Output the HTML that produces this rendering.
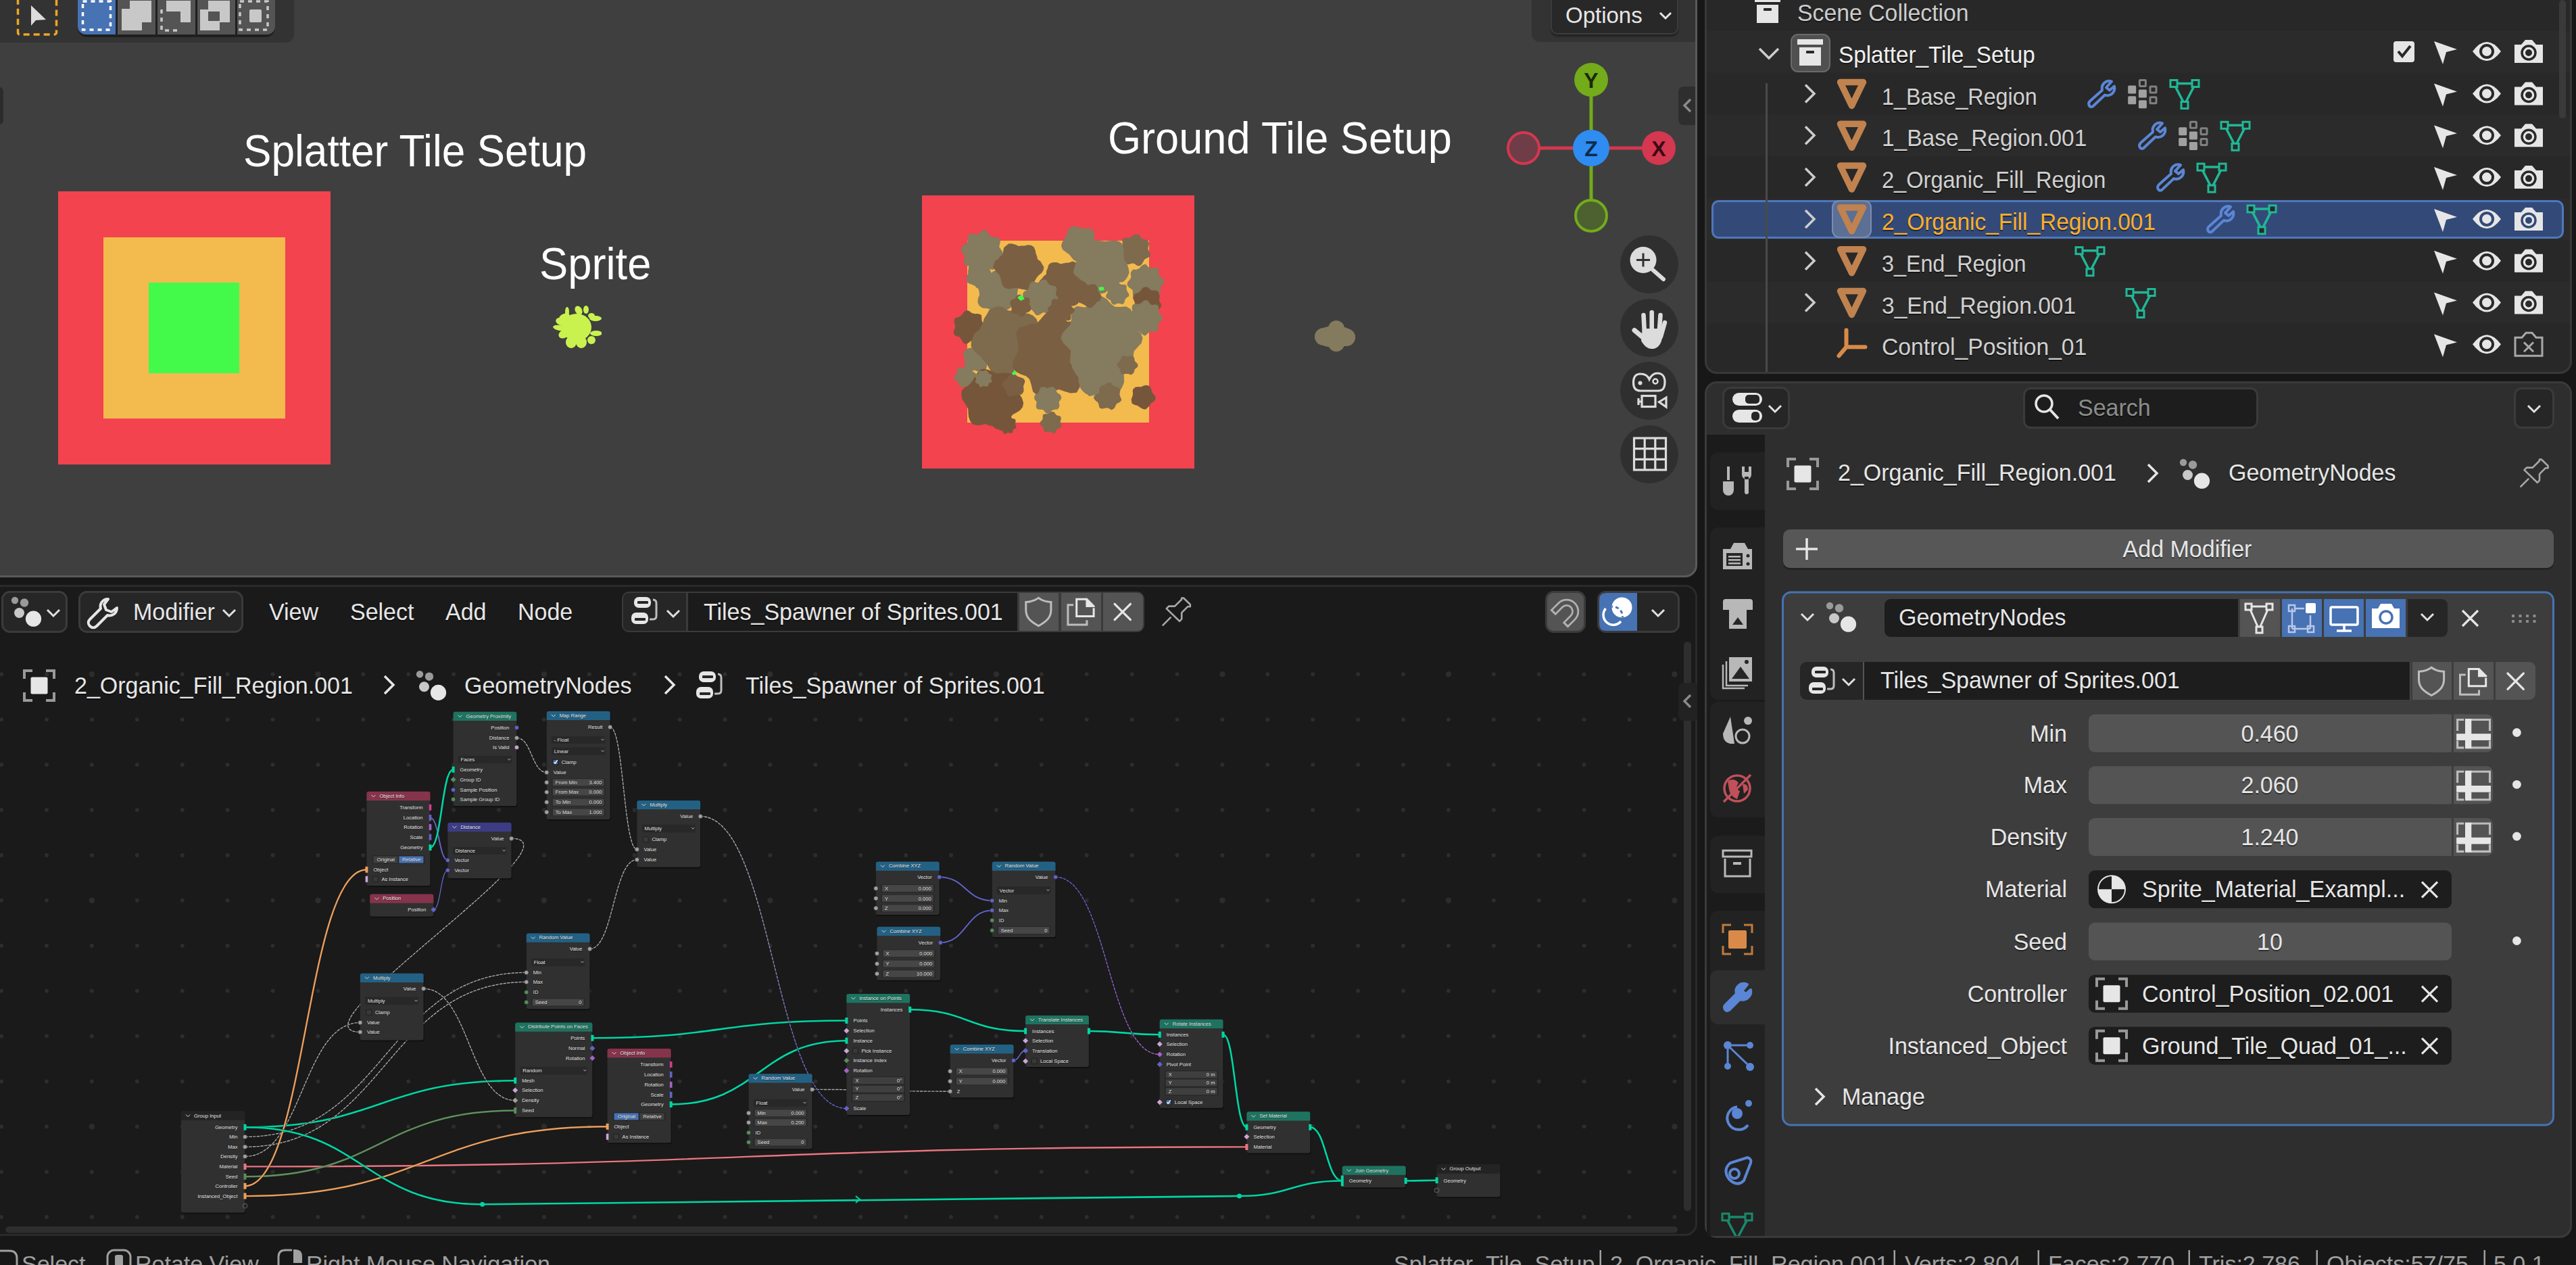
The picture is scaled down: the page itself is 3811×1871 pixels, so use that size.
<!DOCTYPE html>
<html><head><meta charset="utf-8">
<style>
*{box-sizing:border-box}
html,body{margin:0;padding:0}
body{width:3811px;height:1871px;background:#171717;overflow:hidden;position:relative;font-family:"Liberation Sans",sans-serif;color:#e6e6e6}
.a{position:absolute}
.t{position:absolute;white-space:nowrap;line-height:1}
#vp{left:0;top:0;width:2511px;height:854px;background:#3f3f3f;border-right:3px solid #5a5a5a;border-bottom:3px solid #5a5a5a;border-bottom-right-radius:18px;overflow:hidden}
#ne{left:0;top:865px;width:2511px;height:963px;background:#1a1a1a;border:3px solid #2a2a2a;border-left:none;border-radius:0 18px 18px 0;overflow:hidden}
#ol{left:2522px;top:-20px;width:1283px;height:573px;background:#282828;border:3px solid #383838;border-radius:18px;overflow:hidden}
#pr{left:2522px;top:564px;width:1283px;height:1267px;background:#2e2e2e;border:3px solid #3a3a3a;border-radius:18px;overflow:hidden}
#sb{left:0;top:1831px;width:3811px;height:40px;background:#171717}
</style></head>
<body>

<div id="vp" class="a">
 <!-- toolbar header region -->
 <div class="a" style="left:0;top:0;width:435px;height:63px;background:#333333;border-bottom-right-radius:12px"></div>
 <svg class="a" style="left:0;top:0" width="440" height="60" viewBox="0 0 440 60">
  <rect x="26.5" y="-8" width="57" height="59" rx="3" fill="none" stroke="#f0a623" stroke-width="3.5" stroke-dasharray="9 6"/>
  <path d="M46 8 L46 38 L53 30 L68 29 Z" fill="#dcdcdc"/>
 </svg>
 <div class="a" style="left:115px;top:-10px;width:292px;height:65px;background:#1f1f1f;border-radius:0 0 14px 14px"></div>
 <div class="a" style="left:115px;top:-10px;width:56px;height:61px;background:#4772b3;border-radius:0 0 0 12px"></div>
 <div class="a" style="left:174px;top:-10px;width:56px;height:61px;background:#545454"></div>
 <div class="a" style="left:233px;top:-10px;width:56px;height:61px;background:#545454"></div>
 <div class="a" style="left:292px;top:-10px;width:56px;height:61px;background:#545454"></div>
 <div class="a" style="left:351px;top:-10px;width:56px;height:61px;background:#545454;border-radius:0 0 12px 0"></div>
 <svg class="a" style="left:115px;top:0" width="292" height="52" viewBox="0 0 292 52">
  <rect x="7.5" y="2" width="41" height="42" fill="none" stroke="#fff" stroke-width="3.5" stroke-dasharray="6 6"/>
  <path d="M65 13 H77 V1 H109 V33 H95 V45 H65 Z" fill="#c8c8c8"/>
  <path d="M131 1 H167 V33 H152 V17 H131 Z" fill="#c8c8c8"/>
  <path d="M124 14 V45 H152" fill="none" stroke="#c8c8c8" stroke-width="3.5" stroke-dasharray="6 6"/>
  <path d="M181 14 H193 V31 H210 V45 H181 Z M193 1 H225 V33 H210 V17 H193 Z" fill="#c8c8c8"/>
  <rect x="240" y="2" width="41" height="42" fill="none" stroke="#c8c8c8" stroke-width="3.5" stroke-dasharray="6 6"/>
  <rect x="254" y="14" width="18" height="19" rx="2" fill="#c8c8c8"/>
 </svg>
 <div class="a" style="left:-8px;top:129px;width:13px;height:55px;background:#2c2c2c;border-radius:6px"></div>

 <!-- titles -->
 <div class="t" style="left:360px;top:189px;font-size:67px;color:#fff;transform:scaleX(0.928);transform-origin:0 0">Splatter Tile Setup</div>
 <div class="t" style="left:798px;top:356px;font-size:67px;color:#fff;transform:scaleX(0.945);transform-origin:0 0">Sprite</div>
 <div class="t" style="left:1639px;top:170px;font-size:67px;color:#fff;transform:scaleX(0.942);transform-origin:0 0">Ground Tile Setup</div>

 <!-- left squares -->
 <div class="a" style="left:86px;top:283px;width:403px;height:404px;background:#f2434f"></div>
 <div class="a" style="left:153px;top:351px;width:269px;height:268px;background:#f3ba4d"></div>
 <div class="a" style="left:220px;top:418px;width:134px;height:134px;background:#43fa4b"></div>

 <!-- right squares -->
 <div class="a" style="left:1364px;top:289px;width:403px;height:404px;background:#f2434f"></div>
 <div class="a" style="left:1431px;top:356px;width:269px;height:269px;background:#f3ba4d"></div>
<svg class="a" style="left:1380px;top:300px" width="380" height="380" viewBox="1380 300 380 380"><polygon points="1459.1,484.0 1458.2,487.2 1456.7,490.1 1453.2,492.0 1452.0,494.4 1451.8,497.7 1450.7,500.7 1449.1,503.7 1446.3,505.3 1442.6,504.8 1439.5,504.4 1436.7,504.1 1434.0,506.3 1430.8,508.6 1427.4,508.6 1424.6,506.7 1423.0,503.1 1421.2,500.7 1419.6,498.4 1416.4,497.5 1412.7,496.3 1411.0,493.5 1410.6,490.3 1411.9,486.9 1413.1,484.0 1413.0,481.2 1411.7,478.0 1411.6,474.7 1412.1,471.3 1415.2,469.6 1418.8,468.8 1421.2,467.3 1423.3,465.5 1425.1,462.5 1427.6,459.9 1430.7,459.0 1434.0,459.9 1436.8,462.5 1439.5,463.5 1442.2,464.3 1445.6,463.9 1449.0,464.4 1452.0,466.0 1452.2,470.0 1452.4,473.4 1453.1,476.1 1454.8,478.4 1457.5,480.9" fill="#76563a"/><polygon points="1466.4,530.0 1465.4,532.7 1463.1,534.8 1461.8,537.0 1460.2,538.8 1460.0,541.5 1459.3,544.3 1457.9,546.8 1456.1,549.3 1453.3,550.0 1450.5,550.5 1447.6,549.8 1445.0,548.7 1442.7,547.8 1440.2,547.9 1437.5,548.1 1434.8,547.7 1431.8,547.2 1429.8,545.2 1427.7,543.3 1427.0,540.4 1426.7,537.6 1427.0,534.8 1427.4,532.3 1426.6,530.0 1425.3,527.4 1425.3,524.7 1424.9,521.7 1426.3,519.2 1428.4,517.3 1431.1,516.1 1433.4,514.8 1436.1,514.7 1438.2,513.5 1440.1,511.8 1442.3,509.6 1445.0,509.1 1447.9,508.3 1450.6,508.9 1453.1,510.4 1454.9,512.8 1456.5,515.1 1457.6,517.4 1459.5,518.9 1461.7,520.4 1464.5,521.9 1466.4,524.3 1466.5,527.2" fill="#857b5e"/><polygon points="1444.0,557.0 1442.3,558.9 1441.6,560.6 1440.3,562.1 1440.1,564.0 1439.9,566.1 1439.5,568.5 1438.1,570.1 1435.9,570.6 1433.5,570.4 1431.6,570.6 1429.8,570.7 1428.0,571.2 1426.0,572.3 1423.8,572.6 1421.6,572.5 1419.9,571.0 1418.9,568.8 1418.2,566.8 1417.3,565.2 1415.8,564.0 1413.9,562.8 1412.4,561.2 1411.9,559.1 1411.8,557.0 1413.4,555.1 1415.0,553.5 1415.4,551.8 1416.0,550.1 1415.9,547.7 1416.5,545.5 1417.8,543.7 1420.0,543.2 1422.5,543.7 1424.5,543.9 1426.2,543.7 1428.0,542.8 1430.0,541.5 1432.2,541.3 1434.3,541.8 1435.8,543.5 1437.0,545.3 1438.0,547.0 1438.7,548.8 1440.1,550.0 1441.8,551.3 1443.8,552.8 1444.5,554.8" fill="#857b5e"/><polygon points="1482.9,372.0 1483.9,376.1 1483.1,380.1 1478.6,382.6 1475.2,384.8 1474.8,388.8 1474.0,393.0 1472.4,397.3 1468.6,399.0 1463.8,398.0 1459.8,397.5 1456.5,398.9 1453.0,402.2 1448.9,403.1 1445.0,401.9 1442.4,397.6 1439.7,395.0 1436.4,393.6 1431.8,393.2 1427.3,391.7 1426.0,387.6 1427.0,382.8 1427.4,378.9 1425.3,375.6 1422.3,372.0 1421.8,367.9 1423.5,364.1 1427.7,361.5 1431.0,359.3 1431.7,355.7 1431.7,350.7 1433.8,347.0 1437.6,345.3 1442.2,345.9 1446.3,346.9 1449.3,344.1 1453.0,340.9 1457.2,339.7 1460.9,342.7 1463.4,346.8 1465.9,349.7 1469.5,350.6 1474.2,350.8 1478.4,352.5 1479.9,356.4 1479.0,361.2 1478.2,365.3 1480.5,368.4" fill="#857b5e"/><polygon points="1468.6,407.0 1469.5,409.7 1469.3,412.4 1467.4,414.6 1465.8,416.7 1463.1,417.8 1461.2,419.2 1459.3,420.4 1458.2,423.0 1456.5,425.0 1454.3,426.6 1451.8,427.9 1449.0,427.2 1446.5,426.2 1444.1,425.3 1442.5,422.7 1440.4,421.9 1438.4,420.9 1435.8,420.2 1433.3,419.1 1431.0,417.4 1429.7,415.0 1429.0,412.4 1430.3,409.5 1430.9,407.0 1432.4,404.8 1432.1,402.5 1432.3,400.1 1432.9,397.7 1432.8,394.6 1434.5,392.5 1436.1,390.2 1439.2,390.0 1441.7,389.4 1444.5,390.4 1446.8,390.3 1449.0,389.6 1451.4,388.6 1454.0,388.3 1456.9,388.0 1459.6,388.6 1461.2,391.1 1462.9,393.1 1463.8,395.7 1464.2,398.2 1465.1,400.3 1466.1,402.4 1467.9,404.5" fill="#857b5e"/><polygon points="1505.0,433.0 1505.3,436.7 1507.4,441.2 1507.6,445.7 1505.8,449.6 1503.3,453.2 1498.1,454.1 1494.3,455.5 1491.2,457.5 1488.2,460.1 1485.1,463.3 1481.4,466.3 1477.0,467.1 1472.7,465.9 1469.3,461.8 1466.1,459.3 1463.2,456.9 1459.4,456.0 1454.3,455.7 1450.3,453.5 1447.4,450.1 1446.4,445.7 1447.0,441.0 1448.9,436.7 1448.9,433.0 1448.0,429.2 1446.4,424.8 1445.7,420.0 1447.6,416.0 1451.0,413.1 1455.5,411.5 1459.3,409.9 1462.9,408.5 1465.6,405.4 1468.6,401.8 1472.7,400.1 1477.0,398.9 1481.4,399.9 1485.0,403.1 1487.7,407.3 1490.7,409.3 1494.8,409.8 1498.9,411.1 1503.3,412.8 1505.9,416.3 1507.5,420.4 1506.8,425.0 1505.8,429.2" fill="#857b5e"/><polygon points="1544.4,395.0 1543.6,399.8 1540.7,404.0 1536.6,407.3 1533.7,410.4 1531.8,414.0 1529.7,417.7 1528.9,423.5 1525.3,426.7 1521.3,429.6 1516.0,428.6 1511.3,427.7 1507.0,426.7 1503.0,425.4 1498.6,426.5 1493.6,427.4 1488.8,426.6 1484.5,424.3 1482.3,419.7 1481.1,414.8 1480.0,410.6 1478.7,406.7 1475.4,403.5 1472.3,399.6 1469.1,395.0 1470.8,390.2 1472.2,385.7 1477.2,382.7 1479.7,379.3 1483.1,376.6 1484.1,372.1 1485.1,366.4 1488.7,363.3 1492.6,360.3 1497.7,360.4 1502.7,362.0 1507.0,363.9 1511.1,363.6 1515.4,363.5 1520.5,362.3 1525.6,362.8 1529.6,365.6 1531.7,370.3 1532.6,375.3 1534.2,379.3 1535.0,383.4 1539.3,386.4 1541.6,390.4" fill="#7a5f43"/><polygon points="1620.7,360.0 1621.1,363.2 1622.9,366.9 1621.8,370.3 1621.1,373.9 1617.9,376.0 1614.4,377.4 1611.3,378.6 1608.5,380.0 1605.6,380.7 1603.1,382.6 1600.3,385.3 1597.0,386.5 1593.5,386.8 1590.1,385.8 1587.3,383.3 1585.1,380.6 1583.2,378.0 1581.3,375.7 1578.4,374.3 1576.0,372.1 1572.9,370.0 1571.1,366.9 1570.0,363.6 1570.9,360.0 1572.3,356.8 1574.8,354.0 1575.8,351.2 1577.3,348.7 1578.6,345.9 1579.2,342.2 1580.5,338.4 1583.5,336.7 1586.4,334.5 1590.3,334.8 1593.8,335.7 1597.0,336.4 1599.9,337.8 1602.9,337.9 1606.3,337.4 1610.2,337.1 1613.4,338.7 1616.7,340.3 1618.5,343.5 1619.2,347.2 1619.0,350.9 1618.8,354.2 1618.8,357.1" fill="#857b5e"/><polygon points="1609.5,420.0 1608.4,424.7 1604.5,428.4 1600.5,431.4 1599.0,435.0 1597.3,438.7 1596.6,443.6 1595.1,448.8 1591.2,451.6 1586.6,452.7 1581.3,450.9 1576.9,449.7 1573.0,449.3 1569.1,449.8 1564.4,451.9 1559.5,452.6 1554.5,452.1 1551.8,447.6 1550.4,442.6 1548.3,438.9 1547.7,434.6 1544.9,431.6 1541.1,428.5 1538.5,424.5 1537.1,420.0 1537.9,415.4 1541.8,411.6 1544.4,408.2 1547.9,405.5 1548.1,400.9 1549.9,396.9 1551.3,391.7 1554.9,388.7 1559.7,387.9 1564.5,388.2 1569.1,390.5 1573.0,389.5 1577.1,388.8 1581.5,388.4 1586.8,386.6 1591.4,388.2 1594.5,392.0 1596.4,396.6 1597.5,401.2 1598.7,405.1 1601.2,408.3 1605.3,411.3 1607.6,415.4" fill="#7a5f43"/><polygon points="1565.1,440.0 1566.3,443.5 1566.4,447.1 1563.3,449.7 1560.3,451.7 1558.3,454.1 1557.8,457.8 1556.5,461.5 1553.9,464.1 1549.8,463.5 1546.0,462.4 1542.9,462.2 1540.0,464.2 1536.5,466.3 1533.0,466.2 1530.5,462.9 1528.3,460.3 1526.1,458.1 1522.4,457.6 1518.4,456.5 1516.2,453.8 1516.7,449.7 1518.4,445.8 1517.1,443.0 1514.9,440.0 1513.2,436.5 1513.6,432.9 1516.5,430.3 1520.6,428.8 1521.7,426.0 1522.7,422.7 1523.9,419.0 1526.5,416.6 1530.2,416.4 1534.1,418.2 1537.0,417.2 1540.0,414.7 1543.5,413.2 1547.0,413.8 1549.7,416.7 1551.6,419.9 1554.0,421.7 1557.6,422.4 1561.6,423.4 1563.2,426.6 1562.9,430.5 1561.9,434.1 1562.8,437.0" fill="#857b5e"/><polygon points="1699.0,370.0 1701.0,372.9 1702.0,376.2 1701.7,379.4 1698.2,381.1 1695.2,382.4 1693.0,384.0 1691.7,386.5 1690.1,389.3 1688.2,392.1 1685.3,393.4 1682.0,392.7 1679.0,390.5 1676.4,389.4 1673.7,389.7 1670.3,391.0 1667.1,390.7 1664.8,388.5 1663.4,385.6 1662.5,382.7 1661.3,380.2 1659.6,378.0 1656.3,376.1 1654.6,373.2 1655.9,370.0 1657.9,367.2 1659.3,364.7 1660.8,362.5 1660.6,359.4 1660.4,355.8 1661.8,352.8 1664.9,351.6 1668.5,351.8 1671.4,351.7 1673.8,350.6 1676.1,348.1 1679.0,346.6 1682.1,346.4 1685.1,347.2 1687.2,350.2 1688.9,352.9 1691.5,353.8 1694.5,354.5 1697.7,355.6 1699.5,358.1 1700.0,361.3 1699.0,364.6 1698.5,367.4" fill="#7e6a4d"/><polygon points="1722.4,418.0 1719.5,421.2 1717.3,424.0 1716.2,426.8 1717.0,430.7 1716.6,434.6 1714.4,437.4 1709.9,437.5 1706.2,437.4 1703.8,439.3 1701.5,442.4 1698.5,444.6 1695.0,444.3 1691.8,442.6 1689.2,439.6 1685.9,439.9 1682.4,439.9 1678.5,439.5 1676.0,437.0 1675.9,432.6 1675.6,429.2 1673.1,427.1 1669.8,424.7 1667.5,421.6 1668.0,418.0 1670.3,414.7 1672.6,412.0 1673.5,409.1 1672.6,405.1 1673.7,401.7 1675.8,398.8 1680.2,398.7 1683.5,398.1 1686.1,396.4 1688.5,393.6 1691.5,391.4 1695.0,390.6 1698.1,394.2 1700.8,396.2 1703.8,396.8 1707.7,396.1 1711.9,396.0 1714.4,398.6 1714.1,403.3 1714.7,406.6 1716.2,409.2 1719.8,411.4 1722.0,414.4" fill="#857b5e"/><polygon points="1715.3,446.0 1717.1,448.6 1718.1,451.7 1717.4,454.4 1715.4,456.6 1712.6,457.9 1710.2,459.2 1707.9,460.2 1706.4,462.3 1704.6,464.4 1702.5,466.5 1699.9,467.9 1697.0,467.1 1694.4,465.5 1692.1,464.1 1690.2,462.4 1687.9,461.8 1684.5,462.3 1681.8,461.2 1679.4,459.5 1678.9,456.5 1678.9,453.5 1678.9,450.8 1679.1,448.4 1678.2,446.0 1677.1,443.4 1676.0,440.4 1676.7,437.6 1678.3,435.2 1681.0,433.7 1684.3,433.3 1685.8,431.4 1687.7,429.9 1689.2,427.2 1691.4,425.2 1694.2,424.4 1697.0,424.4 1699.6,425.9 1701.7,428.6 1703.9,429.4 1706.5,429.5 1709.5,429.7 1712.6,430.4 1714.4,432.6 1715.0,435.6 1715.7,438.3 1715.2,441.1 1714.9,443.6" fill="#76563a"/><polygon points="1720.1,470.0 1718.9,473.3 1716.0,475.9 1714.0,478.3 1713.6,481.3 1714.1,485.4 1712.8,488.8 1709.7,490.4 1705.8,490.4 1702.3,489.9 1699.8,491.7 1697.2,494.1 1694.0,496.7 1690.7,495.0 1687.9,492.9 1685.7,490.2 1682.9,489.2 1679.2,489.3 1675.6,488.4 1673.6,485.7 1673.7,481.7 1674.4,478.1 1672.8,475.7 1669.4,473.2 1667.5,470.0 1668.8,466.7 1671.9,464.1 1673.9,461.7 1675.1,459.1 1674.5,455.0 1675.4,451.4 1678.1,449.3 1682.3,449.8 1685.5,449.6 1688.2,448.3 1690.8,445.7 1694.0,443.9 1697.4,444.1 1700.1,447.4 1702.2,450.2 1704.9,451.1 1709.1,450.3 1712.8,451.2 1714.2,454.5 1713.8,458.6 1714.2,461.6 1716.2,464.1 1718.3,466.8" fill="#857b5e"/><polygon points="1668.1,392.0 1669.6,397.2 1670.6,402.9 1668.7,408.0 1666.0,412.8 1662.1,416.7 1655.8,417.8 1651.6,420.2 1647.3,421.9 1644.1,426.1 1639.9,428.8 1635.4,432.7 1630.0,434.2 1624.3,435.1 1619.5,431.1 1615.1,428.1 1611.7,423.8 1608.1,420.5 1604.9,417.1 1599.8,415.1 1596.4,411.4 1591.1,408.1 1587.8,403.3 1588.9,397.4 1590.6,392.0 1592.3,387.0 1595.6,382.8 1597.2,378.4 1599.3,374.3 1599.8,368.8 1600.9,362.9 1604.4,358.6 1609.0,355.6 1614.4,354.3 1620.0,354.7 1625.3,356.0 1630.0,356.4 1634.6,357.0 1639.5,356.5 1644.9,356.1 1651.0,355.7 1656.5,357.5 1660.7,361.3 1662.3,367.2 1662.5,373.2 1662.6,378.5 1663.1,383.1 1665.3,387.4" fill="#857b5e"/><polygon points="1535.1,505.0 1535.8,511.0 1538.5,518.0 1538.0,524.9 1537.3,532.3 1531.5,536.8 1526.4,541.4 1518.6,542.3 1512.6,544.2 1506.8,545.6 1501.6,548.1 1496.3,552.9 1490.0,555.8 1483.0,558.1 1476.2,556.4 1469.8,553.8 1465.3,547.8 1461.8,541.7 1458.6,536.4 1454.3,532.4 1451.1,527.5 1445.5,523.4 1440.9,518.2 1436.5,512.0 1436.8,505.0 1439.3,498.3 1442.2,492.2 1448.9,488.0 1451.2,482.6 1454.1,477.5 1456.0,471.0 1459.7,465.6 1463.3,458.8 1469.3,455.0 1476.1,453.2 1483.3,454.0 1490.0,458.9 1495.9,459.8 1501.2,463.3 1507.6,462.5 1514.1,463.2 1521.7,463.7 1528.3,466.7 1533.4,471.7 1535.7,478.6 1534.5,486.6 1534.5,493.1 1532.7,499.4" fill="#7e6a4d"/><polygon points="1622.4,524.0 1624.5,532.5 1620.8,540.3 1613.7,546.2 1606.5,550.8 1603.0,557.0 1599.5,563.5 1597.4,572.7 1592.8,580.8 1583.8,581.4 1574.6,578.7 1566.8,575.9 1560.0,577.9 1552.5,580.8 1543.4,586.1 1534.7,585.0 1528.1,579.2 1525.6,568.8 1523.1,560.9 1518.0,556.2 1509.3,553.3 1500.8,548.5 1497.6,540.7 1499.7,531.9 1503.8,524.0 1506.9,517.0 1506.8,509.7 1504.5,501.0 1503.8,491.5 1508.4,484.4 1517.7,481.7 1525.5,479.0 1533.7,478.5 1538.8,472.9 1544.5,466.3 1551.5,459.6 1560.0,460.6 1567.8,465.1 1574.1,471.5 1579.9,475.9 1588.4,474.8 1597.2,475.5 1605.3,478.7 1610.5,485.3 1612.7,493.6 1610.4,503.1 1610.6,510.4 1616.8,516.5" fill="#7a5f43"/><polygon points="1690.5,500.0 1688.5,507.7 1682.5,514.1 1677.5,519.7 1676.8,527.0 1675.4,534.8 1673.1,543.1 1665.3,546.0 1656.3,545.6 1649.8,547.8 1643.8,551.3 1637.8,559.2 1630.0,561.2 1622.2,559.6 1616.2,551.5 1611.0,546.0 1603.2,546.5 1593.6,547.4 1587.2,542.8 1582.9,536.1 1583.4,526.9 1584.2,519.0 1579.2,513.6 1573.0,507.5 1569.2,500.0 1572.1,492.4 1578.1,486.1 1583.0,480.5 1584.9,474.0 1584.7,465.2 1586.8,456.8 1593.7,452.7 1603.7,454.4 1610.9,453.9 1616.5,449.7 1622.3,441.2 1630.0,438.3 1637.6,442.6 1643.6,449.4 1649.2,453.7 1656.5,454.1 1665.9,453.3 1672.7,457.3 1676.1,464.6 1676.8,473.0 1676.3,480.8 1680.5,486.5 1687.5,492.4" fill="#857b5e"/><polygon points="1666.6,545.0 1663.9,549.7 1662.6,554.3 1663.0,559.5 1663.0,565.2 1661.1,570.4 1658.5,575.5 1655.0,580.2 1648.9,581.2 1642.9,581.0 1637.9,582.1 1632.7,580.7 1628.0,581.9 1623.1,582.5 1617.3,584.9 1611.6,584.5 1606.4,582.5 1602.1,578.7 1598.6,574.4 1596.9,568.9 1595.4,563.8 1595.5,558.5 1592.2,554.6 1589.6,550.1 1586.5,545.0 1585.6,539.4 1586.0,533.7 1588.4,528.6 1592.2,524.3 1598.5,522.3 1602.3,519.3 1605.6,515.8 1608.8,511.7 1612.9,508.6 1617.2,504.7 1622.2,500.6 1628.0,500.4 1633.5,503.4 1638.0,507.7 1642.6,509.9 1645.9,514.0 1650.7,515.4 1655.4,517.6 1661.1,519.6 1664.8,523.8 1669.2,527.9 1669.2,534.0 1668.5,539.7" fill="#857b5e"/><polygon points="1512.4,590.0 1514.1,596.1 1513.0,602.1 1508.9,606.9 1503.3,610.4 1498.2,613.2 1495.3,617.3 1493.7,623.5 1490.9,629.7 1485.7,632.6 1480.1,635.3 1473.8,634.4 1468.0,630.0 1462.8,629.3 1458.1,627.1 1451.9,628.8 1445.4,629.1 1439.1,627.6 1435.2,622.8 1433.0,616.8 1432.4,610.6 1432.2,604.8 1429.8,600.2 1426.7,595.4 1423.1,590.0 1422.3,584.0 1422.6,577.8 1427.2,573.1 1433.0,569.8 1436.7,566.0 1439.8,561.8 1442.6,556.9 1445.8,551.6 1450.0,546.5 1456.1,545.6 1462.3,546.9 1468.0,549.2 1473.0,552.3 1478.1,552.2 1484.0,551.4 1490.0,551.8 1496.9,552.4 1500.4,557.6 1503.5,562.8 1504.0,569.2 1503.9,575.1 1505.0,580.1 1509.4,584.5" fill="#76563a"/><polygon points="1502.4,628.0 1503.1,629.7 1503.5,631.6 1502.8,633.3 1500.9,634.3 1499.1,635.0 1498.5,636.5 1498.4,638.9 1497.1,640.3 1495.3,640.9 1493.3,640.2 1491.5,639.7 1490.0,640.4 1488.3,641.3 1486.2,642.0 1484.7,640.8 1483.9,638.6 1482.9,637.2 1481.3,636.7 1479.0,636.4 1477.6,635.1 1477.4,633.2 1477.7,631.3 1478.4,629.5 1477.7,628.0 1476.5,626.2 1476.4,624.3 1477.4,622.8 1479.4,621.9 1480.8,620.9 1481.3,619.3 1481.8,617.4 1482.9,615.7 1484.8,615.4 1486.7,615.8 1488.5,616.5 1490.0,615.6 1491.7,614.9 1493.8,614.0 1495.4,615.0 1496.2,617.2 1497.1,618.7 1498.8,619.2 1501.0,619.6 1502.2,620.9 1502.7,622.7 1502.3,624.7 1501.8,626.5" fill="#76563a"/><polygon points="1569.3,591.0 1567.3,593.3 1566.5,595.4 1567.3,598.2 1567.4,601.0 1566.3,603.5 1564.5,605.5 1561.0,605.4 1558.8,606.2 1556.5,606.8 1554.9,609.2 1552.7,611.6 1550.0,612.0 1547.4,611.0 1545.3,608.5 1543.6,606.4 1541.5,605.7 1538.7,605.8 1535.5,605.5 1533.5,603.7 1532.8,600.9 1532.9,598.1 1533.8,595.3 1532.8,593.3 1530.7,591.0 1530.0,588.4 1530.4,585.7 1532.1,583.6 1534.8,582.2 1536.5,580.7 1537.6,578.6 1538.1,575.5 1539.6,573.0 1542.2,572.2 1545.0,572.2 1547.7,573.5 1550.0,574.2 1552.4,572.8 1555.0,572.2 1557.8,572.1 1560.1,573.5 1561.7,575.8 1562.7,578.3 1563.8,580.4 1565.7,581.9 1568.2,583.5 1569.7,585.7 1570.4,588.3" fill="#857b5e"/><polygon points="1568.8,625.0 1569.9,627.0 1570.6,629.2 1570.2,631.3 1568.3,632.7 1566.1,633.5 1564.3,634.3 1563.2,635.7 1562.4,637.9 1561.1,639.8 1559.3,641.2 1557.0,640.0 1555.0,639.2 1553.2,638.5 1551.4,638.3 1549.2,639.1 1546.8,639.2 1545.0,638.1 1544.1,635.9 1543.9,633.5 1543.2,631.8 1541.9,630.4 1540.4,628.9 1538.6,627.2 1538.4,625.0 1539.9,623.0 1541.6,621.4 1542.5,619.8 1542.7,617.9 1542.6,615.5 1543.1,613.1 1545.4,612.5 1547.5,612.0 1549.8,612.5 1551.4,611.5 1553.1,610.8 1555.0,609.1 1557.1,608.9 1559.2,609.3 1560.7,611.1 1562.0,612.9 1563.2,614.3 1565.2,614.8 1567.8,615.2 1569.4,616.7 1569.8,618.9 1569.3,621.2 1568.8,623.2" fill="#7e6a4d"/><polygon points="1657.2,586.0 1658.0,588.5 1659.4,591.5 1657.7,593.7 1655.5,595.5 1652.8,596.6 1651.3,598.3 1650.2,600.6 1649.0,603.2 1646.9,605.1 1644.4,606.2 1641.5,604.7 1639.0,603.3 1636.7,603.4 1634.3,603.7 1631.3,604.6 1628.5,604.2 1626.3,602.5 1625.7,599.3 1625.0,596.8 1623.9,594.7 1621.6,593.2 1619.6,591.2 1618.1,588.8 1618.7,586.0 1620.8,583.6 1622.6,581.6 1622.9,579.3 1623.2,576.8 1622.6,573.4 1624.5,571.5 1627.1,570.5 1630.0,570.5 1632.3,569.8 1634.5,569.3 1636.6,567.5 1639.0,566.0 1641.7,565.8 1644.2,566.7 1646.0,569.2 1647.7,571.0 1649.9,571.8 1652.3,572.7 1655.4,573.4 1656.9,575.7 1657.3,578.4 1656.6,581.3 1656.3,583.7" fill="#7e6a4d"/><polygon points="1709.5,587.0 1709.7,589.5 1708.7,591.7 1707.1,593.7 1705.1,595.1 1703.1,596.3 1702.1,598.1 1700.8,599.7 1699.4,601.6 1697.6,603.0 1695.8,605.1 1693.5,605.6 1691.0,605.1 1688.8,603.7 1686.8,602.8 1685.1,601.4 1683.4,600.2 1681.3,599.6 1679.1,598.9 1676.8,597.9 1674.5,596.5 1674.2,594.0 1673.6,591.7 1674.1,589.2 1675.0,587.0 1675.7,585.0 1676.0,583.0 1676.0,580.8 1675.7,578.2 1676.2,575.7 1678.1,574.1 1679.8,572.5 1682.5,572.2 1684.8,572.0 1687.1,572.4 1689.0,571.8 1691.0,571.0 1693.2,570.0 1695.6,569.7 1698.0,570.0 1700.3,570.9 1702.0,572.7 1702.9,575.1 1703.8,577.2 1704.0,579.5 1705.2,581.1 1706.3,582.9 1708.3,584.7" fill="#76563a"/><polygon points="1683.4,540.0 1683.4,542.0 1681.8,543.7 1680.3,545.1 1678.7,546.2 1678.4,547.9 1677.9,549.9 1676.9,551.6 1675.6,553.1 1673.9,554.3 1671.7,554.0 1669.7,553.1 1668.0,553.0 1666.3,552.8 1664.5,553.0 1662.4,553.5 1660.5,553.1 1658.6,552.3 1657.7,550.3 1657.4,548.2 1657.1,546.3 1656.1,544.9 1654.8,543.5 1653.5,541.9 1652.7,540.0 1652.9,538.0 1654.4,536.4 1655.5,534.8 1657.0,533.6 1657.6,532.0 1658.5,530.5 1659.0,528.2 1660.2,526.6 1662.2,525.9 1664.4,526.5 1666.3,526.8 1668.0,527.4 1669.7,527.0 1671.5,526.8 1673.7,526.3 1675.6,526.8 1677.2,528.0 1678.2,529.8 1678.4,532.0 1678.8,533.8 1679.7,535.1 1681.3,536.4 1682.8,538.1" fill="#7e6a4d"/><polygon points="1628.0,572.0 1627.1,573.6 1626.4,575.0 1626.4,576.7 1626.6,578.7 1626.2,580.6 1625.2,582.2 1623.3,582.9 1621.3,583.0 1619.7,583.3 1618.0,583.2 1616.6,584.4 1615.0,585.5 1613.2,585.7 1611.3,585.9 1609.8,584.6 1608.7,582.9 1607.8,581.3 1606.8,580.2 1605.4,579.3 1603.7,578.5 1602.3,577.3 1600.9,575.8 1601.4,573.8 1601.9,572.0 1603.1,570.4 1604.0,569.1 1603.5,567.2 1603.7,565.4 1604.0,563.6 1604.7,561.7 1606.7,561.1 1608.7,561.1 1610.5,561.1 1611.9,560.5 1613.5,560.2 1615.0,559.0 1616.9,557.9 1618.7,558.1 1620.3,559.2 1621.5,560.8 1622.4,562.3 1623.4,563.6 1624.7,564.5 1626.6,565.3 1628.0,566.6 1628.9,568.3 1628.5,570.2" fill="#857b5e"/><polygon points="1524.0,452.0 1524.9,454.0 1525.7,456.2 1525.0,458.2 1523.8,459.9 1521.9,461.2 1519.9,461.9 1518.3,462.8 1516.9,464.0 1515.8,465.9 1514.2,467.6 1512.2,468.4 1510.0,467.9 1508.0,466.9 1506.3,465.7 1504.9,464.3 1502.9,464.3 1500.6,464.2 1498.6,463.4 1496.9,462.0 1495.9,460.2 1496.6,457.5 1496.6,455.6 1496.9,453.7 1495.7,452.0 1494.6,450.0 1494.4,447.8 1495.0,445.8 1496.1,444.0 1498.2,442.9 1500.1,442.1 1501.8,441.3 1502.9,439.7 1504.1,437.8 1505.8,436.4 1507.9,435.7 1510.0,435.7 1511.9,437.5 1513.6,438.5 1515.1,439.6 1517.1,439.7 1519.1,440.2 1521.7,440.3 1523.0,442.0 1523.5,444.2 1523.6,446.4 1523.3,448.4 1523.0,450.3" fill="#7a5f43"/><polygon points="1589.7,458.0 1589.6,460.6 1587.5,462.7 1584.9,464.2 1584.1,466.1 1584.2,468.9 1584.1,472.1 1582.2,473.9 1579.2,474.0 1576.5,473.6 1574.2,473.8 1572.3,475.5 1570.0,477.9 1567.5,477.0 1565.3,475.7 1563.8,472.9 1561.7,472.3 1558.9,472.4 1556.0,472.0 1554.7,469.7 1554.3,467.1 1554.5,464.4 1553.9,462.3 1552.3,460.3 1550.0,458.0 1550.4,455.4 1552.5,453.3 1554.6,451.6 1555.8,449.8 1555.5,446.9 1556.3,444.3 1558.0,442.3 1560.9,442.2 1563.5,442.4 1565.7,442.0 1567.7,440.2 1570.0,438.2 1572.6,438.3 1574.6,440.7 1576.3,442.7 1578.1,443.9 1580.9,443.7 1583.9,444.1 1585.2,446.3 1585.9,448.8 1584.9,451.8 1585.7,453.8 1587.7,455.7" fill="#7a5f43"/><polygon points="1629.1,437.0 1629.6,439.5 1628.7,441.7 1628.0,444.0 1625.9,445.6 1623.4,446.5 1621.6,447.6 1620.6,449.5 1619.1,451.1 1617.5,452.7 1615.6,454.2 1613.4,455.2 1611.0,455.3 1608.7,454.8 1606.7,452.9 1605.1,451.2 1603.2,450.5 1601.3,449.6 1599.5,448.5 1596.8,447.9 1595.0,446.3 1593.5,444.2 1593.2,441.8 1593.5,439.3 1594.6,437.0 1595.4,434.9 1596.4,433.1 1596.1,430.8 1596.3,428.5 1596.6,425.9 1597.9,423.9 1599.5,422.0 1602.0,421.5 1604.6,421.6 1607.0,421.9 1609.0,422.1 1611.0,421.5 1613.1,421.2 1615.5,420.2 1617.9,420.4 1620.3,420.8 1622.2,422.4 1623.4,424.6 1624.3,426.8 1624.1,429.4 1625.4,431.0 1626.2,432.9 1627.6,434.8" fill="#7a5f43"/><polygon points="1669.8,434.0 1670.4,436.3 1669.9,438.5 1667.2,439.9 1665.7,441.3 1664.6,442.9 1663.8,444.8 1663.4,447.6 1661.9,449.4 1659.6,449.9 1657.0,448.9 1654.9,448.8 1653.0,448.7 1650.9,449.7 1648.5,450.9 1646.4,449.9 1644.5,448.6 1643.6,446.2 1642.9,444.1 1641.0,443.2 1639.2,442.0 1637.0,440.6 1636.1,438.5 1636.4,436.2 1638.1,434.0 1638.8,432.1 1638.7,430.2 1637.9,427.8 1637.7,425.2 1639.3,423.5 1641.3,422.3 1643.9,422.2 1645.8,421.5 1647.3,420.2 1648.7,418.1 1650.7,416.3 1653.0,416.5 1655.1,417.8 1656.8,419.8 1658.5,420.8 1660.5,420.9 1663.2,420.7 1665.5,421.5 1666.8,423.4 1666.5,426.2 1666.7,428.3 1667.3,430.2 1668.4,432.0" fill="#857b5e"/><polygon points="1514.4,570.0 1513.9,571.8 1514.5,573.9 1514.4,576.0 1514.6,578.4 1513.5,580.4 1512.4,582.4 1510.4,583.6 1508.0,583.9 1505.7,583.8 1503.8,584.2 1501.9,584.5 1500.0,585.3 1498.0,585.6 1495.7,586.1 1493.2,586.3 1491.2,585.2 1489.9,583.1 1488.8,581.2 1488.0,579.2 1487.6,577.2 1486.8,575.5 1484.8,574.1 1484.1,572.1 1482.4,570.0 1482.8,567.7 1483.5,565.6 1484.7,563.7 1486.4,562.2 1488.6,561.3 1490.1,560.1 1491.2,558.5 1492.1,556.3 1493.5,554.4 1495.4,552.8 1497.7,552.6 1500.0,553.0 1502.1,553.9 1503.9,555.3 1505.5,556.7 1507.3,557.3 1509.2,558.0 1511.2,558.8 1513.7,559.5 1515.3,561.2 1516.4,563.2 1516.1,565.7 1515.2,568.0" fill="#7a5f43"/><polygon points="1465.6,560.0 1466.6,561.5 1467.7,563.4 1467.2,565.1 1465.6,566.1 1463.6,566.6 1462.7,567.7 1462.3,569.5 1461.5,571.3 1460.0,572.0 1458.1,571.6 1456.4,571.0 1455.0,570.7 1453.5,571.7 1451.7,572.4 1449.9,572.3 1448.7,570.8 1448.3,568.8 1447.2,567.8 1445.6,567.2 1444.0,566.3 1442.7,565.1 1443.3,563.1 1443.9,561.5 1444.1,560.0 1443.3,558.5 1442.3,556.6 1442.6,554.9 1444.6,554.0 1446.4,553.4 1447.5,552.5 1447.7,550.5 1448.5,548.7 1449.9,547.8 1451.8,548.2 1453.6,549.1 1455.0,549.1 1456.6,548.1 1458.4,547.4 1460.1,547.8 1461.1,549.5 1461.9,551.0 1462.8,552.2 1464.3,552.9 1466.0,553.7 1467.4,554.9 1466.6,556.9 1466.3,558.5" fill="#857b5e"/><path d="M1505 440 l6 -4 l5 6 l-6 3z M1625 425 l7 -1 l2 5 l-7 1z M1497 553 l4 -6 l3 5 l-4 3z" fill="#43fa4b"/></svg>
<svg class="a" style="left:1935px;top:468px" width="80" height="60" viewBox="0 0 80 60"><g fill="#847a5d"><ellipse cx="40" cy="30" rx="30" ry="16"/><circle cx="42" cy="18" r="12"/><circle cx="23" cy="30" r="13"/><circle cx="57" cy="31" r="13"/><circle cx="42" cy="40" r="12"/></g></svg>

 <!-- splat -->
 <svg class="a" style="left:815px;top:448px" width="75" height="70" viewBox="0 0 75 70">
  <g fill="#c9f24f">
   <ellipse cx="38" cy="36" rx="22" ry="20"/>
   <ellipse cx="20" cy="20" rx="8" ry="4" transform="rotate(-20 20 20)"/>
   <ellipse cx="24" cy="13" rx="3" ry="7"/>
   <ellipse cx="41" cy="11" rx="5" ry="7" transform="rotate(-30 41 11)"/>
   <ellipse cx="52" cy="10" rx="4" ry="6"/>
   <ellipse cx="60" cy="19" rx="5" ry="4"/>
   <ellipse cx="66" cy="23" rx="9" ry="4"/>
   <ellipse cx="17" cy="28" rx="10" ry="6" transform="rotate(15 17 28)"/>
   <ellipse cx="13" cy="37" rx="10" ry="4" transform="rotate(10 13 37)"/>
   <ellipse cx="19" cy="46" rx="8" ry="6" transform="rotate(-30 19 46)"/>
   <ellipse cx="67" cy="45" rx="9" ry="4"/>
   <ellipse cx="60" cy="55" rx="6" ry="6"/>
   <ellipse cx="30" cy="58" rx="8" ry="9"/>
   <ellipse cx="45" cy="58" rx="8" ry="9"/>
   <ellipse cx="13" cy="27" rx="3" ry="4"/>
  </g>
 </svg>

 <!-- header right region -->
 <div class="a" style="left:2266px;top:0;width:245px;height:62px;background:#333333;border-bottom-left-radius:12px"></div>
 <div class="a" style="left:2294px;top:-10px;width:189px;height:61px;background:#282828;border:2px solid #3c3c3c;border-radius:10px;box-shadow:0 3px 2px #222"></div>
 <div class="t" style="left:2316px;top:6px;font-size:33px;color:#e6e6e6">Options</div>
 <svg class="a" style="left:2454px;top:16px" width="20" height="14" viewBox="0 0 20 14"><path d="M2 3 L10 11 L18 3" fill="none" stroke="#e6e6e6" stroke-width="3"/></svg>

 <!-- gizmo -->
 <svg class="a" style="left:2220px;top:85px" width="270" height="270" viewBox="2220 85 270 270">
  <line x1="2254" y1="219" x2="2454" y2="219" stroke="#d43750" stroke-width="5"/>
  <line x1="2354" y1="118" x2="2354" y2="319" stroke="#73ab1a" stroke-width="5"/>
  <circle cx="2254" cy="219" r="23" fill="#6e3d47" stroke="#d43750" stroke-width="4"/>
  <circle cx="2354" cy="319" r="23" fill="#4d6030" stroke="#73ab1a" stroke-width="4"/>
  <circle cx="2454" cy="219" r="25" fill="#d43750"/>
  <circle cx="2354" cy="118" r="25" fill="#73ab1a"/>
  <circle cx="2354" cy="219" r="27" fill="#2f8cf0"/>
  <text x="2454" y="231" font-family="Liberation Sans" font-weight="bold" font-size="32" text-anchor="middle" fill="#3a0b14">X</text>
  <text x="2354" y="130" font-family="Liberation Sans" font-weight="bold" font-size="32" text-anchor="middle" fill="#1c2a08">Y</text>
  <text x="2354" y="231" font-family="Liberation Sans" font-weight="bold" font-size="32" text-anchor="middle" fill="#0d2a4d">Z</text>
 </svg>

 <!-- nav buttons -->
 <div class="a" style="left:2397px;top:348px;width:86px;height:86px;border-radius:50%;background:#2f2f2f"></div>
 <div class="a" style="left:2397px;top:442px;width:86px;height:86px;border-radius:50%;background:#2f2f2f"></div>
 <div class="a" style="left:2397px;top:535px;width:86px;height:86px;border-radius:50%;background:#2f2f2f"></div>
 <div class="a" style="left:2397px;top:629px;width:86px;height:86px;border-radius:50%;background:#2f2f2f"></div>
 <svg class="a" style="left:2397px;top:348px" width="86" height="370" viewBox="0 0 86 370">
  <circle cx="34" cy="36.5" r="19.5" fill="#dcdcdc"/>
  <path d="M34 26.5 V46.5 M24 36.5 H44" stroke="#2f2f2f" stroke-width="3" fill="none"/>
  <line x1="48" y1="51" x2="64" y2="65" stroke="#dcdcdc" stroke-width="6" stroke-linecap="round"/>
  <g stroke="#dcdcdc" stroke-linecap="round" fill="none">
   <path d="M34.5 118 L36 146" stroke-width="6.6"/>
   <path d="M46.7 114 L46.7 146" stroke-width="6.6"/>
   <path d="M59.5 118 L57.5 146" stroke-width="6.6"/>
   <path d="M66 129 L60 150" stroke-width="6.4"/>
   <path d="M21 140.5 L37 154" stroke-width="7"/>
  </g>
  <path d="M33 138 H63 L62 152 C60 163 54 168 47 168 C40 168 35 163 31 156 Z" fill="#dcdcdc"/>
  <g fill="none" stroke="#dcdcdc" stroke-width="3.2">
   <path d="M30 205 C22 205 19.5 210 19.5 218 C19.5 226 23 230 30 230 H56 C63 230 66 226 66 217 C66 209 62 204 55 204 C48 204 45 209 43 213 C41 208 37 205 30 205 Z"/>
   <rect x="32" y="237.5" width="20" height="16"/>
   <path d="M27 241 V251 M27 246 H32 M57.5 246.5 L68 240 V254 Z"/>
  </g>
  <circle cx="29.5" cy="218.5" r="3" fill="#dcdcdc"/><circle cx="52" cy="216" r="3.5" fill="none" stroke="#dcdcdc" stroke-width="2.5"/>
  <g fill="none" stroke="#dcdcdc" stroke-width="3.2">
   <rect x="20.5" y="300" width="47" height="47"/>
   <path d="M36.2 300 V347 M51.8 300 V347 M20.5 315.7 H67.5 M20.5 331.3 H67.5"/>
  </g>
 </svg>
 <div class="a" style="left:2483px;top:128px;width:30px;height:57px;background:#2e2e2e;border-radius:8px 0 0 8px"></div>
 <svg class="a" style="left:2483px;top:128px" width="28" height="57" viewBox="0 0 28 57"><path d="M18 19 L9 28 L18 37" fill="none" stroke="#8a8a8a" stroke-width="3.5"/></svg>
</div>

<div id="ne" class="a"></div>
<svg class="a" style="left:0;top:868px" width="2508" height="957" viewBox="0 868 2508 957" font-family="Liberation Sans"><circle cx="2.1" cy="997.3" r="3" fill="#2d2d2d"/><circle cx="69.0" cy="997.3" r="3" fill="#2d2d2d"/><circle cx="135.9" cy="997.3" r="4.2" fill="#2d2d2d"/><circle cx="202.8" cy="997.3" r="3" fill="#2d2d2d"/><circle cx="269.7" cy="997.3" r="3" fill="#2d2d2d"/><circle cx="336.6" cy="997.3" r="3" fill="#2d2d2d"/><circle cx="403.5" cy="997.3" r="3" fill="#2d2d2d"/><circle cx="470.4" cy="997.3" r="4.2" fill="#2d2d2d"/><circle cx="537.3" cy="997.3" r="3" fill="#2d2d2d"/><circle cx="604.2" cy="997.3" r="3" fill="#2d2d2d"/><circle cx="671.1" cy="997.3" r="3" fill="#2d2d2d"/><circle cx="738.0" cy="997.3" r="3" fill="#2d2d2d"/><circle cx="804.9" cy="997.3" r="4.2" fill="#2d2d2d"/><circle cx="871.8" cy="997.3" r="3" fill="#2d2d2d"/><circle cx="938.7" cy="997.3" r="3" fill="#2d2d2d"/><circle cx="1005.6" cy="997.3" r="3" fill="#2d2d2d"/><circle cx="1072.5" cy="997.3" r="3" fill="#2d2d2d"/><circle cx="1139.4" cy="997.3" r="4.2" fill="#2d2d2d"/><circle cx="1206.3" cy="997.3" r="3" fill="#2d2d2d"/><circle cx="1273.2" cy="997.3" r="3" fill="#2d2d2d"/><circle cx="1340.1" cy="997.3" r="3" fill="#2d2d2d"/><circle cx="1407.0" cy="997.3" r="3" fill="#2d2d2d"/><circle cx="1473.9" cy="997.3" r="4.2" fill="#2d2d2d"/><circle cx="1540.8" cy="997.3" r="3" fill="#2d2d2d"/><circle cx="1607.7" cy="997.3" r="3" fill="#2d2d2d"/><circle cx="1674.6" cy="997.3" r="3" fill="#2d2d2d"/><circle cx="1741.5" cy="997.3" r="3" fill="#2d2d2d"/><circle cx="1808.4" cy="997.3" r="4.2" fill="#2d2d2d"/><circle cx="1875.3" cy="997.3" r="3" fill="#2d2d2d"/><circle cx="1942.2" cy="997.3" r="3" fill="#2d2d2d"/><circle cx="2009.1" cy="997.3" r="3" fill="#2d2d2d"/><circle cx="2076.0" cy="997.3" r="3" fill="#2d2d2d"/><circle cx="2142.9" cy="997.3" r="4.2" fill="#2d2d2d"/><circle cx="2209.8" cy="997.3" r="3" fill="#2d2d2d"/><circle cx="2276.7" cy="997.3" r="3" fill="#2d2d2d"/><circle cx="2343.6" cy="997.3" r="3" fill="#2d2d2d"/><circle cx="2410.5" cy="997.3" r="3" fill="#2d2d2d"/><circle cx="2477.4" cy="997.3" r="4.2" fill="#2d2d2d"/><circle cx="2.1" cy="1064.2" r="3" fill="#2d2d2d"/><circle cx="69.0" cy="1064.2" r="3" fill="#2d2d2d"/><circle cx="135.9" cy="1064.2" r="3" fill="#2d2d2d"/><circle cx="202.8" cy="1064.2" r="3" fill="#2d2d2d"/><circle cx="269.7" cy="1064.2" r="3" fill="#2d2d2d"/><circle cx="336.6" cy="1064.2" r="3" fill="#2d2d2d"/><circle cx="403.5" cy="1064.2" r="3" fill="#2d2d2d"/><circle cx="470.4" cy="1064.2" r="3" fill="#2d2d2d"/><circle cx="537.3" cy="1064.2" r="3" fill="#2d2d2d"/><circle cx="604.2" cy="1064.2" r="3" fill="#2d2d2d"/><circle cx="671.1" cy="1064.2" r="3" fill="#2d2d2d"/><circle cx="738.0" cy="1064.2" r="3" fill="#2d2d2d"/><circle cx="804.9" cy="1064.2" r="3" fill="#2d2d2d"/><circle cx="871.8" cy="1064.2" r="3" fill="#2d2d2d"/><circle cx="938.7" cy="1064.2" r="3" fill="#2d2d2d"/><circle cx="1005.6" cy="1064.2" r="3" fill="#2d2d2d"/><circle cx="1072.5" cy="1064.2" r="3" fill="#2d2d2d"/><circle cx="1139.4" cy="1064.2" r="3" fill="#2d2d2d"/><circle cx="1206.3" cy="1064.2" r="3" fill="#2d2d2d"/><circle cx="1273.2" cy="1064.2" r="3" fill="#2d2d2d"/><circle cx="1340.1" cy="1064.2" r="3" fill="#2d2d2d"/><circle cx="1407.0" cy="1064.2" r="3" fill="#2d2d2d"/><circle cx="1473.9" cy="1064.2" r="3" fill="#2d2d2d"/><circle cx="1540.8" cy="1064.2" r="3" fill="#2d2d2d"/><circle cx="1607.7" cy="1064.2" r="3" fill="#2d2d2d"/><circle cx="1674.6" cy="1064.2" r="3" fill="#2d2d2d"/><circle cx="1741.5" cy="1064.2" r="3" fill="#2d2d2d"/><circle cx="1808.4" cy="1064.2" r="3" fill="#2d2d2d"/><circle cx="1875.3" cy="1064.2" r="3" fill="#2d2d2d"/><circle cx="1942.2" cy="1064.2" r="3" fill="#2d2d2d"/><circle cx="2009.1" cy="1064.2" r="3" fill="#2d2d2d"/><circle cx="2076.0" cy="1064.2" r="3" fill="#2d2d2d"/><circle cx="2142.9" cy="1064.2" r="3" fill="#2d2d2d"/><circle cx="2209.8" cy="1064.2" r="3" fill="#2d2d2d"/><circle cx="2276.7" cy="1064.2" r="3" fill="#2d2d2d"/><circle cx="2343.6" cy="1064.2" r="3" fill="#2d2d2d"/><circle cx="2410.5" cy="1064.2" r="3" fill="#2d2d2d"/><circle cx="2477.4" cy="1064.2" r="3" fill="#2d2d2d"/><circle cx="2.1" cy="1131.1" r="3" fill="#2d2d2d"/><circle cx="69.0" cy="1131.1" r="3" fill="#2d2d2d"/><circle cx="135.9" cy="1131.1" r="3" fill="#2d2d2d"/><circle cx="202.8" cy="1131.1" r="3" fill="#2d2d2d"/><circle cx="269.7" cy="1131.1" r="3" fill="#2d2d2d"/><circle cx="336.6" cy="1131.1" r="3" fill="#2d2d2d"/><circle cx="403.5" cy="1131.1" r="3" fill="#2d2d2d"/><circle cx="470.4" cy="1131.1" r="3" fill="#2d2d2d"/><circle cx="537.3" cy="1131.1" r="3" fill="#2d2d2d"/><circle cx="604.2" cy="1131.1" r="3" fill="#2d2d2d"/><circle cx="671.1" cy="1131.1" r="3" fill="#2d2d2d"/><circle cx="738.0" cy="1131.1" r="3" fill="#2d2d2d"/><circle cx="804.9" cy="1131.1" r="3" fill="#2d2d2d"/><circle cx="871.8" cy="1131.1" r="3" fill="#2d2d2d"/><circle cx="938.7" cy="1131.1" r="3" fill="#2d2d2d"/><circle cx="1005.6" cy="1131.1" r="3" fill="#2d2d2d"/><circle cx="1072.5" cy="1131.1" r="3" fill="#2d2d2d"/><circle cx="1139.4" cy="1131.1" r="3" fill="#2d2d2d"/><circle cx="1206.3" cy="1131.1" r="3" fill="#2d2d2d"/><circle cx="1273.2" cy="1131.1" r="3" fill="#2d2d2d"/><circle cx="1340.1" cy="1131.1" r="3" fill="#2d2d2d"/><circle cx="1407.0" cy="1131.1" r="3" fill="#2d2d2d"/><circle cx="1473.9" cy="1131.1" r="3" fill="#2d2d2d"/><circle cx="1540.8" cy="1131.1" r="3" fill="#2d2d2d"/><circle cx="1607.7" cy="1131.1" r="3" fill="#2d2d2d"/><circle cx="1674.6" cy="1131.1" r="3" fill="#2d2d2d"/><circle cx="1741.5" cy="1131.1" r="3" fill="#2d2d2d"/><circle cx="1808.4" cy="1131.1" r="3" fill="#2d2d2d"/><circle cx="1875.3" cy="1131.1" r="3" fill="#2d2d2d"/><circle cx="1942.2" cy="1131.1" r="3" fill="#2d2d2d"/><circle cx="2009.1" cy="1131.1" r="3" fill="#2d2d2d"/><circle cx="2076.0" cy="1131.1" r="3" fill="#2d2d2d"/><circle cx="2142.9" cy="1131.1" r="3" fill="#2d2d2d"/><circle cx="2209.8" cy="1131.1" r="3" fill="#2d2d2d"/><circle cx="2276.7" cy="1131.1" r="3" fill="#2d2d2d"/><circle cx="2343.6" cy="1131.1" r="3" fill="#2d2d2d"/><circle cx="2410.5" cy="1131.1" r="3" fill="#2d2d2d"/><circle cx="2477.4" cy="1131.1" r="3" fill="#2d2d2d"/><circle cx="2.1" cy="1198.0" r="3" fill="#2d2d2d"/><circle cx="69.0" cy="1198.0" r="3" fill="#2d2d2d"/><circle cx="135.9" cy="1198.0" r="3" fill="#2d2d2d"/><circle cx="202.8" cy="1198.0" r="3" fill="#2d2d2d"/><circle cx="269.7" cy="1198.0" r="3" fill="#2d2d2d"/><circle cx="336.6" cy="1198.0" r="3" fill="#2d2d2d"/><circle cx="403.5" cy="1198.0" r="3" fill="#2d2d2d"/><circle cx="470.4" cy="1198.0" r="3" fill="#2d2d2d"/><circle cx="537.3" cy="1198.0" r="3" fill="#2d2d2d"/><circle cx="604.2" cy="1198.0" r="3" fill="#2d2d2d"/><circle cx="671.1" cy="1198.0" r="3" fill="#2d2d2d"/><circle cx="738.0" cy="1198.0" r="3" fill="#2d2d2d"/><circle cx="804.9" cy="1198.0" r="3" fill="#2d2d2d"/><circle cx="871.8" cy="1198.0" r="3" fill="#2d2d2d"/><circle cx="938.7" cy="1198.0" r="3" fill="#2d2d2d"/><circle cx="1005.6" cy="1198.0" r="3" fill="#2d2d2d"/><circle cx="1072.5" cy="1198.0" r="3" fill="#2d2d2d"/><circle cx="1139.4" cy="1198.0" r="3" fill="#2d2d2d"/><circle cx="1206.3" cy="1198.0" r="3" fill="#2d2d2d"/><circle cx="1273.2" cy="1198.0" r="3" fill="#2d2d2d"/><circle cx="1340.1" cy="1198.0" r="3" fill="#2d2d2d"/><circle cx="1407.0" cy="1198.0" r="3" fill="#2d2d2d"/><circle cx="1473.9" cy="1198.0" r="3" fill="#2d2d2d"/><circle cx="1540.8" cy="1198.0" r="3" fill="#2d2d2d"/><circle cx="1607.7" cy="1198.0" r="3" fill="#2d2d2d"/><circle cx="1674.6" cy="1198.0" r="3" fill="#2d2d2d"/><circle cx="1741.5" cy="1198.0" r="3" fill="#2d2d2d"/><circle cx="1808.4" cy="1198.0" r="3" fill="#2d2d2d"/><circle cx="1875.3" cy="1198.0" r="3" fill="#2d2d2d"/><circle cx="1942.2" cy="1198.0" r="3" fill="#2d2d2d"/><circle cx="2009.1" cy="1198.0" r="3" fill="#2d2d2d"/><circle cx="2076.0" cy="1198.0" r="3" fill="#2d2d2d"/><circle cx="2142.9" cy="1198.0" r="3" fill="#2d2d2d"/><circle cx="2209.8" cy="1198.0" r="3" fill="#2d2d2d"/><circle cx="2276.7" cy="1198.0" r="3" fill="#2d2d2d"/><circle cx="2343.6" cy="1198.0" r="3" fill="#2d2d2d"/><circle cx="2410.5" cy="1198.0" r="3" fill="#2d2d2d"/><circle cx="2477.4" cy="1198.0" r="3" fill="#2d2d2d"/><circle cx="2.1" cy="1264.9" r="3" fill="#2d2d2d"/><circle cx="69.0" cy="1264.9" r="3" fill="#2d2d2d"/><circle cx="135.9" cy="1264.9" r="3" fill="#2d2d2d"/><circle cx="202.8" cy="1264.9" r="3" fill="#2d2d2d"/><circle cx="269.7" cy="1264.9" r="3" fill="#2d2d2d"/><circle cx="336.6" cy="1264.9" r="3" fill="#2d2d2d"/><circle cx="403.5" cy="1264.9" r="3" fill="#2d2d2d"/><circle cx="470.4" cy="1264.9" r="3" fill="#2d2d2d"/><circle cx="537.3" cy="1264.9" r="3" fill="#2d2d2d"/><circle cx="604.2" cy="1264.9" r="3" fill="#2d2d2d"/><circle cx="671.1" cy="1264.9" r="3" fill="#2d2d2d"/><circle cx="738.0" cy="1264.9" r="3" fill="#2d2d2d"/><circle cx="804.9" cy="1264.9" r="3" fill="#2d2d2d"/><circle cx="871.8" cy="1264.9" r="3" fill="#2d2d2d"/><circle cx="938.7" cy="1264.9" r="3" fill="#2d2d2d"/><circle cx="1005.6" cy="1264.9" r="3" fill="#2d2d2d"/><circle cx="1072.5" cy="1264.9" r="3" fill="#2d2d2d"/><circle cx="1139.4" cy="1264.9" r="3" fill="#2d2d2d"/><circle cx="1206.3" cy="1264.9" r="3" fill="#2d2d2d"/><circle cx="1273.2" cy="1264.9" r="3" fill="#2d2d2d"/><circle cx="1340.1" cy="1264.9" r="3" fill="#2d2d2d"/><circle cx="1407.0" cy="1264.9" r="3" fill="#2d2d2d"/><circle cx="1473.9" cy="1264.9" r="3" fill="#2d2d2d"/><circle cx="1540.8" cy="1264.9" r="3" fill="#2d2d2d"/><circle cx="1607.7" cy="1264.9" r="3" fill="#2d2d2d"/><circle cx="1674.6" cy="1264.9" r="3" fill="#2d2d2d"/><circle cx="1741.5" cy="1264.9" r="3" fill="#2d2d2d"/><circle cx="1808.4" cy="1264.9" r="3" fill="#2d2d2d"/><circle cx="1875.3" cy="1264.9" r="3" fill="#2d2d2d"/><circle cx="1942.2" cy="1264.9" r="3" fill="#2d2d2d"/><circle cx="2009.1" cy="1264.9" r="3" fill="#2d2d2d"/><circle cx="2076.0" cy="1264.9" r="3" fill="#2d2d2d"/><circle cx="2142.9" cy="1264.9" r="3" fill="#2d2d2d"/><circle cx="2209.8" cy="1264.9" r="3" fill="#2d2d2d"/><circle cx="2276.7" cy="1264.9" r="3" fill="#2d2d2d"/><circle cx="2343.6" cy="1264.9" r="3" fill="#2d2d2d"/><circle cx="2410.5" cy="1264.9" r="3" fill="#2d2d2d"/><circle cx="2477.4" cy="1264.9" r="3" fill="#2d2d2d"/><circle cx="2.1" cy="1331.8" r="3" fill="#2d2d2d"/><circle cx="69.0" cy="1331.8" r="3" fill="#2d2d2d"/><circle cx="135.9" cy="1331.8" r="4.2" fill="#2d2d2d"/><circle cx="202.8" cy="1331.8" r="3" fill="#2d2d2d"/><circle cx="269.7" cy="1331.8" r="3" fill="#2d2d2d"/><circle cx="336.6" cy="1331.8" r="3" fill="#2d2d2d"/><circle cx="403.5" cy="1331.8" r="3" fill="#2d2d2d"/><circle cx="470.4" cy="1331.8" r="4.2" fill="#2d2d2d"/><circle cx="537.3" cy="1331.8" r="3" fill="#2d2d2d"/><circle cx="604.2" cy="1331.8" r="3" fill="#2d2d2d"/><circle cx="671.1" cy="1331.8" r="3" fill="#2d2d2d"/><circle cx="738.0" cy="1331.8" r="3" fill="#2d2d2d"/><circle cx="804.9" cy="1331.8" r="4.2" fill="#2d2d2d"/><circle cx="871.8" cy="1331.8" r="3" fill="#2d2d2d"/><circle cx="938.7" cy="1331.8" r="3" fill="#2d2d2d"/><circle cx="1005.6" cy="1331.8" r="3" fill="#2d2d2d"/><circle cx="1072.5" cy="1331.8" r="3" fill="#2d2d2d"/><circle cx="1139.4" cy="1331.8" r="4.2" fill="#2d2d2d"/><circle cx="1206.3" cy="1331.8" r="3" fill="#2d2d2d"/><circle cx="1273.2" cy="1331.8" r="3" fill="#2d2d2d"/><circle cx="1340.1" cy="1331.8" r="3" fill="#2d2d2d"/><circle cx="1407.0" cy="1331.8" r="3" fill="#2d2d2d"/><circle cx="1473.9" cy="1331.8" r="4.2" fill="#2d2d2d"/><circle cx="1540.8" cy="1331.8" r="3" fill="#2d2d2d"/><circle cx="1607.7" cy="1331.8" r="3" fill="#2d2d2d"/><circle cx="1674.6" cy="1331.8" r="3" fill="#2d2d2d"/><circle cx="1741.5" cy="1331.8" r="3" fill="#2d2d2d"/><circle cx="1808.4" cy="1331.8" r="4.2" fill="#2d2d2d"/><circle cx="1875.3" cy="1331.8" r="3" fill="#2d2d2d"/><circle cx="1942.2" cy="1331.8" r="3" fill="#2d2d2d"/><circle cx="2009.1" cy="1331.8" r="3" fill="#2d2d2d"/><circle cx="2076.0" cy="1331.8" r="3" fill="#2d2d2d"/><circle cx="2142.9" cy="1331.8" r="4.2" fill="#2d2d2d"/><circle cx="2209.8" cy="1331.8" r="3" fill="#2d2d2d"/><circle cx="2276.7" cy="1331.8" r="3" fill="#2d2d2d"/><circle cx="2343.6" cy="1331.8" r="3" fill="#2d2d2d"/><circle cx="2410.5" cy="1331.8" r="3" fill="#2d2d2d"/><circle cx="2477.4" cy="1331.8" r="4.2" fill="#2d2d2d"/><circle cx="2.1" cy="1398.7" r="3" fill="#2d2d2d"/><circle cx="69.0" cy="1398.7" r="3" fill="#2d2d2d"/><circle cx="135.9" cy="1398.7" r="3" fill="#2d2d2d"/><circle cx="202.8" cy="1398.7" r="3" fill="#2d2d2d"/><circle cx="269.7" cy="1398.7" r="3" fill="#2d2d2d"/><circle cx="336.6" cy="1398.7" r="3" fill="#2d2d2d"/><circle cx="403.5" cy="1398.7" r="3" fill="#2d2d2d"/><circle cx="470.4" cy="1398.7" r="3" fill="#2d2d2d"/><circle cx="537.3" cy="1398.7" r="3" fill="#2d2d2d"/><circle cx="604.2" cy="1398.7" r="3" fill="#2d2d2d"/><circle cx="671.1" cy="1398.7" r="3" fill="#2d2d2d"/><circle cx="738.0" cy="1398.7" r="3" fill="#2d2d2d"/><circle cx="804.9" cy="1398.7" r="3" fill="#2d2d2d"/><circle cx="871.8" cy="1398.7" r="3" fill="#2d2d2d"/><circle cx="938.7" cy="1398.7" r="3" fill="#2d2d2d"/><circle cx="1005.6" cy="1398.7" r="3" fill="#2d2d2d"/><circle cx="1072.5" cy="1398.7" r="3" fill="#2d2d2d"/><circle cx="1139.4" cy="1398.7" r="3" fill="#2d2d2d"/><circle cx="1206.3" cy="1398.7" r="3" fill="#2d2d2d"/><circle cx="1273.2" cy="1398.7" r="3" fill="#2d2d2d"/><circle cx="1340.1" cy="1398.7" r="3" fill="#2d2d2d"/><circle cx="1407.0" cy="1398.7" r="3" fill="#2d2d2d"/><circle cx="1473.9" cy="1398.7" r="3" fill="#2d2d2d"/><circle cx="1540.8" cy="1398.7" r="3" fill="#2d2d2d"/><circle cx="1607.7" cy="1398.7" r="3" fill="#2d2d2d"/><circle cx="1674.6" cy="1398.7" r="3" fill="#2d2d2d"/><circle cx="1741.5" cy="1398.7" r="3" fill="#2d2d2d"/><circle cx="1808.4" cy="1398.7" r="3" fill="#2d2d2d"/><circle cx="1875.3" cy="1398.7" r="3" fill="#2d2d2d"/><circle cx="1942.2" cy="1398.7" r="3" fill="#2d2d2d"/><circle cx="2009.1" cy="1398.7" r="3" fill="#2d2d2d"/><circle cx="2076.0" cy="1398.7" r="3" fill="#2d2d2d"/><circle cx="2142.9" cy="1398.7" r="3" fill="#2d2d2d"/><circle cx="2209.8" cy="1398.7" r="3" fill="#2d2d2d"/><circle cx="2276.7" cy="1398.7" r="3" fill="#2d2d2d"/><circle cx="2343.6" cy="1398.7" r="3" fill="#2d2d2d"/><circle cx="2410.5" cy="1398.7" r="3" fill="#2d2d2d"/><circle cx="2477.4" cy="1398.7" r="3" fill="#2d2d2d"/><circle cx="2.1" cy="1465.6" r="3" fill="#2d2d2d"/><circle cx="69.0" cy="1465.6" r="3" fill="#2d2d2d"/><circle cx="135.9" cy="1465.6" r="3" fill="#2d2d2d"/><circle cx="202.8" cy="1465.6" r="3" fill="#2d2d2d"/><circle cx="269.7" cy="1465.6" r="3" fill="#2d2d2d"/><circle cx="336.6" cy="1465.6" r="3" fill="#2d2d2d"/><circle cx="403.5" cy="1465.6" r="3" fill="#2d2d2d"/><circle cx="470.4" cy="1465.6" r="3" fill="#2d2d2d"/><circle cx="537.3" cy="1465.6" r="3" fill="#2d2d2d"/><circle cx="604.2" cy="1465.6" r="3" fill="#2d2d2d"/><circle cx="671.1" cy="1465.6" r="3" fill="#2d2d2d"/><circle cx="738.0" cy="1465.6" r="3" fill="#2d2d2d"/><circle cx="804.9" cy="1465.6" r="3" fill="#2d2d2d"/><circle cx="871.8" cy="1465.6" r="3" fill="#2d2d2d"/><circle cx="938.7" cy="1465.6" r="3" fill="#2d2d2d"/><circle cx="1005.6" cy="1465.6" r="3" fill="#2d2d2d"/><circle cx="1072.5" cy="1465.6" r="3" fill="#2d2d2d"/><circle cx="1139.4" cy="1465.6" r="3" fill="#2d2d2d"/><circle cx="1206.3" cy="1465.6" r="3" fill="#2d2d2d"/><circle cx="1273.2" cy="1465.6" r="3" fill="#2d2d2d"/><circle cx="1340.1" cy="1465.6" r="3" fill="#2d2d2d"/><circle cx="1407.0" cy="1465.6" r="3" fill="#2d2d2d"/><circle cx="1473.9" cy="1465.6" r="3" fill="#2d2d2d"/><circle cx="1540.8" cy="1465.6" r="3" fill="#2d2d2d"/><circle cx="1607.7" cy="1465.6" r="3" fill="#2d2d2d"/><circle cx="1674.6" cy="1465.6" r="3" fill="#2d2d2d"/><circle cx="1741.5" cy="1465.6" r="3" fill="#2d2d2d"/><circle cx="1808.4" cy="1465.6" r="3" fill="#2d2d2d"/><circle cx="1875.3" cy="1465.6" r="3" fill="#2d2d2d"/><circle cx="1942.2" cy="1465.6" r="3" fill="#2d2d2d"/><circle cx="2009.1" cy="1465.6" r="3" fill="#2d2d2d"/><circle cx="2076.0" cy="1465.6" r="3" fill="#2d2d2d"/><circle cx="2142.9" cy="1465.6" r="3" fill="#2d2d2d"/><circle cx="2209.8" cy="1465.6" r="3" fill="#2d2d2d"/><circle cx="2276.7" cy="1465.6" r="3" fill="#2d2d2d"/><circle cx="2343.6" cy="1465.6" r="3" fill="#2d2d2d"/><circle cx="2410.5" cy="1465.6" r="3" fill="#2d2d2d"/><circle cx="2477.4" cy="1465.6" r="3" fill="#2d2d2d"/><circle cx="2.1" cy="1532.5" r="3" fill="#2d2d2d"/><circle cx="69.0" cy="1532.5" r="3" fill="#2d2d2d"/><circle cx="135.9" cy="1532.5" r="3" fill="#2d2d2d"/><circle cx="202.8" cy="1532.5" r="3" fill="#2d2d2d"/><circle cx="269.7" cy="1532.5" r="3" fill="#2d2d2d"/><circle cx="336.6" cy="1532.5" r="3" fill="#2d2d2d"/><circle cx="403.5" cy="1532.5" r="3" fill="#2d2d2d"/><circle cx="470.4" cy="1532.5" r="3" fill="#2d2d2d"/><circle cx="537.3" cy="1532.5" r="3" fill="#2d2d2d"/><circle cx="604.2" cy="1532.5" r="3" fill="#2d2d2d"/><circle cx="671.1" cy="1532.5" r="3" fill="#2d2d2d"/><circle cx="738.0" cy="1532.5" r="3" fill="#2d2d2d"/><circle cx="804.9" cy="1532.5" r="3" fill="#2d2d2d"/><circle cx="871.8" cy="1532.5" r="3" fill="#2d2d2d"/><circle cx="938.7" cy="1532.5" r="3" fill="#2d2d2d"/><circle cx="1005.6" cy="1532.5" r="3" fill="#2d2d2d"/><circle cx="1072.5" cy="1532.5" r="3" fill="#2d2d2d"/><circle cx="1139.4" cy="1532.5" r="3" fill="#2d2d2d"/><circle cx="1206.3" cy="1532.5" r="3" fill="#2d2d2d"/><circle cx="1273.2" cy="1532.5" r="3" fill="#2d2d2d"/><circle cx="1340.1" cy="1532.5" r="3" fill="#2d2d2d"/><circle cx="1407.0" cy="1532.5" r="3" fill="#2d2d2d"/><circle cx="1473.9" cy="1532.5" r="3" fill="#2d2d2d"/><circle cx="1540.8" cy="1532.5" r="3" fill="#2d2d2d"/><circle cx="1607.7" cy="1532.5" r="3" fill="#2d2d2d"/><circle cx="1674.6" cy="1532.5" r="3" fill="#2d2d2d"/><circle cx="1741.5" cy="1532.5" r="3" fill="#2d2d2d"/><circle cx="1808.4" cy="1532.5" r="3" fill="#2d2d2d"/><circle cx="1875.3" cy="1532.5" r="3" fill="#2d2d2d"/><circle cx="1942.2" cy="1532.5" r="3" fill="#2d2d2d"/><circle cx="2009.1" cy="1532.5" r="3" fill="#2d2d2d"/><circle cx="2076.0" cy="1532.5" r="3" fill="#2d2d2d"/><circle cx="2142.9" cy="1532.5" r="3" fill="#2d2d2d"/><circle cx="2209.8" cy="1532.5" r="3" fill="#2d2d2d"/><circle cx="2276.7" cy="1532.5" r="3" fill="#2d2d2d"/><circle cx="2343.6" cy="1532.5" r="3" fill="#2d2d2d"/><circle cx="2410.5" cy="1532.5" r="3" fill="#2d2d2d"/><circle cx="2477.4" cy="1532.5" r="3" fill="#2d2d2d"/><circle cx="2.1" cy="1599.4" r="3" fill="#2d2d2d"/><circle cx="69.0" cy="1599.4" r="3" fill="#2d2d2d"/><circle cx="135.9" cy="1599.4" r="3" fill="#2d2d2d"/><circle cx="202.8" cy="1599.4" r="3" fill="#2d2d2d"/><circle cx="269.7" cy="1599.4" r="3" fill="#2d2d2d"/><circle cx="336.6" cy="1599.4" r="3" fill="#2d2d2d"/><circle cx="403.5" cy="1599.4" r="3" fill="#2d2d2d"/><circle cx="470.4" cy="1599.4" r="3" fill="#2d2d2d"/><circle cx="537.3" cy="1599.4" r="3" fill="#2d2d2d"/><circle cx="604.2" cy="1599.4" r="3" fill="#2d2d2d"/><circle cx="671.1" cy="1599.4" r="3" fill="#2d2d2d"/><circle cx="738.0" cy="1599.4" r="3" fill="#2d2d2d"/><circle cx="804.9" cy="1599.4" r="3" fill="#2d2d2d"/><circle cx="871.8" cy="1599.4" r="3" fill="#2d2d2d"/><circle cx="938.7" cy="1599.4" r="3" fill="#2d2d2d"/><circle cx="1005.6" cy="1599.4" r="3" fill="#2d2d2d"/><circle cx="1072.5" cy="1599.4" r="3" fill="#2d2d2d"/><circle cx="1139.4" cy="1599.4" r="3" fill="#2d2d2d"/><circle cx="1206.3" cy="1599.4" r="3" fill="#2d2d2d"/><circle cx="1273.2" cy="1599.4" r="3" fill="#2d2d2d"/><circle cx="1340.1" cy="1599.4" r="3" fill="#2d2d2d"/><circle cx="1407.0" cy="1599.4" r="3" fill="#2d2d2d"/><circle cx="1473.9" cy="1599.4" r="3" fill="#2d2d2d"/><circle cx="1540.8" cy="1599.4" r="3" fill="#2d2d2d"/><circle cx="1607.7" cy="1599.4" r="3" fill="#2d2d2d"/><circle cx="1674.6" cy="1599.4" r="3" fill="#2d2d2d"/><circle cx="1741.5" cy="1599.4" r="3" fill="#2d2d2d"/><circle cx="1808.4" cy="1599.4" r="3" fill="#2d2d2d"/><circle cx="1875.3" cy="1599.4" r="3" fill="#2d2d2d"/><circle cx="1942.2" cy="1599.4" r="3" fill="#2d2d2d"/><circle cx="2009.1" cy="1599.4" r="3" fill="#2d2d2d"/><circle cx="2076.0" cy="1599.4" r="3" fill="#2d2d2d"/><circle cx="2142.9" cy="1599.4" r="3" fill="#2d2d2d"/><circle cx="2209.8" cy="1599.4" r="3" fill="#2d2d2d"/><circle cx="2276.7" cy="1599.4" r="3" fill="#2d2d2d"/><circle cx="2343.6" cy="1599.4" r="3" fill="#2d2d2d"/><circle cx="2410.5" cy="1599.4" r="3" fill="#2d2d2d"/><circle cx="2477.4" cy="1599.4" r="3" fill="#2d2d2d"/><circle cx="2.1" cy="1666.3" r="3" fill="#2d2d2d"/><circle cx="69.0" cy="1666.3" r="3" fill="#2d2d2d"/><circle cx="135.9" cy="1666.3" r="4.2" fill="#2d2d2d"/><circle cx="202.8" cy="1666.3" r="3" fill="#2d2d2d"/><circle cx="269.7" cy="1666.3" r="3" fill="#2d2d2d"/><circle cx="336.6" cy="1666.3" r="3" fill="#2d2d2d"/><circle cx="403.5" cy="1666.3" r="3" fill="#2d2d2d"/><circle cx="470.4" cy="1666.3" r="4.2" fill="#2d2d2d"/><circle cx="537.3" cy="1666.3" r="3" fill="#2d2d2d"/><circle cx="604.2" cy="1666.3" r="3" fill="#2d2d2d"/><circle cx="671.1" cy="1666.3" r="3" fill="#2d2d2d"/><circle cx="738.0" cy="1666.3" r="3" fill="#2d2d2d"/><circle cx="804.9" cy="1666.3" r="4.2" fill="#2d2d2d"/><circle cx="871.8" cy="1666.3" r="3" fill="#2d2d2d"/><circle cx="938.7" cy="1666.3" r="3" fill="#2d2d2d"/><circle cx="1005.6" cy="1666.3" r="3" fill="#2d2d2d"/><circle cx="1072.5" cy="1666.3" r="3" fill="#2d2d2d"/><circle cx="1139.4" cy="1666.3" r="4.2" fill="#2d2d2d"/><circle cx="1206.3" cy="1666.3" r="3" fill="#2d2d2d"/><circle cx="1273.2" cy="1666.3" r="3" fill="#2d2d2d"/><circle cx="1340.1" cy="1666.3" r="3" fill="#2d2d2d"/><circle cx="1407.0" cy="1666.3" r="3" fill="#2d2d2d"/><circle cx="1473.9" cy="1666.3" r="4.2" fill="#2d2d2d"/><circle cx="1540.8" cy="1666.3" r="3" fill="#2d2d2d"/><circle cx="1607.7" cy="1666.3" r="3" fill="#2d2d2d"/><circle cx="1674.6" cy="1666.3" r="3" fill="#2d2d2d"/><circle cx="1741.5" cy="1666.3" r="3" fill="#2d2d2d"/><circle cx="1808.4" cy="1666.3" r="4.2" fill="#2d2d2d"/><circle cx="1875.3" cy="1666.3" r="3" fill="#2d2d2d"/><circle cx="1942.2" cy="1666.3" r="3" fill="#2d2d2d"/><circle cx="2009.1" cy="1666.3" r="3" fill="#2d2d2d"/><circle cx="2076.0" cy="1666.3" r="3" fill="#2d2d2d"/><circle cx="2142.9" cy="1666.3" r="4.2" fill="#2d2d2d"/><circle cx="2209.8" cy="1666.3" r="3" fill="#2d2d2d"/><circle cx="2276.7" cy="1666.3" r="3" fill="#2d2d2d"/><circle cx="2343.6" cy="1666.3" r="3" fill="#2d2d2d"/><circle cx="2410.5" cy="1666.3" r="3" fill="#2d2d2d"/><circle cx="2477.4" cy="1666.3" r="4.2" fill="#2d2d2d"/><circle cx="2.1" cy="1733.2" r="3" fill="#2d2d2d"/><circle cx="69.0" cy="1733.2" r="3" fill="#2d2d2d"/><circle cx="135.9" cy="1733.2" r="3" fill="#2d2d2d"/><circle cx="202.8" cy="1733.2" r="3" fill="#2d2d2d"/><circle cx="269.7" cy="1733.2" r="3" fill="#2d2d2d"/><circle cx="336.6" cy="1733.2" r="3" fill="#2d2d2d"/><circle cx="403.5" cy="1733.2" r="3" fill="#2d2d2d"/><circle cx="470.4" cy="1733.2" r="3" fill="#2d2d2d"/><circle cx="537.3" cy="1733.2" r="3" fill="#2d2d2d"/><circle cx="604.2" cy="1733.2" r="3" fill="#2d2d2d"/><circle cx="671.1" cy="1733.2" r="3" fill="#2d2d2d"/><circle cx="738.0" cy="1733.2" r="3" fill="#2d2d2d"/><circle cx="804.9" cy="1733.2" r="3" fill="#2d2d2d"/><circle cx="871.8" cy="1733.2" r="3" fill="#2d2d2d"/><circle cx="938.7" cy="1733.2" r="3" fill="#2d2d2d"/><circle cx="1005.6" cy="1733.2" r="3" fill="#2d2d2d"/><circle cx="1072.5" cy="1733.2" r="3" fill="#2d2d2d"/><circle cx="1139.4" cy="1733.2" r="3" fill="#2d2d2d"/><circle cx="1206.3" cy="1733.2" r="3" fill="#2d2d2d"/><circle cx="1273.2" cy="1733.2" r="3" fill="#2d2d2d"/><circle cx="1340.1" cy="1733.2" r="3" fill="#2d2d2d"/><circle cx="1407.0" cy="1733.2" r="3" fill="#2d2d2d"/><circle cx="1473.9" cy="1733.2" r="3" fill="#2d2d2d"/><circle cx="1540.8" cy="1733.2" r="3" fill="#2d2d2d"/><circle cx="1607.7" cy="1733.2" r="3" fill="#2d2d2d"/><circle cx="1674.6" cy="1733.2" r="3" fill="#2d2d2d"/><circle cx="1741.5" cy="1733.2" r="3" fill="#2d2d2d"/><circle cx="1808.4" cy="1733.2" r="3" fill="#2d2d2d"/><circle cx="1875.3" cy="1733.2" r="3" fill="#2d2d2d"/><circle cx="1942.2" cy="1733.2" r="3" fill="#2d2d2d"/><circle cx="2009.1" cy="1733.2" r="3" fill="#2d2d2d"/><circle cx="2076.0" cy="1733.2" r="3" fill="#2d2d2d"/><circle cx="2142.9" cy="1733.2" r="3" fill="#2d2d2d"/><circle cx="2209.8" cy="1733.2" r="3" fill="#2d2d2d"/><circle cx="2276.7" cy="1733.2" r="3" fill="#2d2d2d"/><circle cx="2343.6" cy="1733.2" r="3" fill="#2d2d2d"/><circle cx="2410.5" cy="1733.2" r="3" fill="#2d2d2d"/><circle cx="2477.4" cy="1733.2" r="3" fill="#2d2d2d"/><circle cx="2.1" cy="1800.1" r="3" fill="#2d2d2d"/><circle cx="69.0" cy="1800.1" r="3" fill="#2d2d2d"/><circle cx="135.9" cy="1800.1" r="3" fill="#2d2d2d"/><circle cx="202.8" cy="1800.1" r="3" fill="#2d2d2d"/><circle cx="269.7" cy="1800.1" r="3" fill="#2d2d2d"/><circle cx="336.6" cy="1800.1" r="3" fill="#2d2d2d"/><circle cx="403.5" cy="1800.1" r="3" fill="#2d2d2d"/><circle cx="470.4" cy="1800.1" r="3" fill="#2d2d2d"/><circle cx="537.3" cy="1800.1" r="3" fill="#2d2d2d"/><circle cx="604.2" cy="1800.1" r="3" fill="#2d2d2d"/><circle cx="671.1" cy="1800.1" r="3" fill="#2d2d2d"/><circle cx="738.0" cy="1800.1" r="3" fill="#2d2d2d"/><circle cx="804.9" cy="1800.1" r="3" fill="#2d2d2d"/><circle cx="871.8" cy="1800.1" r="3" fill="#2d2d2d"/><circle cx="938.7" cy="1800.1" r="3" fill="#2d2d2d"/><circle cx="1005.6" cy="1800.1" r="3" fill="#2d2d2d"/><circle cx="1072.5" cy="1800.1" r="3" fill="#2d2d2d"/><circle cx="1139.4" cy="1800.1" r="3" fill="#2d2d2d"/><circle cx="1206.3" cy="1800.1" r="3" fill="#2d2d2d"/><circle cx="1273.2" cy="1800.1" r="3" fill="#2d2d2d"/><circle cx="1340.1" cy="1800.1" r="3" fill="#2d2d2d"/><circle cx="1407.0" cy="1800.1" r="3" fill="#2d2d2d"/><circle cx="1473.9" cy="1800.1" r="3" fill="#2d2d2d"/><circle cx="1540.8" cy="1800.1" r="3" fill="#2d2d2d"/><circle cx="1607.7" cy="1800.1" r="3" fill="#2d2d2d"/><circle cx="1674.6" cy="1800.1" r="3" fill="#2d2d2d"/><circle cx="1741.5" cy="1800.1" r="3" fill="#2d2d2d"/><circle cx="1808.4" cy="1800.1" r="3" fill="#2d2d2d"/><circle cx="1875.3" cy="1800.1" r="3" fill="#2d2d2d"/><circle cx="1942.2" cy="1800.1" r="3" fill="#2d2d2d"/><circle cx="2009.1" cy="1800.1" r="3" fill="#2d2d2d"/><circle cx="2076.0" cy="1800.1" r="3" fill="#2d2d2d"/><circle cx="2142.9" cy="1800.1" r="3" fill="#2d2d2d"/><circle cx="2209.8" cy="1800.1" r="3" fill="#2d2d2d"/><circle cx="2276.7" cy="1800.1" r="3" fill="#2d2d2d"/><circle cx="2343.6" cy="1800.1" r="3" fill="#2d2d2d"/><circle cx="2410.5" cy="1800.1" r="3" fill="#2d2d2d"/><circle cx="2477.4" cy="1800.1" r="3" fill="#2d2d2d"/><path d="M362.5 1667.2 C562.4 1667.2 562.4 1598.3 762.2 1598.3" fill="none" stroke="#111" stroke-width="3.8" opacity="0.5"/><path d="M362.5 1667.2 C562.4 1667.2 562.4 1598.3 762.2 1598.3" fill="none" stroke="#00d6a3" stroke-width="2.6"/><path d="M362.5 1681.4 C570.6 1681.4 570.6 1438.4 778.8 1438.4" fill="none" stroke="#111" stroke-width="2.5999999999999996" opacity="0.5"/><path d="M362.5 1681.4 C570.6 1681.4 570.6 1438.4 778.8 1438.4" fill="none" stroke="#a9a9a9" stroke-width="1.4" stroke-dasharray="4.5 1.2"/><path d="M362.5 1696.3 C570.6 1696.3 570.6 1452.4 778.8 1452.4" fill="none" stroke="#111" stroke-width="2.5999999999999996" opacity="0.5"/><path d="M362.5 1696.3 C570.6 1696.3 570.6 1452.4 778.8 1452.4" fill="none" stroke="#a9a9a9" stroke-width="1.4" stroke-dasharray="4.5 1.2"/><path d="M362.5 1710.4 C447.7 1710.4 447.7 1512.5 532.9 1512.5" fill="none" stroke="#111" stroke-width="2.5999999999999996" opacity="0.5"/><path d="M362.5 1710.4 C447.7 1710.4 447.7 1512.5 532.9 1512.5" fill="none" stroke="#a9a9a9" stroke-width="1.4" stroke-dasharray="4.5 1.2"/><path d="M756.6 1240.2 C868.5 1240.2 421.0 1526.4 532.9 1526.4" fill="none" stroke="#111" stroke-width="2.5999999999999996" opacity="0.5"/><path d="M756.6 1240.2 C868.5 1240.2 421.0 1526.4 532.9 1526.4" fill="none" stroke="#a9a9a9" stroke-width="1.4" stroke-dasharray="4.5 1.2"/><path d="M626.6 1462.3 C694.4 1462.3 694.4 1627.6 762.2 1627.6" fill="none" stroke="#111" stroke-width="2.5999999999999996" opacity="0.5"/><path d="M626.6 1462.3 C694.4 1462.3 694.4 1627.6 762.2 1627.6" fill="none" stroke="#a9a9a9" stroke-width="1.4" stroke-dasharray="4.5 1.2"/><path d="M362.5 1725.4 C1103.5 1725.4 1103.5 1696.4 1844.4 1696.4" fill="none" stroke="#111" stroke-width="3.5999999999999996" opacity="0.5"/><path d="M362.5 1725.4 C1103.5 1725.4 1103.5 1696.4 1844.4 1696.4" fill="none" stroke="#eb7582" stroke-width="2.4"/><path d="M362.5 1740.3 C562.4 1740.3 562.4 1642.5 762.2 1642.5" fill="none" stroke="#111" stroke-width="3.5999999999999996" opacity="0.5"/><path d="M362.5 1740.3 C562.4 1740.3 562.4 1642.5 762.2 1642.5" fill="none" stroke="#5f8f5c" stroke-width="2.4"/><path d="M362.5 1754.3 C452.4 1754.3 452.4 1286.3 542.4 1286.3" fill="none" stroke="#111" stroke-width="3.5999999999999996" opacity="0.5"/><path d="M362.5 1754.3 C452.4 1754.3 452.4 1286.3 542.4 1286.3" fill="none" stroke="#ed9e5c" stroke-width="2.4"/><path d="M362.5 1769.1 C630.5 1769.1 630.5 1666.3 898.6 1666.3" fill="none" stroke="#111" stroke-width="3.5999999999999996" opacity="0.5"/><path d="M362.5 1769.1 C630.5 1769.1 630.5 1666.3 898.6 1666.3" fill="none" stroke="#ed9e5c" stroke-width="2.4"/><path d="M636.5 1209.4 C649.5 1209.4 649.5 1272.3 662.4 1272.3" fill="none" stroke="#111" stroke-width="3.2" opacity="0.5"/><path d="M636.5 1209.4 C649.5 1209.4 649.5 1272.3 662.4 1272.3" fill="none" stroke="#6363c7" stroke-width="2.0"/><path d="M636.5 1253.4 C653.5 1253.4 653.5 1138.3 670.6 1138.3" fill="none" stroke="#111" stroke-width="3.8" opacity="0.5"/><path d="M636.5 1253.4 C653.5 1253.4 653.5 1138.3 670.6 1138.3" fill="none" stroke="#00d6a3" stroke-width="2.6"/><path d="M641.4 1345.5 C651.9 1345.5 651.9 1287.1 662.4 1287.1" fill="none" stroke="#111" stroke-width="2.5999999999999996" opacity="0.5"/><path d="M641.4 1345.5 C651.9 1345.5 651.9 1287.1 662.4 1287.1" fill="none" stroke="#6363c7" stroke-width="1.4"/><path d="M764.4 1091.4 C786.6 1091.4 786.6 1142.4 808.8 1142.4" fill="none" stroke="#111" stroke-width="2.5999999999999996" opacity="0.5"/><path d="M764.4 1091.4 C786.6 1091.4 786.6 1142.4 808.8 1142.4" fill="none" stroke="#a9a9a9" stroke-width="1.4" stroke-dasharray="4.5 1.2"/><path d="M902.6 1075.4 C922.5 1075.4 922.5 1256.3 942.4 1256.3" fill="none" stroke="#111" stroke-width="2.5999999999999996" opacity="0.5"/><path d="M902.6 1075.4 C922.5 1075.4 922.5 1256.3 942.4 1256.3" fill="none" stroke="#a9a9a9" stroke-width="1.4" stroke-dasharray="4.5 1.2"/><path d="M872.5 1403.5 C907.5 1403.5 907.5 1271.5 942.4 1271.5" fill="none" stroke="#111" stroke-width="2.5999999999999996" opacity="0.5"/><path d="M872.5 1403.5 C907.5 1403.5 907.5 1271.5 942.4 1271.5" fill="none" stroke="#a9a9a9" stroke-width="1.4" stroke-dasharray="4.5 1.2"/><path d="M876.4 1535.3 C1064.4 1535.3 1064.4 1509.5 1252.4 1509.5" fill="none" stroke="#111" stroke-width="3.8" opacity="0.5"/><path d="M876.4 1535.3 C1064.4 1535.3 1064.4 1509.5 1252.4 1509.5" fill="none" stroke="#00d6a3" stroke-width="2.6"/><path d="M992.7 1633.4 C1122.6 1633.4 1122.6 1539.3 1252.4 1539.3" fill="none" stroke="#111" stroke-width="3.8" opacity="0.5"/><path d="M992.7 1633.4 C1122.6 1633.4 1122.6 1539.3 1252.4 1539.3" fill="none" stroke="#00d6a3" stroke-width="2.6"/><path d="M1201.6 1611.4 C1303.7 1611.4 1303.7 1614.2 1405.7 1614.2" fill="none" stroke="#111" stroke-width="2.5999999999999996" opacity="0.5"/><path d="M1201.6 1611.4 C1303.7 1611.4 1303.7 1614.2 1405.7 1614.2" fill="none" stroke="#a9a9a9" stroke-width="1.4" stroke-dasharray="4.5 1.2"/><path d="M1389.7 1297.2 C1428.8 1297.2 1428.8 1332.1 1467.8 1332.1" fill="none" stroke="#111" stroke-width="3.2" opacity="0.5"/><path d="M1389.7 1297.2 C1428.8 1297.2 1428.8 1332.1 1467.8 1332.1" fill="none" stroke="#6363c7" stroke-width="2.0"/><path d="M1391.3 1394.2 C1429.5 1394.2 1429.5 1346.5 1467.8 1346.5" fill="none" stroke="#111" stroke-width="3.2" opacity="0.5"/><path d="M1391.3 1394.2 C1429.5 1394.2 1429.5 1346.5 1467.8 1346.5" fill="none" stroke="#6363c7" stroke-width="2.0"/><path d="M1346.2 1493.3 C1431.7 1493.3 1431.7 1525.0 1517.1 1525.0" fill="none" stroke="#111" stroke-width="3.8" opacity="0.5"/><path d="M1346.2 1493.3 C1431.7 1493.3 1431.7 1525.0 1517.1 1525.0" fill="none" stroke="#00d6a3" stroke-width="2.6"/><path d="M1499.4 1568.4 C1508.2 1568.4 1508.2 1554.1 1517.1 1554.1" fill="none" stroke="#111" stroke-width="2.8" opacity="0.5"/><path d="M1499.4 1568.4 C1508.2 1568.4 1508.2 1554.1 1517.1 1554.1" fill="none" stroke="#6363c7" stroke-width="1.6"/><path d="M1610.9 1525.0 C1663.3 1525.0 1663.3 1530.3 1715.7 1530.3" fill="none" stroke="#111" stroke-width="3.8" opacity="0.5"/><path d="M1610.9 1525.0 C1663.3 1525.0 1663.3 1530.3 1715.7 1530.3" fill="none" stroke="#00d6a3" stroke-width="2.6"/><path d="M1809.5 1530.3 C1827.0 1530.3 1827.0 1667.2 1844.4 1667.2" fill="none" stroke="#111" stroke-width="3.8" opacity="0.5"/><path d="M1809.5 1530.3 C1827.0 1530.3 1827.0 1667.2 1844.4 1667.2" fill="none" stroke="#00d6a3" stroke-width="2.6"/><path d="M1938.3 1667.2 C1962.0 1667.2 1962.0 1746.5 1985.8 1746.5" fill="none" stroke="#111" stroke-width="3.8" opacity="0.5"/><path d="M1938.3 1667.2 C1962.0 1667.2 1962.0 1746.5 1985.8 1746.5" fill="none" stroke="#00d6a3" stroke-width="2.6"/><path d="M2079.7 1746.5 C2102.6 1746.5 2102.6 1745.8 2125.6 1745.8" fill="none" stroke="#111" stroke-width="3.8" opacity="0.5"/><path d="M2079.7 1746.5 C2102.6 1746.5 2102.6 1745.8 2125.6 1745.8" fill="none" stroke="#00d6a3" stroke-width="2.6"/><path d="M362.5 1667.2 C538.0 1667.2 538.0 1781.3 713.6 1781.3" fill="none" stroke="#111" stroke-width="3.8" opacity="0.5"/><path d="M362.5 1667.2 C538.0 1667.2 538.0 1781.3 713.6 1781.3" fill="none" stroke="#00d6a3" stroke-width="2.6"/><path d="M1833.5 1769.0 C1909.7 1769.0 1909.7 1746.5 1985.8 1746.5" fill="none" stroke="#111" stroke-width="3.8" opacity="0.5"/><path d="M1833.5 1769.0 C1909.7 1769.0 1909.7 1746.5 1985.8 1746.5" fill="none" stroke="#00d6a3" stroke-width="2.6"/><path d="M713.6 1781.3 L1833.5 1769" fill="none" stroke="#00d6a3" stroke-width="2.6"/><circle cx="713.6" cy="1781.3" r="3.5" fill="#00d6a3"/><circle cx="1833.5" cy="1769" r="3.5" fill="#00d6a3"/><path d="M1266 1769 L1272 1774 L1266 1779" fill="none" stroke="#00d6a3" stroke-width="2"/><linearGradient id="g52624" gradientUnits="userSpaceOnUse" x1="1036.2" y1="1207.4" x2="1252.4" y2="1639.5"><stop offset="0" stop-color="#b0b0b0"/><stop offset="1" stop-color="#6363c7"/></linearGradient><path d="M1036.2 1207.4 C1144.3 1207.4 1144.3 1639.5 1252.4 1639.5" fill="none" stroke="#111" stroke-width="2.5999999999999996" opacity="0.5"/><path d="M1036.2 1207.4 C1144.3 1207.4 1144.3 1639.5 1252.4 1639.5" fill="none" stroke="url(#g52624)" stroke-width="1.4" stroke-dasharray="4.5 1.2"/><linearGradient id="g9536" gradientUnits="userSpaceOnUse" x1="1561.5" y1="1297.2" x2="1715.7" y2="1559.5"><stop offset="0" stop-color="#6363c7"/><stop offset="1" stop-color="#a663c7"/></linearGradient><path d="M1561.5 1297.2 C1638.6 1297.2 1638.6 1559.5 1715.7 1559.5" fill="none" stroke="#111" stroke-width="2.5999999999999996" opacity="0.5"/><path d="M1561.5 1297.2 C1638.6 1297.2 1638.6 1559.5 1715.7 1559.5" fill="none" stroke="url(#g9536)" stroke-width="1.4" stroke-dasharray="4.5 1.2"/><rect x="671.6" y="1054.7" width="93.8" height="139.4" rx="3" fill="#000" opacity="0.35"/><rect x="670.6" y="1052.7" width="93.8" height="139.4" rx="3" fill="#303030"/><path d="M670.6 1065.9 V1055.7 Q670.6 1052.7 673.6 1052.7 H761.4 Q764.4 1052.7 764.4 1055.7 V1065.9Z" fill="#1e7360"/><path d="M677.6 1057.7 L680.6 1060.7 L683.6 1057.7" fill="none" stroke="#d8d8d8" stroke-width="1"/><text x="690.1" y="1062.4" font-size="7.6" text-anchor="start" fill="#000" opacity="0.5">Geometry Proximity</text><text x="689.6" y="1061.6" font-size="7.6" text-anchor="start" fill="#e8e8e8">Geometry Proximity</text><text x="753.9" y="1079.7" font-size="7.6" text-anchor="end" fill="#000" opacity="0.5">Position</text><text x="753.4" y="1078.9" font-size="7.6" text-anchor="end" fill="#e4e4e4">Position</text><circle cx="764.4" cy="1076.2" r="3.2" fill="#6363c7" stroke="#1a1a1a" stroke-width="0.6"/><text x="753.9" y="1094.9" font-size="7.6" text-anchor="end" fill="#000" opacity="0.5">Distance</text><text x="753.4" y="1094.1" font-size="7.6" text-anchor="end" fill="#e4e4e4">Distance</text><circle cx="764.4" cy="1091.4" r="3.2" fill="#a1a1a1" stroke="#1a1a1a" stroke-width="0.6"/><text x="753.9" y="1108.9" font-size="7.6" text-anchor="end" fill="#000" opacity="0.5">Is Valid</text><text x="753.4" y="1108.1" font-size="7.6" text-anchor="end" fill="#e4e4e4">Is Valid</text><circle cx="764.4" cy="1105.4" r="3.2" fill="#cca6d6" stroke="#1a1a1a" stroke-width="0.6"/><rect x="677.6" y="1117.5" width="79.8" height="12" rx="2" fill="#282828" stroke="#333" stroke-width="0.6"/><text x="682.1" y="1127.0" font-size="7.6" text-anchor="start" fill="#000" opacity="0.5">Faces</text><text x="681.6" y="1126.2" font-size="7.6" text-anchor="start" fill="#e4e4e4">Faces</text><path d="M751.4 1122.0 L753.4 1124.3 L755.4 1122.0" fill="none" stroke="#ccc" stroke-width="0.8"/><text x="681.1" y="1141.8" font-size="7.6" text-anchor="start" fill="#000" opacity="0.5">Geometry</text><text x="680.6" y="1141.0" font-size="7.6" text-anchor="start" fill="#e4e4e4">Geometry</text><rect x="668.6" y="1133.8" width="4" height="9" rx="0.5" fill="#00d6a3"/><text x="681.1" y="1156.5" font-size="7.6" text-anchor="start" fill="#000" opacity="0.5">Group ID</text><text x="680.6" y="1155.7" font-size="7.6" text-anchor="start" fill="#e4e4e4">Group ID</text><path d="M670.6 1149.0 L674.6 1153.0 L670.6 1157.0 L666.6 1153.0Z" fill="#598c5c"/><text x="681.1" y="1171.8" font-size="7.6" text-anchor="start" fill="#000" opacity="0.5">Sample Position</text><text x="680.6" y="1171.0" font-size="7.6" text-anchor="start" fill="#e4e4e4">Sample Position</text><circle cx="670.6" cy="1168.3" r="3.2" fill="#6363c7" stroke="#1a1a1a" stroke-width="0.6"/><text x="681.1" y="1185.8" font-size="7.6" text-anchor="start" fill="#000" opacity="0.5">Sample Group ID</text><text x="680.6" y="1185.0" font-size="7.6" text-anchor="start" fill="#e4e4e4">Sample Group ID</text><circle cx="670.6" cy="1182.3" r="3.2" fill="#598c5c" stroke="#1a1a1a" stroke-width="0.6"/><rect x="809.8" y="1053.9" width="93.8" height="160.0" rx="3" fill="#000" opacity="0.35"/><rect x="808.8" y="1051.9" width="93.8" height="160.0" rx="3" fill="#303030"/><path d="M808.8 1065.1 V1054.9 Q808.8 1051.9 811.8 1051.9 H899.6 Q902.6 1051.9 902.6 1054.9 V1065.1Z" fill="#236184"/><path d="M815.8 1056.9 L818.8 1059.9 L821.8 1056.9" fill="none" stroke="#d8d8d8" stroke-width="1"/><text x="828.3" y="1061.6" font-size="7.6" text-anchor="start" fill="#000" opacity="0.5">Map Range</text><text x="827.8" y="1060.8" font-size="7.6" text-anchor="start" fill="#e8e8e8">Map Range</text><text x="892.1" y="1078.9" font-size="7.6" text-anchor="end" fill="#000" opacity="0.5">Result</text><text x="891.6" y="1078.1" font-size="7.6" text-anchor="end" fill="#e4e4e4">Result</text><circle cx="902.6" cy="1075.4" r="3.2" fill="#a1a1a1" stroke="#1a1a1a" stroke-width="0.6"/><rect x="815.8" y="1088.3" width="79.8" height="12" rx="2" fill="#282828" stroke="#333" stroke-width="0.6"/><text x="820.3" y="1097.8" font-size="7.6" text-anchor="start" fill="#000" opacity="0.5">-   Float</text><text x="819.8" y="1097.0" font-size="7.6" text-anchor="start" fill="#e4e4e4">-   Float</text><path d="M889.6 1092.8 L891.6 1095.1 L893.6 1092.8" fill="none" stroke="#ccc" stroke-width="0.8"/><rect x="815.8" y="1105.1" width="79.8" height="12" rx="2" fill="#282828" stroke="#333" stroke-width="0.6"/><text x="820.3" y="1114.6" font-size="7.6" text-anchor="start" fill="#000" opacity="0.5">Linear</text><text x="819.8" y="1113.8" font-size="7.6" text-anchor="start" fill="#e4e4e4">Linear</text><path d="M889.6 1109.6 L891.6 1111.9 L893.6 1109.6" fill="none" stroke="#ccc" stroke-width="0.8"/><rect x="816.8" y="1122.2" width="10" height="10" rx="2" fill="#282828"/><rect x="818.8" y="1124.2" width="6" height="6" fill="#4772b3"/><path d="M819.3 1127.2 L821.3 1129.2 L824.8 1124.2" fill="none" stroke="#fff" stroke-width="1.2"/><text x="831.3" y="1130.7" font-size="7.6" text-anchor="start" fill="#000" opacity="0.5">Clamp</text><text x="830.8" y="1129.9" font-size="7.6" text-anchor="start" fill="#e4e4e4">Clamp</text><text x="819.3" y="1145.9" font-size="7.6" text-anchor="start" fill="#000" opacity="0.5">Value</text><text x="818.8" y="1145.1" font-size="7.6" text-anchor="start" fill="#e4e4e4">Value</text><circle cx="808.8" cy="1142.4" r="3.2" fill="#a1a1a1" stroke="#1a1a1a" stroke-width="0.6"/><rect x="815.8" y="1151.2" width="79.8" height="12" rx="2" fill="#282828"/><rect x="817.8" y="1152.2" width="75.8" height="10" rx="1" fill="#464646"/><text x="822.3" y="1160.7" font-size="7.6" text-anchor="start" fill="#000" opacity="0.5">From Min</text><text x="821.8" y="1159.9" font-size="7.6" text-anchor="start" fill="#e4e4e4">From Min</text><text x="891.1" y="1160.7" font-size="7.6" text-anchor="end" fill="#000" opacity="0.5">3.400</text><text x="890.6" y="1159.9" font-size="7.6" text-anchor="end" fill="#e4e4e4">3.400</text><circle cx="808.8" cy="1157.2" r="3.2" fill="#a1a1a1" stroke="#1a1a1a" stroke-width="0.6"/><rect x="815.8" y="1165.6" width="79.8" height="12" rx="2" fill="#282828"/><rect x="817.8" y="1166.6" width="75.8" height="10" rx="1" fill="#464646"/><text x="822.3" y="1175.1" font-size="7.6" text-anchor="start" fill="#000" opacity="0.5">From Max</text><text x="821.8" y="1174.3" font-size="7.6" text-anchor="start" fill="#e4e4e4">From Max</text><text x="891.1" y="1175.1" font-size="7.6" text-anchor="end" fill="#000" opacity="0.5">0.000</text><text x="890.6" y="1174.3" font-size="7.6" text-anchor="end" fill="#e4e4e4">0.000</text><circle cx="808.8" cy="1171.6" r="3.2" fill="#a1a1a1" stroke="#1a1a1a" stroke-width="0.6"/><rect x="815.8" y="1180.4" width="79.8" height="12" rx="2" fill="#282828"/><rect x="817.8" y="1181.4" width="75.8" height="10" rx="1" fill="#464646"/><text x="822.3" y="1189.9" font-size="7.6" text-anchor="start" fill="#000" opacity="0.5">To Min</text><text x="821.8" y="1189.1" font-size="7.6" text-anchor="start" fill="#e4e4e4">To Min</text><text x="891.1" y="1189.9" font-size="7.6" text-anchor="end" fill="#000" opacity="0.5">0.000</text><text x="890.6" y="1189.1" font-size="7.6" text-anchor="end" fill="#e4e4e4">0.000</text><circle cx="808.8" cy="1186.4" r="3.2" fill="#a1a1a1" stroke="#1a1a1a" stroke-width="0.6"/><rect x="815.8" y="1195.2" width="79.8" height="12" rx="2" fill="#282828"/><rect x="817.8" y="1196.2" width="75.8" height="10" rx="1" fill="#464646"/><text x="822.3" y="1204.7" font-size="7.6" text-anchor="start" fill="#000" opacity="0.5">To Max</text><text x="821.8" y="1203.9" font-size="7.6" text-anchor="start" fill="#e4e4e4">To Max</text><text x="891.1" y="1204.7" font-size="7.6" text-anchor="end" fill="#000" opacity="0.5">1.000</text><text x="890.6" y="1203.9" font-size="7.6" text-anchor="end" fill="#e4e4e4">1.000</text><circle cx="808.8" cy="1201.2" r="3.2" fill="#a1a1a1" stroke="#1a1a1a" stroke-width="0.6"/><rect x="543.4" y="1172.8" width="94.1" height="139.3" rx="3" fill="#000" opacity="0.35"/><rect x="542.4" y="1170.8" width="94.1" height="139.3" rx="3" fill="#303030"/><path d="M542.4 1184.0 V1173.8 Q542.4 1170.8 545.4 1170.8 H633.5 Q636.5 1170.8 636.5 1173.8 V1184.0Z" fill="#86334c"/><path d="M549.4 1175.8 L552.4 1178.8 L555.4 1175.8" fill="none" stroke="#d8d8d8" stroke-width="1"/><text x="561.9" y="1180.5" font-size="7.6" text-anchor="start" fill="#000" opacity="0.5">Object Info</text><text x="561.4" y="1179.7" font-size="7.6" text-anchor="start" fill="#e8e8e8">Object Info</text><text x="626.0" y="1197.7" font-size="7.6" text-anchor="end" fill="#000" opacity="0.5">Transform</text><text x="625.5" y="1196.9" font-size="7.6" text-anchor="end" fill="#e4e4e4">Transform</text><rect x="634.7" y="1189.7" width="3.6" height="9" fill="#d43c8c"/><text x="626.0" y="1212.9" font-size="7.6" text-anchor="end" fill="#000" opacity="0.5">Location</text><text x="625.5" y="1212.1" font-size="7.6" text-anchor="end" fill="#e4e4e4">Location</text><rect x="634.7" y="1204.9" width="3.6" height="9" fill="#6363c7"/><text x="626.0" y="1226.9" font-size="7.6" text-anchor="end" fill="#000" opacity="0.5">Rotation</text><text x="625.5" y="1226.1" font-size="7.6" text-anchor="end" fill="#e4e4e4">Rotation</text><rect x="634.7" y="1218.9" width="3.6" height="9" fill="#a663c7"/><text x="626.0" y="1241.7" font-size="7.6" text-anchor="end" fill="#000" opacity="0.5">Scale</text><text x="625.5" y="1240.9" font-size="7.6" text-anchor="end" fill="#e4e4e4">Scale</text><rect x="634.7" y="1233.7" width="3.6" height="9" fill="#6363c7"/><text x="626.0" y="1256.9" font-size="7.6" text-anchor="end" fill="#000" opacity="0.5">Geometry</text><text x="625.5" y="1256.1" font-size="7.6" text-anchor="end" fill="#e4e4e4">Geometry</text><rect x="634.5" y="1248.9" width="4" height="9" rx="0.5" fill="#00d6a3"/><rect x="550.4" y="1265.0" width="78.1" height="13" rx="2" fill="#282828"/><rect x="552.4" y="1266.5" width="36.0" height="10" fill="#3f3f3f"/><rect x="590.4" y="1266.5" width="36.0" height="10" fill="#4772b3"/><text x="571.4" y="1275.0" font-size="7.6" text-anchor="middle" fill="#000" opacity="0.5">Original</text><text x="570.9" y="1274.2" font-size="7.6" text-anchor="middle" fill="#e4e4e4">Original</text><text x="609.5" y="1275.0" font-size="7.6" text-anchor="middle" fill="#000" opacity="0.5">Relative</text><text x="609.0" y="1274.2" font-size="7.6" text-anchor="middle" fill="#e4e4e4">Relative</text><text x="552.9" y="1289.8" font-size="7.6" text-anchor="start" fill="#000" opacity="0.5">Object</text><text x="552.4" y="1289.0" font-size="7.6" text-anchor="start" fill="#e4e4e4">Object</text><rect x="540.4" y="1281.8" width="4" height="9" rx="0.5" fill="#ed9e5c"/><rect x="550.4" y="1295.3" width="10" height="10" rx="2" fill="#282828"/><rect x="552.4" y="1297.3" width="6" height="6" fill="#3a3a3a"/><text x="564.9" y="1303.8" font-size="7.6" text-anchor="start" fill="#000" opacity="0.5">As Instance</text><text x="564.4" y="1303.0" font-size="7.6" text-anchor="start" fill="#e4e4e4">As Instance</text><rect x="540.6" y="1295.8" width="3.6" height="9" fill="#cca6d6"/><rect x="663.4" y="1218.8" width="94.2" height="82.2" rx="3" fill="#000" opacity="0.35"/><rect x="662.4" y="1216.8" width="94.2" height="82.2" rx="3" fill="#303030"/><path d="M662.4 1230.0 V1219.8 Q662.4 1216.8 665.4 1216.8 H753.6 Q756.6 1216.8 756.6 1219.8 V1230.0Z" fill="#3c3c84"/><path d="M669.4 1221.8 L672.4 1224.8 L675.4 1221.8" fill="none" stroke="#d8d8d8" stroke-width="1"/><text x="681.9" y="1226.5" font-size="7.6" text-anchor="start" fill="#000" opacity="0.5">Distance</text><text x="681.4" y="1225.7" font-size="7.6" text-anchor="start" fill="#e8e8e8">Distance</text><text x="746.1" y="1243.7" font-size="7.6" text-anchor="end" fill="#000" opacity="0.5">Value</text><text x="745.6" y="1242.9" font-size="7.6" text-anchor="end" fill="#e4e4e4">Value</text><circle cx="756.6" cy="1240.2" r="3.2" fill="#a1a1a1" stroke="#1a1a1a" stroke-width="0.6"/><rect x="669.4" y="1252.3" width="80.2" height="12" rx="2" fill="#282828" stroke="#333" stroke-width="0.6"/><text x="673.9" y="1261.8" font-size="7.6" text-anchor="start" fill="#000" opacity="0.5">Distance</text><text x="673.4" y="1261.0" font-size="7.6" text-anchor="start" fill="#e4e4e4">Distance</text><path d="M743.6 1256.8 L745.6 1259.1 L747.6 1256.8" fill="none" stroke="#ccc" stroke-width="0.8"/><text x="672.9" y="1275.8" font-size="7.6" text-anchor="start" fill="#000" opacity="0.5">Vector</text><text x="672.4" y="1275.0" font-size="7.6" text-anchor="start" fill="#e4e4e4">Vector</text><circle cx="662.4" cy="1272.3" r="3.2" fill="#6363c7" stroke="#1a1a1a" stroke-width="0.6"/><text x="672.9" y="1290.6" font-size="7.6" text-anchor="start" fill="#000" opacity="0.5">Vector</text><text x="672.4" y="1289.8" font-size="7.6" text-anchor="start" fill="#e4e4e4">Vector</text><circle cx="662.4" cy="1287.1" r="3.2" fill="#6363c7" stroke="#1a1a1a" stroke-width="0.6"/><rect x="548.3" y="1324.5" width="94.1" height="32.9" rx="3" fill="#000" opacity="0.35"/><rect x="547.3" y="1322.5" width="94.1" height="32.9" rx="3" fill="#303030"/><path d="M547.3 1335.7 V1325.5 Q547.3 1322.5 550.3 1322.5 H638.4 Q641.4 1322.5 641.4 1325.5 V1335.7Z" fill="#86334c"/><path d="M554.3 1327.5 L557.3 1330.5 L560.3 1327.5" fill="none" stroke="#d8d8d8" stroke-width="1"/><text x="566.8" y="1332.2" font-size="7.6" text-anchor="start" fill="#000" opacity="0.5">Position</text><text x="566.3" y="1331.4" font-size="7.6" text-anchor="start" fill="#e8e8e8">Position</text><text x="630.9" y="1349.0" font-size="7.6" text-anchor="end" fill="#000" opacity="0.5">Position</text><text x="630.4" y="1348.2" font-size="7.6" text-anchor="end" fill="#e4e4e4">Position</text><path d="M641.4 1341.5 L645.4 1345.5 L641.4 1349.5 L637.4 1345.5Z" fill="#6363c7"/><rect x="943.4" y="1185.9" width="93.8" height="98.7" rx="3" fill="#000" opacity="0.35"/><rect x="942.4" y="1183.9" width="93.8" height="98.7" rx="3" fill="#303030"/><path d="M942.4 1197.1 V1186.9 Q942.4 1183.9 945.4 1183.9 H1033.2 Q1036.2 1183.9 1036.2 1186.9 V1197.1Z" fill="#236184"/><path d="M949.4 1188.9 L952.4 1191.9 L955.4 1188.9" fill="none" stroke="#d8d8d8" stroke-width="1"/><text x="961.9" y="1193.6" font-size="7.6" text-anchor="start" fill="#000" opacity="0.5">Multiply</text><text x="961.4" y="1192.8" font-size="7.6" text-anchor="start" fill="#e8e8e8">Multiply</text><text x="1025.7" y="1210.9" font-size="7.6" text-anchor="end" fill="#000" opacity="0.5">Value</text><text x="1025.2" y="1210.1" font-size="7.6" text-anchor="end" fill="#e4e4e4">Value</text><circle cx="1036.2" cy="1207.4" r="3.2" fill="#a1a1a1" stroke="#1a1a1a" stroke-width="0.6"/><rect x="949.4" y="1219.4" width="79.8" height="12" rx="2" fill="#282828" stroke="#333" stroke-width="0.6"/><text x="953.9" y="1228.9" font-size="7.6" text-anchor="start" fill="#000" opacity="0.5">Multiply</text><text x="953.4" y="1228.1" font-size="7.6" text-anchor="start" fill="#e4e4e4">Multiply</text><path d="M1023.2 1223.9 L1025.2 1226.2 L1027.2 1223.9" fill="none" stroke="#ccc" stroke-width="0.8"/><rect x="950.4" y="1236.5" width="10" height="10" rx="2" fill="#282828"/><rect x="952.4" y="1238.5" width="6" height="6" fill="#3a3a3a"/><text x="964.9" y="1245.0" font-size="7.6" text-anchor="start" fill="#000" opacity="0.5">Clamp</text><text x="964.4" y="1244.2" font-size="7.6" text-anchor="start" fill="#e4e4e4">Clamp</text><text x="952.9" y="1259.8" font-size="7.6" text-anchor="start" fill="#000" opacity="0.5">Value</text><text x="952.4" y="1259.0" font-size="7.6" text-anchor="start" fill="#e4e4e4">Value</text><circle cx="942.4" cy="1256.3" r="3.2" fill="#a1a1a1" stroke="#1a1a1a" stroke-width="0.6"/><text x="952.9" y="1275.0" font-size="7.6" text-anchor="start" fill="#000" opacity="0.5">Value</text><text x="952.4" y="1274.2" font-size="7.6" text-anchor="start" fill="#e4e4e4">Value</text><circle cx="942.4" cy="1271.5" r="3.2" fill="#a1a1a1" stroke="#1a1a1a" stroke-width="0.6"/><rect x="779.8" y="1382.5" width="93.7" height="111.8" rx="3" fill="#000" opacity="0.35"/><rect x="778.8" y="1380.5" width="93.7" height="111.8" rx="3" fill="#303030"/><path d="M778.8 1393.7 V1383.5 Q778.8 1380.5 781.8 1380.5 H869.5 Q872.5 1380.5 872.5 1383.5 V1393.7Z" fill="#236184"/><path d="M785.8 1385.5 L788.8 1388.5 L791.8 1385.5" fill="none" stroke="#d8d8d8" stroke-width="1"/><text x="798.3" y="1390.2" font-size="7.6" text-anchor="start" fill="#000" opacity="0.5">Random Value</text><text x="797.8" y="1389.4" font-size="7.6" text-anchor="start" fill="#e8e8e8">Random Value</text><text x="862.0" y="1407.0" font-size="7.6" text-anchor="end" fill="#000" opacity="0.5">Value</text><text x="861.5" y="1406.2" font-size="7.6" text-anchor="end" fill="#e4e4e4">Value</text><circle cx="872.5" cy="1403.5" r="3.2" fill="#a1a1a1" stroke="#1a1a1a" stroke-width="0.6"/><rect x="785.8" y="1417.2" width="79.7" height="12" rx="2" fill="#282828" stroke="#333" stroke-width="0.6"/><text x="790.3" y="1426.7" font-size="7.6" text-anchor="start" fill="#000" opacity="0.5">Float</text><text x="789.8" y="1425.9" font-size="7.6" text-anchor="start" fill="#e4e4e4">Float</text><path d="M859.5 1421.7 L861.5 1424.0 L863.5 1421.7" fill="none" stroke="#ccc" stroke-width="0.8"/><text x="789.3" y="1441.9" font-size="7.6" text-anchor="start" fill="#000" opacity="0.5">Min</text><text x="788.8" y="1441.1" font-size="7.6" text-anchor="start" fill="#e4e4e4">Min</text><circle cx="778.8" cy="1438.4" r="3.2" fill="#a1a1a1" stroke="#1a1a1a" stroke-width="0.6"/><text x="789.3" y="1455.9" font-size="7.6" text-anchor="start" fill="#000" opacity="0.5">Max</text><text x="788.8" y="1455.1" font-size="7.6" text-anchor="start" fill="#e4e4e4">Max</text><circle cx="778.8" cy="1452.4" r="3.2" fill="#a1a1a1" stroke="#1a1a1a" stroke-width="0.6"/><text x="789.3" y="1471.1" font-size="7.6" text-anchor="start" fill="#000" opacity="0.5">ID</text><text x="788.8" y="1470.3" font-size="7.6" text-anchor="start" fill="#e4e4e4">ID</text><circle cx="778.8" cy="1467.6" r="3.2" fill="#598c5c" stroke="#1a1a1a" stroke-width="0.6"/><rect x="785.8" y="1476.4" width="79.7" height="12" rx="2" fill="#282828"/><rect x="787.8" y="1477.4" width="75.7" height="10" rx="1" fill="#464646"/><text x="792.3" y="1485.9" font-size="7.6" text-anchor="start" fill="#000" opacity="0.5">Seed</text><text x="791.8" y="1485.1" font-size="7.6" text-anchor="start" fill="#e4e4e4">Seed</text><text x="861.0" y="1485.9" font-size="7.6" text-anchor="end" fill="#000" opacity="0.5">0</text><text x="860.5" y="1485.1" font-size="7.6" text-anchor="end" fill="#e4e4e4">0</text><circle cx="778.8" cy="1482.4" r="3.2" fill="#598c5c" stroke="#1a1a1a" stroke-width="0.6"/><rect x="533.9" y="1441.7" width="93.7" height="98.7" rx="3" fill="#000" opacity="0.35"/><rect x="532.9" y="1439.7" width="93.7" height="98.7" rx="3" fill="#303030"/><path d="M532.9 1452.9 V1442.7 Q532.9 1439.7 535.9 1439.7 H623.6 Q626.6 1439.7 626.6 1442.7 V1452.9Z" fill="#236184"/><path d="M539.9 1444.7 L542.9 1447.7 L545.9 1444.7" fill="none" stroke="#d8d8d8" stroke-width="1"/><text x="552.4" y="1449.4" font-size="7.6" text-anchor="start" fill="#000" opacity="0.5">Multiply</text><text x="551.9" y="1448.6" font-size="7.6" text-anchor="start" fill="#e8e8e8">Multiply</text><text x="616.1" y="1465.8" font-size="7.6" text-anchor="end" fill="#000" opacity="0.5">Value</text><text x="615.6" y="1465.0" font-size="7.6" text-anchor="end" fill="#e4e4e4">Value</text><circle cx="626.6" cy="1462.3" r="3.2" fill="#a1a1a1" stroke="#1a1a1a" stroke-width="0.6"/><rect x="539.9" y="1474.4" width="79.7" height="12" rx="2" fill="#282828" stroke="#333" stroke-width="0.6"/><text x="544.4" y="1483.9" font-size="7.6" text-anchor="start" fill="#000" opacity="0.5">Multiply</text><text x="543.9" y="1483.1" font-size="7.6" text-anchor="start" fill="#e4e4e4">Multiply</text><path d="M613.6 1478.9 L615.6 1481.2 L617.6 1478.9" fill="none" stroke="#ccc" stroke-width="0.8"/><rect x="540.9" y="1492.2" width="10" height="10" rx="2" fill="#282828"/><rect x="542.9" y="1494.2" width="6" height="6" fill="#3a3a3a"/><text x="555.4" y="1500.7" font-size="7.6" text-anchor="start" fill="#000" opacity="0.5">Clamp</text><text x="554.9" y="1499.9" font-size="7.6" text-anchor="start" fill="#e4e4e4">Clamp</text><text x="543.4" y="1516.0" font-size="7.6" text-anchor="start" fill="#000" opacity="0.5">Value</text><text x="542.9" y="1515.2" font-size="7.6" text-anchor="start" fill="#e4e4e4">Value</text><circle cx="532.9" cy="1512.5" r="3.2" fill="#a1a1a1" stroke="#1a1a1a" stroke-width="0.6"/><text x="543.4" y="1529.9" font-size="7.6" text-anchor="start" fill="#000" opacity="0.5">Value</text><text x="542.9" y="1529.1" font-size="7.6" text-anchor="start" fill="#e4e4e4">Value</text><circle cx="532.9" cy="1526.4" r="3.2" fill="#a1a1a1" stroke="#1a1a1a" stroke-width="0.6"/><rect x="763.2" y="1514.5" width="114.2" height="139.8" rx="3" fill="#000" opacity="0.35"/><rect x="762.2" y="1512.5" width="114.2" height="139.8" rx="3" fill="#303030"/><path d="M762.2 1525.7 V1515.5 Q762.2 1512.5 765.2 1512.5 H873.4 Q876.4 1512.5 876.4 1515.5 V1525.7Z" fill="#1e7360"/><path d="M769.2 1517.5 L772.2 1520.5 L775.2 1517.5" fill="none" stroke="#d8d8d8" stroke-width="1"/><text x="781.7" y="1522.2" font-size="7.6" text-anchor="start" fill="#000" opacity="0.5">Distribute Points on Faces</text><text x="781.2" y="1521.4" font-size="7.6" text-anchor="start" fill="#e8e8e8">Distribute Points on Faces</text><text x="865.9" y="1538.8" font-size="7.6" text-anchor="end" fill="#000" opacity="0.5">Points</text><text x="865.4" y="1538.0" font-size="7.6" text-anchor="end" fill="#e4e4e4">Points</text><rect x="874.4" y="1530.8" width="4" height="9" rx="0.5" fill="#00d6a3"/><text x="865.9" y="1554.0" font-size="7.6" text-anchor="end" fill="#000" opacity="0.5">Normal</text><text x="865.4" y="1553.2" font-size="7.6" text-anchor="end" fill="#e4e4e4">Normal</text><path d="M876.4 1546.5 L880.4 1550.5 L876.4 1554.5 L872.4 1550.5Z" fill="#6363c7"/><text x="865.9" y="1568.6" font-size="7.6" text-anchor="end" fill="#000" opacity="0.5">Rotation</text><text x="865.4" y="1567.8" font-size="7.6" text-anchor="end" fill="#e4e4e4">Rotation</text><path d="M876.4 1561.1 L880.4 1565.1 L876.4 1569.1 L872.4 1565.1Z" fill="#a663c7"/><rect x="769.2" y="1577.4" width="100.2" height="12" rx="2" fill="#282828" stroke="#333" stroke-width="0.6"/><text x="773.7" y="1586.9" font-size="7.6" text-anchor="start" fill="#000" opacity="0.5">Random</text><text x="773.2" y="1586.1" font-size="7.6" text-anchor="start" fill="#e4e4e4">Random</text><path d="M863.4 1581.9 L865.4 1584.2 L867.4 1581.9" fill="none" stroke="#ccc" stroke-width="0.8"/><text x="772.7" y="1601.8" font-size="7.6" text-anchor="start" fill="#000" opacity="0.5">Mesh</text><text x="772.2" y="1601.0" font-size="7.6" text-anchor="start" fill="#e4e4e4">Mesh</text><rect x="760.2" y="1593.8" width="4" height="9" rx="0.5" fill="#00d6a3"/><text x="772.7" y="1616.0" font-size="7.6" text-anchor="start" fill="#000" opacity="0.5">Selection</text><text x="772.2" y="1615.2" font-size="7.6" text-anchor="start" fill="#e4e4e4">Selection</text><path d="M762.2 1608.5 L766.2 1612.5 L762.2 1616.5 L758.2 1612.5Z" fill="#cca6d6"/><text x="772.7" y="1631.1" font-size="7.6" text-anchor="start" fill="#000" opacity="0.5">Density</text><text x="772.2" y="1630.3" font-size="7.6" text-anchor="start" fill="#e4e4e4">Density</text><path d="M762.2 1623.6 L766.2 1627.6 L762.2 1631.6 L758.2 1627.6Z" fill="#a1a1a1"/><text x="772.7" y="1646.0" font-size="7.6" text-anchor="start" fill="#000" opacity="0.5">Seed</text><text x="772.2" y="1645.2" font-size="7.6" text-anchor="start" fill="#e4e4e4">Seed</text><rect x="760.2" y="1638.0" width="4" height="9" rx="0.5" fill="#598c5c"/><rect x="899.6" y="1553.1" width="94.1" height="139.1" rx="3" fill="#000" opacity="0.35"/><rect x="898.6" y="1551.1" width="94.1" height="139.1" rx="3" fill="#303030"/><path d="M898.6 1564.3 V1554.1 Q898.6 1551.1 901.6 1551.1 H989.7 Q992.7 1551.1 992.7 1554.1 V1564.3Z" fill="#86334c"/><path d="M905.6 1556.1 L908.6 1559.1 L911.6 1556.1" fill="none" stroke="#d8d8d8" stroke-width="1"/><text x="918.1" y="1560.8" font-size="7.6" text-anchor="start" fill="#000" opacity="0.5">Object Info</text><text x="917.6" y="1560.0" font-size="7.6" text-anchor="start" fill="#e8e8e8">Object Info</text><text x="982.2" y="1578.0" font-size="7.6" text-anchor="end" fill="#000" opacity="0.5">Transform</text><text x="981.7" y="1577.2" font-size="7.6" text-anchor="end" fill="#e4e4e4">Transform</text><rect x="990.9" y="1570.0" width="3.6" height="9" fill="#d43c8c"/><text x="982.2" y="1592.9" font-size="7.6" text-anchor="end" fill="#000" opacity="0.5">Location</text><text x="981.7" y="1592.1" font-size="7.6" text-anchor="end" fill="#e4e4e4">Location</text><rect x="990.9" y="1584.9" width="3.6" height="9" fill="#6363c7"/><text x="982.2" y="1607.8" font-size="7.6" text-anchor="end" fill="#000" opacity="0.5">Rotation</text><text x="981.7" y="1607.0" font-size="7.6" text-anchor="end" fill="#e4e4e4">Rotation</text><rect x="990.9" y="1599.8" width="3.6" height="9" fill="#a663c7"/><text x="982.2" y="1622.8" font-size="7.6" text-anchor="end" fill="#000" opacity="0.5">Scale</text><text x="981.7" y="1622.0" font-size="7.6" text-anchor="end" fill="#e4e4e4">Scale</text><rect x="990.9" y="1614.8" width="3.6" height="9" fill="#6363c7"/><text x="982.2" y="1636.9" font-size="7.6" text-anchor="end" fill="#000" opacity="0.5">Geometry</text><text x="981.7" y="1636.1" font-size="7.6" text-anchor="end" fill="#e4e4e4">Geometry</text><rect x="990.7" y="1628.9" width="4" height="9" rx="0.5" fill="#00d6a3"/><rect x="906.6" y="1644.9" width="78.1" height="13" rx="2" fill="#282828"/><rect x="908.6" y="1646.4" width="36.0" height="10" fill="#4772b3"/><rect x="946.6" y="1646.4" width="36.0" height="10" fill="#3f3f3f"/><text x="927.6" y="1654.9" font-size="7.6" text-anchor="middle" fill="#000" opacity="0.5">Original</text><text x="927.1" y="1654.1" font-size="7.6" text-anchor="middle" fill="#e4e4e4">Original</text><text x="965.7" y="1654.9" font-size="7.6" text-anchor="middle" fill="#000" opacity="0.5">Relative</text><text x="965.2" y="1654.1" font-size="7.6" text-anchor="middle" fill="#e4e4e4">Relative</text><text x="909.1" y="1669.8" font-size="7.6" text-anchor="start" fill="#000" opacity="0.5">Object</text><text x="908.6" y="1669.0" font-size="7.6" text-anchor="start" fill="#e4e4e4">Object</text><rect x="896.6" y="1661.8" width="4" height="9" rx="0.5" fill="#ed9e5c"/><rect x="906.6" y="1676.3" width="10" height="10" rx="2" fill="#282828"/><rect x="908.6" y="1678.3" width="6" height="6" fill="#3a3a3a"/><text x="921.1" y="1684.8" font-size="7.6" text-anchor="start" fill="#000" opacity="0.5">As Instance</text><text x="920.6" y="1684.0" font-size="7.6" text-anchor="start" fill="#e4e4e4">As Instance</text><rect x="896.8" y="1676.8" width="3.6" height="9" fill="#cca6d6"/><rect x="1108.6" y="1590.3" width="94.0" height="110.9" rx="3" fill="#000" opacity="0.35"/><rect x="1107.6" y="1588.3" width="94.0" height="110.9" rx="3" fill="#303030"/><path d="M1107.6 1601.5 V1591.3 Q1107.6 1588.3 1110.6 1588.3 H1198.6 Q1201.6 1588.3 1201.6 1591.3 V1601.5Z" fill="#236184"/><path d="M1114.6 1593.3 L1117.6 1596.3 L1120.6 1593.3" fill="none" stroke="#d8d8d8" stroke-width="1"/><text x="1127.1" y="1598.0" font-size="7.6" text-anchor="start" fill="#000" opacity="0.5">Random Value</text><text x="1126.6" y="1597.2" font-size="7.6" text-anchor="start" fill="#e8e8e8">Random Value</text><text x="1191.1" y="1614.9" font-size="7.6" text-anchor="end" fill="#000" opacity="0.5">Value</text><text x="1190.6" y="1614.1" font-size="7.6" text-anchor="end" fill="#e4e4e4">Value</text><circle cx="1201.6" cy="1611.4" r="3.2" fill="#a1a1a1" stroke="#1a1a1a" stroke-width="0.6"/><rect x="1114.6" y="1625.3" width="80.0" height="12" rx="2" fill="#282828" stroke="#333" stroke-width="0.6"/><text x="1119.1" y="1634.8" font-size="7.6" text-anchor="start" fill="#000" opacity="0.5">Float</text><text x="1118.6" y="1634.0" font-size="7.6" text-anchor="start" fill="#e4e4e4">Float</text><path d="M1188.6 1629.8 L1190.6 1632.1 L1192.6 1629.8" fill="none" stroke="#ccc" stroke-width="0.8"/><rect x="1114.6" y="1640.2" width="80.0" height="12" rx="2" fill="#282828"/><rect x="1116.6" y="1641.2" width="76.0" height="10" rx="1" fill="#464646"/><text x="1121.1" y="1649.7" font-size="7.6" text-anchor="start" fill="#000" opacity="0.5">Min</text><text x="1120.6" y="1648.9" font-size="7.6" text-anchor="start" fill="#e4e4e4">Min</text><text x="1190.1" y="1649.7" font-size="7.6" text-anchor="end" fill="#000" opacity="0.5">0.000</text><text x="1189.6" y="1648.9" font-size="7.6" text-anchor="end" fill="#e4e4e4">0.000</text><circle cx="1107.6" cy="1646.2" r="3.2" fill="#a1a1a1" stroke="#1a1a1a" stroke-width="0.6"/><rect x="1114.6" y="1654.3" width="80.0" height="12" rx="2" fill="#282828"/><rect x="1116.6" y="1655.3" width="76.0" height="10" rx="1" fill="#464646"/><text x="1121.1" y="1663.8" font-size="7.6" text-anchor="start" fill="#000" opacity="0.5">Max</text><text x="1120.6" y="1663.0" font-size="7.6" text-anchor="start" fill="#e4e4e4">Max</text><text x="1190.1" y="1663.8" font-size="7.6" text-anchor="end" fill="#000" opacity="0.5">0.200</text><text x="1189.6" y="1663.0" font-size="7.6" text-anchor="end" fill="#e4e4e4">0.200</text><circle cx="1107.6" cy="1660.3" r="3.2" fill="#a1a1a1" stroke="#1a1a1a" stroke-width="0.6"/><text x="1118.1" y="1678.8" font-size="7.6" text-anchor="start" fill="#000" opacity="0.5">ID</text><text x="1117.6" y="1678.0" font-size="7.6" text-anchor="start" fill="#e4e4e4">ID</text><circle cx="1107.6" cy="1675.3" r="3.2" fill="#598c5c" stroke="#1a1a1a" stroke-width="0.6"/><rect x="1114.6" y="1683.4" width="80.0" height="12" rx="2" fill="#282828"/><rect x="1116.6" y="1684.4" width="76.0" height="10" rx="1" fill="#464646"/><text x="1121.1" y="1692.9" font-size="7.6" text-anchor="start" fill="#000" opacity="0.5">Seed</text><text x="1120.6" y="1692.1" font-size="7.6" text-anchor="start" fill="#e4e4e4">Seed</text><text x="1190.1" y="1692.9" font-size="7.6" text-anchor="end" fill="#000" opacity="0.5">0</text><text x="1189.6" y="1692.1" font-size="7.6" text-anchor="end" fill="#e4e4e4">0</text><circle cx="1107.6" cy="1689.4" r="3.2" fill="#598c5c" stroke="#1a1a1a" stroke-width="0.6"/><rect x="1296.9" y="1276.5" width="93.8" height="78.5" rx="3" fill="#000" opacity="0.35"/><rect x="1295.9" y="1274.5" width="93.8" height="78.5" rx="3" fill="#303030"/><path d="M1295.9 1287.7 V1277.5 Q1295.9 1274.5 1298.9 1274.5 H1386.7 Q1389.7 1274.5 1389.7 1277.5 V1287.7Z" fill="#236184"/><path d="M1302.9 1279.5 L1305.9 1282.5 L1308.9 1279.5" fill="none" stroke="#d8d8d8" stroke-width="1"/><text x="1315.4" y="1284.2" font-size="7.6" text-anchor="start" fill="#000" opacity="0.5">Combine XYZ</text><text x="1314.9" y="1283.4" font-size="7.6" text-anchor="start" fill="#e8e8e8">Combine XYZ</text><text x="1379.2" y="1300.7" font-size="7.6" text-anchor="end" fill="#000" opacity="0.5">Vector</text><text x="1378.7" y="1299.9" font-size="7.6" text-anchor="end" fill="#e4e4e4">Vector</text><circle cx="1389.7" cy="1297.2" r="3.2" fill="#6363c7" stroke="#1a1a1a" stroke-width="0.6"/><rect x="1302.9" y="1308.0" width="79.8" height="12" rx="2" fill="#282828"/><rect x="1304.9" y="1309.0" width="75.8" height="10" rx="1" fill="#464646"/><text x="1309.4" y="1317.5" font-size="7.6" text-anchor="start" fill="#000" opacity="0.5">X</text><text x="1308.9" y="1316.7" font-size="7.6" text-anchor="start" fill="#e4e4e4">X</text><text x="1378.2" y="1317.5" font-size="7.6" text-anchor="end" fill="#000" opacity="0.5">0.000</text><text x="1377.7" y="1316.7" font-size="7.6" text-anchor="end" fill="#e4e4e4">0.000</text><circle cx="1295.9" cy="1314.0" r="3.2" fill="#a1a1a1" stroke="#1a1a1a" stroke-width="0.6"/><rect x="1302.9" y="1322.8" width="79.8" height="12" rx="2" fill="#282828"/><rect x="1304.9" y="1323.8" width="75.8" height="10" rx="1" fill="#464646"/><text x="1309.4" y="1332.3" font-size="7.6" text-anchor="start" fill="#000" opacity="0.5">Y</text><text x="1308.9" y="1331.5" font-size="7.6" text-anchor="start" fill="#e4e4e4">Y</text><text x="1378.2" y="1332.3" font-size="7.6" text-anchor="end" fill="#000" opacity="0.5">0.000</text><text x="1377.7" y="1331.5" font-size="7.6" text-anchor="end" fill="#e4e4e4">0.000</text><circle cx="1295.9" cy="1328.8" r="3.2" fill="#a1a1a1" stroke="#1a1a1a" stroke-width="0.6"/><rect x="1302.9" y="1337.2" width="79.8" height="12" rx="2" fill="#282828"/><rect x="1304.9" y="1338.2" width="75.8" height="10" rx="1" fill="#464646"/><text x="1309.4" y="1346.7" font-size="7.6" text-anchor="start" fill="#000" opacity="0.5">Z</text><text x="1308.9" y="1345.9" font-size="7.6" text-anchor="start" fill="#e4e4e4">Z</text><text x="1378.2" y="1346.7" font-size="7.6" text-anchor="end" fill="#000" opacity="0.5">0.000</text><text x="1377.7" y="1345.9" font-size="7.6" text-anchor="end" fill="#e4e4e4">0.000</text><circle cx="1295.9" cy="1343.2" r="3.2" fill="#a1a1a1" stroke="#1a1a1a" stroke-width="0.6"/><rect x="1298.5" y="1372.8" width="93.8" height="78.9" rx="3" fill="#000" opacity="0.35"/><rect x="1297.5" y="1370.8" width="93.8" height="78.9" rx="3" fill="#303030"/><path d="M1297.5 1384.0 V1373.8 Q1297.5 1370.8 1300.5 1370.8 H1388.3 Q1391.3 1370.8 1391.3 1373.8 V1384.0Z" fill="#236184"/><path d="M1304.5 1375.8 L1307.5 1378.8 L1310.5 1375.8" fill="none" stroke="#d8d8d8" stroke-width="1"/><text x="1317.0" y="1380.5" font-size="7.6" text-anchor="start" fill="#000" opacity="0.5">Combine XYZ</text><text x="1316.5" y="1379.7" font-size="7.6" text-anchor="start" fill="#e8e8e8">Combine XYZ</text><text x="1380.8" y="1397.7" font-size="7.6" text-anchor="end" fill="#000" opacity="0.5">Vector</text><text x="1380.3" y="1396.9" font-size="7.6" text-anchor="end" fill="#e4e4e4">Vector</text><circle cx="1391.3" cy="1394.2" r="3.2" fill="#6363c7" stroke="#1a1a1a" stroke-width="0.6"/><rect x="1304.5" y="1404.2" width="79.8" height="12" rx="2" fill="#282828"/><rect x="1306.5" y="1405.2" width="75.8" height="10" rx="1" fill="#464646"/><text x="1311.0" y="1413.7" font-size="7.6" text-anchor="start" fill="#000" opacity="0.5">X</text><text x="1310.5" y="1412.9" font-size="7.6" text-anchor="start" fill="#e4e4e4">X</text><text x="1379.8" y="1413.7" font-size="7.6" text-anchor="end" fill="#000" opacity="0.5">0.000</text><text x="1379.3" y="1412.9" font-size="7.6" text-anchor="end" fill="#e4e4e4">0.000</text><circle cx="1297.5" cy="1410.2" r="3.2" fill="#a1a1a1" stroke="#1a1a1a" stroke-width="0.6"/><rect x="1304.5" y="1419.4" width="79.8" height="12" rx="2" fill="#282828"/><rect x="1306.5" y="1420.4" width="75.8" height="10" rx="1" fill="#464646"/><text x="1311.0" y="1428.9" font-size="7.6" text-anchor="start" fill="#000" opacity="0.5">Y</text><text x="1310.5" y="1428.1" font-size="7.6" text-anchor="start" fill="#e4e4e4">Y</text><text x="1379.8" y="1428.9" font-size="7.6" text-anchor="end" fill="#000" opacity="0.5">0.000</text><text x="1379.3" y="1428.1" font-size="7.6" text-anchor="end" fill="#e4e4e4">0.000</text><circle cx="1297.5" cy="1425.4" r="3.2" fill="#a1a1a1" stroke="#1a1a1a" stroke-width="0.6"/><rect x="1304.5" y="1434.2" width="79.8" height="12" rx="2" fill="#282828"/><rect x="1306.5" y="1435.2" width="75.8" height="10" rx="1" fill="#464646"/><text x="1311.0" y="1443.7" font-size="7.6" text-anchor="start" fill="#000" opacity="0.5">Z</text><text x="1310.5" y="1442.9" font-size="7.6" text-anchor="start" fill="#e4e4e4">Z</text><text x="1379.8" y="1443.7" font-size="7.6" text-anchor="end" fill="#000" opacity="0.5">10.000</text><text x="1379.3" y="1442.9" font-size="7.6" text-anchor="end" fill="#e4e4e4">10.000</text><circle cx="1297.5" cy="1440.2" r="3.2" fill="#a1a1a1" stroke="#1a1a1a" stroke-width="0.6"/><rect x="1468.8" y="1276.5" width="93.7" height="111.5" rx="3" fill="#000" opacity="0.35"/><rect x="1467.8" y="1274.5" width="93.7" height="111.5" rx="3" fill="#303030"/><path d="M1467.8 1287.7 V1277.5 Q1467.8 1274.5 1470.8 1274.5 H1558.5 Q1561.5 1274.5 1561.5 1277.5 V1287.7Z" fill="#236184"/><path d="M1474.8 1279.5 L1477.8 1282.5 L1480.8 1279.5" fill="none" stroke="#d8d8d8" stroke-width="1"/><text x="1487.3" y="1284.2" font-size="7.6" text-anchor="start" fill="#000" opacity="0.5">Random Value</text><text x="1486.8" y="1283.4" font-size="7.6" text-anchor="start" fill="#e8e8e8">Random Value</text><text x="1551.0" y="1300.7" font-size="7.6" text-anchor="end" fill="#000" opacity="0.5">Value</text><text x="1550.5" y="1299.9" font-size="7.6" text-anchor="end" fill="#e4e4e4">Value</text><circle cx="1561.5" cy="1297.2" r="3.2" fill="#6363c7" stroke="#1a1a1a" stroke-width="0.6"/><rect x="1474.8" y="1310.9" width="79.7" height="12" rx="2" fill="#282828" stroke="#333" stroke-width="0.6"/><text x="1479.3" y="1320.4" font-size="7.6" text-anchor="start" fill="#000" opacity="0.5">Vector</text><text x="1478.8" y="1319.6" font-size="7.6" text-anchor="start" fill="#e4e4e4">Vector</text><path d="M1548.5 1315.4 L1550.5 1317.7 L1552.5 1315.4" fill="none" stroke="#ccc" stroke-width="0.8"/><text x="1478.3" y="1335.6" font-size="7.6" text-anchor="start" fill="#000" opacity="0.5">Min</text><text x="1477.8" y="1334.8" font-size="7.6" text-anchor="start" fill="#e4e4e4">Min</text><circle cx="1467.8" cy="1332.1" r="3.2" fill="#6363c7" stroke="#1a1a1a" stroke-width="0.6"/><text x="1478.3" y="1350.0" font-size="7.6" text-anchor="start" fill="#000" opacity="0.5">Max</text><text x="1477.8" y="1349.2" font-size="7.6" text-anchor="start" fill="#e4e4e4">Max</text><circle cx="1467.8" cy="1346.5" r="3.2" fill="#6363c7" stroke="#1a1a1a" stroke-width="0.6"/><text x="1478.3" y="1364.8" font-size="7.6" text-anchor="start" fill="#000" opacity="0.5">ID</text><text x="1477.8" y="1364.0" font-size="7.6" text-anchor="start" fill="#e4e4e4">ID</text><circle cx="1467.8" cy="1361.3" r="3.2" fill="#598c5c" stroke="#1a1a1a" stroke-width="0.6"/><rect x="1474.8" y="1370.1" width="79.7" height="12" rx="2" fill="#282828"/><rect x="1476.8" y="1371.1" width="75.7" height="10" rx="1" fill="#464646"/><text x="1481.3" y="1379.6" font-size="7.6" text-anchor="start" fill="#000" opacity="0.5">Seed</text><text x="1480.8" y="1378.8" font-size="7.6" text-anchor="start" fill="#e4e4e4">Seed</text><text x="1550.0" y="1379.6" font-size="7.6" text-anchor="end" fill="#000" opacity="0.5">0</text><text x="1549.5" y="1378.8" font-size="7.6" text-anchor="end" fill="#e4e4e4">0</text><circle cx="1467.8" cy="1376.1" r="3.2" fill="#598c5c" stroke="#1a1a1a" stroke-width="0.6"/><rect x="1253.4" y="1472.0" width="93.8" height="179.0" rx="3" fill="#000" opacity="0.35"/><rect x="1252.4" y="1470.0" width="93.8" height="179.0" rx="3" fill="#303030"/><path d="M1252.4 1483.2 V1473.0 Q1252.4 1470.0 1255.4 1470.0 H1343.2 Q1346.2 1470.0 1346.2 1473.0 V1483.2Z" fill="#1e7360"/><path d="M1259.4 1475.0 L1262.4 1478.0 L1265.4 1475.0" fill="none" stroke="#d8d8d8" stroke-width="1"/><text x="1271.9" y="1479.7" font-size="7.6" text-anchor="start" fill="#000" opacity="0.5">Instance on Points</text><text x="1271.4" y="1478.9" font-size="7.6" text-anchor="start" fill="#e8e8e8">Instance on Points</text><text x="1335.7" y="1496.8" font-size="7.6" text-anchor="end" fill="#000" opacity="0.5">Instances</text><text x="1335.2" y="1496.0" font-size="7.6" text-anchor="end" fill="#e4e4e4">Instances</text><rect x="1344.2" y="1488.8" width="4" height="9" rx="0.5" fill="#00d6a3"/><text x="1262.9" y="1513.0" font-size="7.6" text-anchor="start" fill="#000" opacity="0.5">Points</text><text x="1262.4" y="1512.2" font-size="7.6" text-anchor="start" fill="#e4e4e4">Points</text><rect x="1250.4" y="1505.0" width="4" height="9" rx="0.5" fill="#00d6a3"/><text x="1262.9" y="1527.9" font-size="7.6" text-anchor="start" fill="#000" opacity="0.5">Selection</text><text x="1262.4" y="1527.1" font-size="7.6" text-anchor="start" fill="#e4e4e4">Selection</text><path d="M1252.4 1520.4 L1256.4 1524.4 L1252.4 1528.4 L1248.4 1524.4Z" fill="#cca6d6"/><text x="1262.9" y="1542.8" font-size="7.6" text-anchor="start" fill="#000" opacity="0.5">Instance</text><text x="1262.4" y="1542.0" font-size="7.6" text-anchor="start" fill="#e4e4e4">Instance</text><rect x="1250.4" y="1534.8" width="4" height="9" rx="0.5" fill="#00d6a3"/><rect x="1260.4" y="1549.3" width="10" height="10" rx="2" fill="#282828"/><rect x="1262.4" y="1551.3" width="6" height="6" fill="#3a3a3a"/><text x="1274.9" y="1557.8" font-size="7.6" text-anchor="start" fill="#000" opacity="0.5">Pick Instance</text><text x="1274.4" y="1557.0" font-size="7.6" text-anchor="start" fill="#e4e4e4">Pick Instance</text><path d="M1252.4 1550.3 L1256.4 1554.3 L1252.4 1558.3 L1248.4 1554.3Z" fill="#cca6d6"/><text x="1262.9" y="1571.9" font-size="7.6" text-anchor="start" fill="#000" opacity="0.5">Instance Index</text><text x="1262.4" y="1571.1" font-size="7.6" text-anchor="start" fill="#e4e4e4">Instance Index</text><path d="M1252.4 1564.4 L1256.4 1568.4 L1252.4 1572.4 L1248.4 1568.4Z" fill="#598c5c"/><text x="1262.9" y="1586.9" font-size="7.6" text-anchor="start" fill="#000" opacity="0.5">Rotation</text><text x="1262.4" y="1586.1" font-size="7.6" text-anchor="start" fill="#e4e4e4">Rotation</text><path d="M1252.4 1579.4 L1256.4 1583.4 L1252.4 1587.4 L1248.4 1583.4Z" fill="#a663c7"/><rect x="1259.4" y="1591.8" width="79.8" height="38.0" rx="2" fill="#282828"/><rect x="1261.4" y="1593.3" width="75.8" height="10" rx="1" fill="#3f3f3f"/><text x="1265.9" y="1601.8" font-size="7.6" text-anchor="start" fill="#000" opacity="0.5">X</text><text x="1265.4" y="1601.0" font-size="7.6" text-anchor="start" fill="#e4e4e4">X</text><text x="1334.7" y="1601.8" font-size="7.6" text-anchor="end" fill="#000" opacity="0.5">0°</text><text x="1334.2" y="1601.0" font-size="7.6" text-anchor="end" fill="#e4e4e4">0°</text><rect x="1261.4" y="1605.7" width="75.8" height="10" rx="1" fill="#3f3f3f"/><text x="1265.9" y="1614.2" font-size="7.6" text-anchor="start" fill="#000" opacity="0.5">Y</text><text x="1265.4" y="1613.4" font-size="7.6" text-anchor="start" fill="#e4e4e4">Y</text><text x="1334.7" y="1614.2" font-size="7.6" text-anchor="end" fill="#000" opacity="0.5">0°</text><text x="1334.2" y="1613.4" font-size="7.6" text-anchor="end" fill="#e4e4e4">0°</text><rect x="1261.4" y="1618.3" width="75.8" height="10" rx="1" fill="#3f3f3f"/><text x="1265.9" y="1626.8" font-size="7.6" text-anchor="start" fill="#000" opacity="0.5">Z</text><text x="1265.4" y="1626.0" font-size="7.6" text-anchor="start" fill="#e4e4e4">Z</text><text x="1334.7" y="1626.8" font-size="7.6" text-anchor="end" fill="#000" opacity="0.5">0°</text><text x="1334.2" y="1626.0" font-size="7.6" text-anchor="end" fill="#e4e4e4">0°</text><text x="1262.9" y="1643.0" font-size="7.6" text-anchor="start" fill="#000" opacity="0.5">Scale</text><text x="1262.4" y="1642.2" font-size="7.6" text-anchor="start" fill="#e4e4e4">Scale</text><path d="M1252.4 1635.5 L1256.4 1639.5 L1252.4 1643.5 L1248.4 1639.5Z" fill="#6363c7"/><rect x="1406.7" y="1547.1" width="93.8" height="78.1" rx="3" fill="#000" opacity="0.35"/><rect x="1405.7" y="1545.1" width="93.8" height="78.1" rx="3" fill="#303030"/><path d="M1405.7 1558.3 V1548.1 Q1405.7 1545.1 1408.7 1545.1 H1496.5 Q1499.5 1545.1 1499.5 1548.1 V1558.3Z" fill="#236184"/><path d="M1412.7 1550.1 L1415.7 1553.1 L1418.7 1550.1" fill="none" stroke="#d8d8d8" stroke-width="1"/><text x="1425.2" y="1554.8" font-size="7.6" text-anchor="start" fill="#000" opacity="0.5">Combine XYZ</text><text x="1424.7" y="1554.0" font-size="7.6" text-anchor="start" fill="#e8e8e8">Combine XYZ</text><text x="1489.0" y="1571.9" font-size="7.6" text-anchor="end" fill="#000" opacity="0.5">Vector</text><text x="1488.5" y="1571.1" font-size="7.6" text-anchor="end" fill="#e4e4e4">Vector</text><circle cx="1499.5" cy="1568.4" r="3.2" fill="#6363c7" stroke="#1a1a1a" stroke-width="0.6"/><rect x="1412.7" y="1578.4" width="79.8" height="12" rx="2" fill="#282828"/><rect x="1414.7" y="1579.4" width="75.8" height="10" rx="1" fill="#464646"/><text x="1419.2" y="1587.9" font-size="7.6" text-anchor="start" fill="#000" opacity="0.5">X</text><text x="1418.7" y="1587.1" font-size="7.6" text-anchor="start" fill="#e4e4e4">X</text><text x="1488.0" y="1587.9" font-size="7.6" text-anchor="end" fill="#000" opacity="0.5">0.000</text><text x="1487.5" y="1587.1" font-size="7.6" text-anchor="end" fill="#e4e4e4">0.000</text><circle cx="1405.7" cy="1584.4" r="3.2" fill="#a1a1a1" stroke="#1a1a1a" stroke-width="0.6"/><rect x="1412.7" y="1593.3" width="79.8" height="12" rx="2" fill="#282828"/><rect x="1414.7" y="1594.3" width="75.8" height="10" rx="1" fill="#464646"/><text x="1419.2" y="1602.8" font-size="7.6" text-anchor="start" fill="#000" opacity="0.5">Y</text><text x="1418.7" y="1602.0" font-size="7.6" text-anchor="start" fill="#e4e4e4">Y</text><text x="1488.0" y="1602.8" font-size="7.6" text-anchor="end" fill="#000" opacity="0.5">0.000</text><text x="1487.5" y="1602.0" font-size="7.6" text-anchor="end" fill="#e4e4e4">0.000</text><circle cx="1405.7" cy="1599.3" r="3.2" fill="#a1a1a1" stroke="#1a1a1a" stroke-width="0.6"/><text x="1416.2" y="1617.7" font-size="7.6" text-anchor="start" fill="#000" opacity="0.5">Z</text><text x="1415.7" y="1616.9" font-size="7.6" text-anchor="start" fill="#e4e4e4">Z</text><circle cx="1405.7" cy="1614.2" r="3.2" fill="#a1a1a1" stroke="#1a1a1a" stroke-width="0.6"/><rect x="1518.1" y="1503.9" width="93.8" height="76.1" rx="3" fill="#000" opacity="0.35"/><rect x="1517.1" y="1501.9" width="93.8" height="76.1" rx="3" fill="#303030"/><path d="M1517.1 1515.1 V1504.9 Q1517.1 1501.9 1520.1 1501.9 H1607.9 Q1610.9 1501.9 1610.9 1504.9 V1515.1Z" fill="#1e7360"/><path d="M1524.1 1506.9 L1527.1 1509.9 L1530.1 1506.9" fill="none" stroke="#d8d8d8" stroke-width="1"/><text x="1536.6" y="1511.6" font-size="7.6" text-anchor="start" fill="#000" opacity="0.5">Translate Instances</text><text x="1536.1" y="1510.8" font-size="7.6" text-anchor="start" fill="#e8e8e8">Translate Instances</text><text x="1527.6" y="1528.5" font-size="7.6" text-anchor="start" fill="#000" opacity="0.5">Instances</text><text x="1527.1" y="1527.7" font-size="7.6" text-anchor="start" fill="#e4e4e4">Instances</text><rect x="1515.1" y="1520.5" width="4" height="9" rx="0.5" fill="#00d6a3"/><rect x="1608.9" y="1520.5" width="4" height="9" rx="0.5" fill="#00d6a3"/><text x="1527.6" y="1542.8" font-size="7.6" text-anchor="start" fill="#000" opacity="0.5">Selection</text><text x="1527.1" y="1542.0" font-size="7.6" text-anchor="start" fill="#e4e4e4">Selection</text><path d="M1517.1 1535.3 L1521.1 1539.3 L1517.1 1543.3 L1513.1 1539.3Z" fill="#cca6d6"/><text x="1527.6" y="1557.6" font-size="7.6" text-anchor="start" fill="#000" opacity="0.5">Translation</text><text x="1527.1" y="1556.8" font-size="7.6" text-anchor="start" fill="#e4e4e4">Translation</text><path d="M1517.1 1550.1 L1521.1 1554.1 L1517.1 1558.1 L1513.1 1554.1Z" fill="#6363c7"/><rect x="1525.1" y="1564.4" width="10" height="10" rx="2" fill="#282828"/><rect x="1527.1" y="1566.4" width="6" height="6" fill="#3a3a3a"/><text x="1539.6" y="1572.9" font-size="7.6" text-anchor="start" fill="#000" opacity="0.5">Local Space</text><text x="1539.1" y="1572.1" font-size="7.6" text-anchor="start" fill="#e4e4e4">Local Space</text><path d="M1517.1 1565.4 L1521.1 1569.4 L1517.1 1573.4 L1513.1 1569.4Z" fill="#cca6d6"/><rect x="1716.7" y="1509.7" width="93.8" height="131.1" rx="3" fill="#000" opacity="0.35"/><rect x="1715.7" y="1507.7" width="93.8" height="131.1" rx="3" fill="#303030"/><path d="M1715.7 1520.9 V1510.7 Q1715.7 1507.7 1718.7 1507.7 H1806.5 Q1809.5 1507.7 1809.5 1510.7 V1520.9Z" fill="#1e7360"/><path d="M1722.7 1512.7 L1725.7 1515.7 L1728.7 1512.7" fill="none" stroke="#d8d8d8" stroke-width="1"/><text x="1735.2" y="1517.4" font-size="7.6" text-anchor="start" fill="#000" opacity="0.5">Rotate Instances</text><text x="1734.7" y="1516.6" font-size="7.6" text-anchor="start" fill="#e8e8e8">Rotate Instances</text><text x="1726.2" y="1533.8" font-size="7.6" text-anchor="start" fill="#000" opacity="0.5">Instances</text><text x="1725.7" y="1533.0" font-size="7.6" text-anchor="start" fill="#e4e4e4">Instances</text><rect x="1713.7" y="1525.8" width="4" height="9" rx="0.5" fill="#00d6a3"/><rect x="1807.5" y="1525.8" width="4" height="9" rx="0.5" fill="#00d6a3"/><text x="1726.2" y="1547.8" font-size="7.6" text-anchor="start" fill="#000" opacity="0.5">Selection</text><text x="1725.7" y="1547.0" font-size="7.6" text-anchor="start" fill="#e4e4e4">Selection</text><path d="M1715.7 1540.3 L1719.7 1544.3 L1715.7 1548.3 L1711.7 1544.3Z" fill="#cca6d6"/><text x="1726.2" y="1563.0" font-size="7.6" text-anchor="start" fill="#000" opacity="0.5">Rotation</text><text x="1725.7" y="1562.2" font-size="7.6" text-anchor="start" fill="#e4e4e4">Rotation</text><path d="M1715.7 1555.5 L1719.7 1559.5 L1715.7 1563.5 L1711.7 1559.5Z" fill="#a663c7"/><text x="1726.2" y="1577.8" font-size="7.6" text-anchor="start" fill="#000" opacity="0.5">Pivot Point</text><text x="1725.7" y="1577.0" font-size="7.6" text-anchor="start" fill="#e4e4e4">Pivot Point</text><path d="M1715.7 1570.3 L1719.7 1574.3 L1715.7 1578.3 L1711.7 1574.3Z" fill="#6363c7"/><rect x="1722.7" y="1583.0" width="79.8" height="37.7" rx="2" fill="#282828"/><rect x="1724.7" y="1584.5" width="75.8" height="10" rx="1" fill="#3f3f3f"/><text x="1729.2" y="1593.0" font-size="7.6" text-anchor="start" fill="#000" opacity="0.5">X</text><text x="1728.7" y="1592.2" font-size="7.6" text-anchor="start" fill="#e4e4e4">X</text><text x="1798.0" y="1593.0" font-size="7.6" text-anchor="end" fill="#000" opacity="0.5">0 m</text><text x="1797.5" y="1592.2" font-size="7.6" text-anchor="end" fill="#e4e4e4">0 m</text><rect x="1724.7" y="1596.4" width="75.8" height="10" rx="1" fill="#3f3f3f"/><text x="1729.2" y="1604.9" font-size="7.6" text-anchor="start" fill="#000" opacity="0.5">Y</text><text x="1728.7" y="1604.1" font-size="7.6" text-anchor="start" fill="#e4e4e4">Y</text><text x="1798.0" y="1604.9" font-size="7.6" text-anchor="end" fill="#000" opacity="0.5">0 m</text><text x="1797.5" y="1604.1" font-size="7.6" text-anchor="end" fill="#e4e4e4">0 m</text><rect x="1724.7" y="1609.2" width="75.8" height="10" rx="1" fill="#3f3f3f"/><text x="1729.2" y="1617.7" font-size="7.6" text-anchor="start" fill="#000" opacity="0.5">Z</text><text x="1728.7" y="1616.9" font-size="7.6" text-anchor="start" fill="#e4e4e4">Z</text><text x="1798.0" y="1617.7" font-size="7.6" text-anchor="end" fill="#000" opacity="0.5">0 m</text><text x="1797.5" y="1616.9" font-size="7.6" text-anchor="end" fill="#e4e4e4">0 m</text><rect x="1723.7" y="1625.2" width="10" height="10" rx="2" fill="#282828"/><rect x="1725.7" y="1627.2" width="6" height="6" fill="#4772b3"/><path d="M1726.2 1630.2 L1728.2 1632.2 L1731.7 1627.2" fill="none" stroke="#fff" stroke-width="1.2"/><text x="1738.2" y="1633.7" font-size="7.6" text-anchor="start" fill="#000" opacity="0.5">Local Space</text><text x="1737.7" y="1632.9" font-size="7.6" text-anchor="start" fill="#e4e4e4">Local Space</text><path d="M1715.7 1626.2 L1719.7 1630.2 L1715.7 1634.2 L1711.7 1630.2Z" fill="#cca6d6"/><rect x="1845.4" y="1646.3" width="93.9" height="61.2" rx="3" fill="#000" opacity="0.35"/><rect x="1844.4" y="1644.3" width="93.9" height="61.2" rx="3" fill="#303030"/><path d="M1844.4 1657.5 V1647.3 Q1844.4 1644.3 1847.4 1644.3 H1935.3 Q1938.3 1644.3 1938.3 1647.3 V1657.5Z" fill="#1e7360"/><path d="M1851.4 1649.3 L1854.4 1652.3 L1857.4 1649.3" fill="none" stroke="#d8d8d8" stroke-width="1"/><text x="1863.9" y="1654.0" font-size="7.6" text-anchor="start" fill="#000" opacity="0.5">Set Material</text><text x="1863.4" y="1653.2" font-size="7.6" text-anchor="start" fill="#e8e8e8">Set Material</text><text x="1854.9" y="1670.7" font-size="7.6" text-anchor="start" fill="#000" opacity="0.5">Geometry</text><text x="1854.4" y="1669.9" font-size="7.6" text-anchor="start" fill="#e4e4e4">Geometry</text><rect x="1842.4" y="1662.7" width="4" height="9" rx="0.5" fill="#00d6a3"/><rect x="1936.3" y="1662.7" width="4" height="9" rx="0.5" fill="#00d6a3"/><text x="1854.9" y="1684.7" font-size="7.6" text-anchor="start" fill="#000" opacity="0.5">Selection</text><text x="1854.4" y="1683.9" font-size="7.6" text-anchor="start" fill="#e4e4e4">Selection</text><path d="M1844.4 1677.2 L1848.4 1681.2 L1844.4 1685.2 L1840.4 1681.2Z" fill="#cca6d6"/><text x="1854.9" y="1699.9" font-size="7.6" text-anchor="start" fill="#000" opacity="0.5">Material</text><text x="1854.4" y="1699.1" font-size="7.6" text-anchor="start" fill="#e4e4e4">Material</text><rect x="1842.4" y="1691.9" width="4" height="9" rx="0.5" fill="#eb7582"/><rect x="1986.8" y="1726.6" width="93.9" height="31.7" rx="3" fill="#000" opacity="0.35"/><rect x="1985.8" y="1724.6" width="93.9" height="31.7" rx="3" fill="#303030"/><path d="M1985.8 1737.8 V1727.6 Q1985.8 1724.6 1988.8 1724.6 H2076.7 Q2079.7 1724.6 2079.7 1727.6 V1737.8Z" fill="#1e7360"/><path d="M1992.8 1729.6 L1995.8 1732.6 L1998.8 1729.6" fill="none" stroke="#d8d8d8" stroke-width="1"/><text x="2005.3" y="1734.3" font-size="7.6" text-anchor="start" fill="#000" opacity="0.5">Join Geometry</text><text x="2004.8" y="1733.5" font-size="7.6" text-anchor="start" fill="#e8e8e8">Join Geometry</text><text x="1996.3" y="1750.0" font-size="7.6" text-anchor="start" fill="#000" opacity="0.5">Geometry</text><text x="1995.8" y="1749.2" font-size="7.6" text-anchor="start" fill="#e4e4e4">Geometry</text><rect x="1983.8" y="1738.5" width="4" height="16" rx="0.5" fill="#00d6a3"/><rect x="2077.7" y="1742.0" width="4" height="9" rx="0.5" fill="#00d6a3"/><rect x="2126.6" y="1724.5" width="93.9" height="47.7" rx="3" fill="#000" opacity="0.35"/><rect x="2125.6" y="1722.5" width="93.9" height="47.7" rx="3" fill="#303030"/><path d="M2125.6 1735.7 V1725.5 Q2125.6 1722.5 2128.6 1722.5 H2216.5 Q2219.5 1722.5 2219.5 1725.5 V1735.7Z" fill="#232323"/><path d="M2132.6 1727.5 L2135.6 1730.5 L2138.6 1727.5" fill="none" stroke="#d8d8d8" stroke-width="1"/><text x="2145.1" y="1732.2" font-size="7.6" text-anchor="start" fill="#000" opacity="0.5">Group Output</text><text x="2144.6" y="1731.4" font-size="7.6" text-anchor="start" fill="#e8e8e8">Group Output</text><text x="2136.1" y="1749.3" font-size="7.6" text-anchor="start" fill="#000" opacity="0.5">Geometry</text><text x="2135.6" y="1748.5" font-size="7.6" text-anchor="start" fill="#e4e4e4">Geometry</text><rect x="2123.6" y="1741.3" width="4" height="9" rx="0.5" fill="#00d6a3"/><circle cx="2125.6" cy="1760.5" r="3.2" fill="none" stroke="#5a5a5a" stroke-width="1.2"/><rect x="269.0" y="1645.6" width="94.5" height="149.8" rx="3" fill="#000" opacity="0.35"/><rect x="268.0" y="1643.6" width="94.5" height="149.8" rx="3" fill="#303030"/><path d="M268.0 1656.8 V1646.6 Q268.0 1643.6 271.0 1643.6 H359.5 Q362.5 1643.6 362.5 1646.6 V1656.8Z" fill="#232323"/><path d="M275.0 1648.6 L278.0 1651.6 L281.0 1648.6" fill="none" stroke="#d8d8d8" stroke-width="1"/><text x="287.5" y="1653.3" font-size="7.6" text-anchor="start" fill="#000" opacity="0.5">Group Input</text><text x="287.0" y="1652.5" font-size="7.6" text-anchor="start" fill="#e8e8e8">Group Input</text><text x="352.0" y="1670.7" font-size="7.6" text-anchor="end" fill="#000" opacity="0.5">Geometry</text><text x="351.5" y="1669.9" font-size="7.6" text-anchor="end" fill="#e4e4e4">Geometry</text><rect x="360.5" y="1662.7" width="4" height="9" rx="0.5" fill="#00d6a3"/><text x="352.0" y="1684.9" font-size="7.6" text-anchor="end" fill="#000" opacity="0.5">Min</text><text x="351.5" y="1684.1" font-size="7.6" text-anchor="end" fill="#e4e4e4">Min</text><circle cx="362.5" cy="1681.4" r="3.2" fill="#a1a1a1" stroke="#1a1a1a" stroke-width="0.6"/><text x="352.0" y="1699.8" font-size="7.6" text-anchor="end" fill="#000" opacity="0.5">Max</text><text x="351.5" y="1699.0" font-size="7.6" text-anchor="end" fill="#e4e4e4">Max</text><circle cx="362.5" cy="1696.3" r="3.2" fill="#a1a1a1" stroke="#1a1a1a" stroke-width="0.6"/><text x="352.0" y="1713.9" font-size="7.6" text-anchor="end" fill="#000" opacity="0.5">Density</text><text x="351.5" y="1713.1" font-size="7.6" text-anchor="end" fill="#e4e4e4">Density</text><circle cx="362.5" cy="1710.4" r="3.2" fill="#a1a1a1" stroke="#1a1a1a" stroke-width="0.6"/><text x="352.0" y="1728.9" font-size="7.6" text-anchor="end" fill="#000" opacity="0.5">Material</text><text x="351.5" y="1728.1" font-size="7.6" text-anchor="end" fill="#e4e4e4">Material</text><rect x="360.5" y="1720.9" width="4" height="9" rx="0.5" fill="#eb7582"/><text x="352.0" y="1743.8" font-size="7.6" text-anchor="end" fill="#000" opacity="0.5">Seed</text><text x="351.5" y="1743.0" font-size="7.6" text-anchor="end" fill="#e4e4e4">Seed</text><rect x="360.5" y="1735.8" width="4" height="9" rx="0.5" fill="#598c5c"/><text x="352.0" y="1757.8" font-size="7.6" text-anchor="end" fill="#000" opacity="0.5">Controller</text><text x="351.5" y="1757.0" font-size="7.6" text-anchor="end" fill="#e4e4e4">Controller</text><rect x="360.5" y="1749.8" width="4" height="9" rx="0.5" fill="#ed9e5c"/><text x="352.0" y="1772.6" font-size="7.6" text-anchor="end" fill="#000" opacity="0.5">Instanced_Object</text><text x="351.5" y="1771.8" font-size="7.6" text-anchor="end" fill="#e4e4e4">Instanced_Object</text><rect x="360.5" y="1764.6" width="4" height="9" rx="0.5" fill="#ed9e5c"/><circle cx="362.5" cy="1783.6" r="3.2" fill="none" stroke="#5a5a5a" stroke-width="1.2"/></svg>
<svg class="a" style="left:0;top:868px" width="2508" height="170" viewBox="0 868 2508 170" font-family="Liberation Sans"><rect x="3.5" y="875.5" width="95" height="59" rx="11" fill="#262626" stroke="#3b3b3b" stroke-width="3"/><g transform="translate(22,888) scale(1)"><circle cx="0" cy="0" r="5.2" fill="#9a9a9a"/><circle cx="14" cy="3.5" r="6.2" fill="#9a9a9a"/><circle cx="6.5" cy="18.5" r="7.5" fill="#c8c8c8"/><circle cx="27.5" cy="27.2" r="11.6" fill="#e6e6e6"/></g><path d="M70 902 L79 911 L88 902" fill="none" stroke="#e0e0e0" stroke-width="3"/><rect x="117.5" y="875.5" width="241" height="59" rx="11" fill="#262626" stroke="#3b3b3b" stroke-width="3"/><g transform="translate(130,884)"><path d="M30 2 C22 2 17 9 19 16 L3 32 C0 35 0 39 3 42 C6 45 10 45 13 42 L29 26 C36 28 43 23 43 15 L35 21 L27 18 L24 10 Z" fill="none" stroke="#e6e6e6" stroke-width="4" stroke-linejoin="round"/></g><g transform="translate(197,917) scale(0.9804,1)"><text x="0" y="2" font-size="34.68" fill="#000" opacity="0.45" text-anchor="start" >Modifier</text><text x="0" y="0" font-size="34.68" fill="#e6e6e6" text-anchor="start" >Modifier</text></g><path d="M330 902 L339 911 L348 902" fill="none" stroke="#e0e0e0" stroke-width="3"/><g transform="translate(398,917) scale(0.9804,1)"><text x="0" y="2" font-size="34.68" fill="#000" opacity="0.45" text-anchor="start" >View</text><text x="0" y="0" font-size="34.68" fill="#e6e6e6" text-anchor="start" >View</text></g><g transform="translate(518,917) scale(0.9804,1)"><text x="0" y="2" font-size="34.68" fill="#000" opacity="0.45" text-anchor="start" >Select</text><text x="0" y="0" font-size="34.68" fill="#e6e6e6" text-anchor="start" >Select</text></g><g transform="translate(659,917) scale(0.9804,1)"><text x="0" y="2" font-size="34.68" fill="#000" opacity="0.45" text-anchor="start" >Add</text><text x="0" y="0" font-size="34.68" fill="#e6e6e6" text-anchor="start" >Add</text></g><g transform="translate(766,917) scale(0.9804,1)"><text x="0" y="2" font-size="34.68" fill="#000" opacity="0.45" text-anchor="start" >Node</text><text x="0" y="0" font-size="34.68" fill="#e6e6e6" text-anchor="start" >Node</text></g><rect x="920" y="875" width="773" height="60" rx="11" fill="#3b3b3b"/><path d="M931 877 H1015 V933 H931 Q922 933 922 924 V886 Q922 877 931 877Z" fill="#262626"/><g transform="translate(936,883)" fill="none"><rect x="2" y="0" width="25" height="16" rx="7" fill="#e6e6e6"/><rect x="7" y="6" width="16" height="4" rx="1" fill="#262626"/><rect x="-2" y="23" width="25" height="17" rx="7" fill="#e6e6e6"/><rect x="3" y="31" width="16" height="4" rx="1" fill="#262626"/><path d="M30 4 Q35 4 35 9 V28 Q35 33 30 33 H25" stroke="#bdbdbd" stroke-width="3"/></g><path d="M987 903 L996 912 L1005 903" fill="none" stroke="#e0e0e0" stroke-width="3"/><rect x="1018" y="877" width="487" height="56" fill="#1b1b1b"/><g transform="translate(1041,917) scale(0.9804,1)"><text x="0" y="2" font-size="34.68" fill="#000" opacity="0.45" text-anchor="start" >Tiles_Spawner of Sprites.001</text><text x="0" y="0" font-size="34.68" fill="#e6e6e6" text-anchor="start" >Tiles_Spawner of Sprites.001</text></g><rect x="1508" y="877" width="58" height="56" fill="#545454"/><rect x="1570" y="877" width="59" height="56" fill="#545454"/><path d="M1632 877 H1682 Q1691 877 1691 886 V924 Q1691 933 1682 933 H1632Z" fill="#545454"/><path d="M1536.5 884.4000000000001 C1531.3 888.2 1526.3 890.2 1517.8 890.5 V902.2 C1517.8 913.2 1524.3 919.2 1536.5 925.7 C1548.3 919.2 1554.8999999999999 913.2 1554.8999999999999 902.2 V890.5 C1546.3 890.2 1541.3 888.2 1536.5 884.4000000000001Z" fill="none" stroke="#bdbdbd" stroke-width="3"/><g transform="translate(1578.4,884.8)" fill="none" stroke-width="3"><path d="M9.8 9.9 H1.5 V39.3 H29.5 V32.5" stroke="#bdbdbd"/><path d="M14.3 12 V26.8 H39.7 V14.5 M14.3 12 V1.5 H29.5" stroke="#e6e6e6"/><path d="M28 0 H30 L41.2 11.2 V13.3 H28Z" fill="#e6e6e6" stroke="none"/></g><path d="M1649.1 893.3 L1672.3999999999999 916.5999999999999 M1672.3999999999999 893.3 L1649.1 916.5999999999999" stroke="#e6e6e6" stroke-width="3.2" stroke-linecap="round"/><g transform="translate(1720,884)" fill="none" stroke="#a8a8a8" stroke-width="2.6" stroke-linejoin="round" stroke-linecap="round"><path d="M5.7 16.1 L9.2 12.6 H18 L28.2 2.5 V0.5 H31 L40.8 10 V13.3 H37 L28.2 22.1 V31.6 L25 34.8 Z"/><path d="M0.5 40.6 L11.7 29.4"/></g><rect x="2287.5" y="875.5" width="57" height="59" rx="11" fill="#545454" stroke="#3b3b3b" stroke-width="3"/><g transform="translate(2317 905) rotate(45)"><path d="M-13 15 V-1 A13 13 0 0 1 13 -1 V15" fill="none" stroke="#b0b0b0" stroke-width="11"/><path d="M-13 12 V-1 A13 13 0 0 1 13 -1 V12" fill="none" stroke="#545454" stroke-width="5.5"/></g><rect x="2364.5" y="875.5" width="119" height="59" rx="11" fill="#262626" stroke="#3b3b3b" stroke-width="3"/><path d="M2376 877 H2422 V933 H2376 Q2366 933 2366 923 V887 Q2366 877 2376 877Z" fill="#4772b3"/><defs><clipPath id="ovc"><circle cx="2399.5" cy="898.4" r="15"/></clipPath></defs><path d="M2375.5 900 A14.5 14.5 0 1 0 2398 919" fill="none" stroke="#fff" stroke-width="3.5"/><circle cx="2399.5" cy="898.4" r="15" fill="#fff"/><circle cx="2386" cy="911.8" r="14.5" fill="none" stroke="#4772b3" stroke-width="3" stroke-dasharray="5 4" clip-path="url(#ovc)"/><path d="M2444 902 L2453 911 L2462 902" fill="none" stroke="#e0e0e0" stroke-width="3"/><g transform="translate(36,992)"><path d="M0 12 V0 H12 M32 0 H44 V12 M44 32 V44 H32 M12 44 H0 V32" fill="none" stroke="#999" stroke-width="4"/><rect x="9.5" y="9.5" width="25" height="25" rx="2" fill="#e6e6e6"/></g><g transform="translate(110,1026) scale(0.9804,1)"><text x="0" y="2" font-size="34.68" fill="#000" opacity="0.45" text-anchor="start" >2_Organic_Fill_Region.001</text><text x="0" y="0" font-size="34.68" fill="#e6e6e6" text-anchor="start" >2_Organic_Fill_Region.001</text></g><path d="M569 1000 L582 1013 L569 1026" fill="none" stroke="#e6e6e6" stroke-width="3.5"/><g transform="translate(621,997.2) scale(1)"><circle cx="0" cy="0" r="5.2" fill="#9a9a9a"/><circle cx="14" cy="3.5" r="6.2" fill="#9a9a9a"/><circle cx="6.5" cy="18.5" r="7.5" fill="#c8c8c8"/><circle cx="27.5" cy="27.2" r="11.6" fill="#e6e6e6"/></g><g transform="translate(687,1026) scale(0.9804,1)"><text x="0" y="2" font-size="34.68" fill="#000" opacity="0.45" text-anchor="start" >GeometryNodes</text><text x="0" y="0" font-size="34.68" fill="#e6e6e6" text-anchor="start" >GeometryNodes</text></g><path d="M984 1000 L997 1013 L984 1026" fill="none" stroke="#e6e6e6" stroke-width="3.5"/><g transform="translate(1032,993)" fill="none"><rect x="2" y="0" width="25" height="16" rx="7" fill="#e6e6e6"/><rect x="7" y="6" width="16" height="4" rx="1" fill="#262626"/><rect x="-2" y="23" width="25" height="17" rx="7" fill="#e6e6e6"/><rect x="3" y="31" width="16" height="4" rx="1" fill="#262626"/><path d="M30 4 Q35 4 35 9 V28 Q35 33 30 33 H25" stroke="#bdbdbd" stroke-width="3"/></g><g transform="translate(1103,1026) scale(0.9804,1)"><text x="0" y="2" font-size="34.68" fill="#000" opacity="0.45" text-anchor="start" >Tiles_Spawner of Sprites.001</text><text x="0" y="0" font-size="34.68" fill="#e6e6e6" text-anchor="start" >Tiles_Spawner of Sprites.001</text></g></svg>
<div id="ol" class="a"></div>
<svg class="a" style="left:2525px;top:0" width="1277" height="550" viewBox="2525 0 1277 550" font-family="Liberation Sans"><rect x="2525" y="-77.6" width="1277" height="61.8" fill="#2b2b2b"/><rect x="2525" y="46.0" width="1277" height="61.8" fill="#2b2b2b"/><rect x="2525" y="169.6" width="1277" height="61.8" fill="#2b2b2b"/><rect x="2525" y="293.2" width="1277" height="61.8" fill="#2b2b2b"/><rect x="2525" y="416.8" width="1277" height="61.8" fill="#2b2b2b"/><rect x="2533.5" y="297.5" width="1258" height="54" rx="9" fill="#334a78" stroke="#4f77bb" stroke-width="3"/><rect x="2612" y="123" width="3" height="430" fill="#4a4a4a"/><rect x="2596" y="-5" width="38" height="8" fill="#e6e6e6"/><path d="M2599 7 V34 H2631 V7" fill="#e6e6e6"/><rect x="2609" y="12" width="12" height="4" rx="1" fill="#282828"/><g transform="translate(2659,31) scale(0.9804,1)"><text x="0" y="2" font-size="34.68" fill="#000" opacity="0.45" text-anchor="start"  textLength="258.7" lengthAdjust="spacingAndGlyphs">Scene Collection</text><text x="0" y="0" font-size="34.68" fill="#cccccc" text-anchor="start"  textLength="258.7" lengthAdjust="spacingAndGlyphs">Scene Collection</text></g><path d="M2603 72 L2617 86 L2631 72" fill="none" stroke="#cccccc" stroke-width="3.5"/><rect x="2650" y="51" width="57" height="55" rx="10" fill="#505050" stroke="#6a6a6a" stroke-width="2"/><rect x="2659" y="58" width="38" height="8" fill="#e6e6e6"/><path d="M2662 70 V97 H2694 V70" fill="#e6e6e6"/><rect x="2672" y="75" width="12" height="4" rx="1" fill="#282828"/><g transform="translate(2720,93) scale(0.9804,1)"><text x="0" y="2" font-size="34.68" fill="#000" opacity="0.45" text-anchor="start"  textLength="296.5" lengthAdjust="spacingAndGlyphs">Splatter_Tile_Setup</text><text x="0" y="0" font-size="34.68" fill="#f0f0f0" text-anchor="start"  textLength="296.5" lengthAdjust="spacingAndGlyphs">Splatter_Tile_Setup</text></g><rect x="3541" y="61" width="31" height="31" rx="4" fill="#e6e6e6"/><path d="M3548 76 L3554 83 L3566 68" fill="none" stroke="#282828" stroke-width="4"/><path d="M3601 61 L3635 73 L3619 77 L3614 95 Z" fill="#e6e6e6"/><path d="M3658 76 Q3679 48 3700 76 Q3679 104 3658 76 Z" fill="#e6e6e6"/><circle cx="3679" cy="76" r="9" fill="none" stroke="#282828" stroke-width="4"/><circle cx="3679" cy="76" r="4" fill="#e6e6e6"/><path d="M3720 66 H3730 L3736 59 H3746 L3752 66 H3762 V93 H3720 Z" fill="#e6e6e6"/><circle cx="3741" cy="78" r="10" fill="none" stroke="#282828" stroke-width="3.5"/><circle cx="3741" cy="78" r="5" fill="#282828"/><path d="M2671 125.5 L2684 138.5 L2671 151.5" fill="none" stroke="#cccccc" stroke-width="3.5"/><path d="M2722.5 121.5 H2756.5 L2739.5 156.5 Z" fill="none" stroke="#c0824e" stroke-width="9.5" stroke-linejoin="round"/><g transform="translate(2784,154.5) scale(0.9804,1)"><text x="0" y="2" font-size="34.68" fill="#000" opacity="0.45" text-anchor="start"  textLength="234.2" lengthAdjust="spacingAndGlyphs">1_Base_Region</text><text x="0" y="0" font-size="34.68" fill="#d0d0d0" text-anchor="start"  textLength="234.2" lengthAdjust="spacingAndGlyphs">1_Base_Region</text></g><path d="M3124 120.5 C3116 117.5 3108 124.5 3110 133.5 L3092 149.5 C3088 153.5 3091 159.5 3096 157.5 L3114 140.5 C3122 143.5 3130 136.5 3128 127.5 L3121 133.5 L3116 129.5 Z" fill="none" stroke="#5b86d6" stroke-width="4" stroke-linejoin="round"/><rect x="3148.2" y="126.5" width="12" height="12" rx="1.5" fill="#a0a0a0"/><rect x="3148.2" y="142.2" width="12" height="12" rx="1.5" fill="#a0a0a0"/><rect x="3165.4" y="118.4" width="9" height="9" rx="1" fill="none" stroke="#808080" stroke-width="3"/><rect x="3163.9" y="132.6" width="12" height="12" rx="1.5" fill="#a0a0a0"/><rect x="3163.9" y="148.2" width="12" height="12" rx="1.5" fill="#a0a0a0"/><rect x="3181.0" y="128.0" width="9" height="9" rx="1" fill="none" stroke="#808080" stroke-width="3"/><rect x="3181.0" y="143.7" width="9" height="9" rx="1" fill="none" stroke="#808080" stroke-width="3"/><path d="M3216 123.5 H3248 L3232 154.5 Z" fill="none" stroke="#20b897" stroke-width="3.5"/><rect x="3211" y="118.5" width="10" height="10" fill="#282828" stroke="#20b897" stroke-width="3"/><rect x="3243" y="118.5" width="10" height="10" fill="#282828" stroke="#20b897" stroke-width="3"/><rect x="3227" y="150.5" width="10" height="10" fill="#282828" stroke="#20b897" stroke-width="3"/><path d="M3601 123.5 L3635 135.5 L3619 139.5 L3614 157.5 Z" fill="#e6e6e6"/><path d="M3658 138.5 Q3679 110.5 3700 138.5 Q3679 166.5 3658 138.5 Z" fill="#e6e6e6"/><circle cx="3679" cy="138.5" r="9" fill="none" stroke="#282828" stroke-width="4"/><circle cx="3679" cy="138.5" r="4" fill="#e6e6e6"/><path d="M3720 128.5 H3730 L3736 121.5 H3746 L3752 128.5 H3762 V155.5 H3720 Z" fill="#e6e6e6"/><circle cx="3741" cy="140.5" r="10" fill="none" stroke="#282828" stroke-width="3.5"/><circle cx="3741" cy="140.5" r="5" fill="#282828"/><path d="M2671 187.3 L2684 200.3 L2671 213.3" fill="none" stroke="#cccccc" stroke-width="3.5"/><path d="M2722.5 183.3 H2756.5 L2739.5 218.3 Z" fill="none" stroke="#c0824e" stroke-width="9.5" stroke-linejoin="round"/><g transform="translate(2784,216.3) scale(0.9804,1)"><text x="0" y="2" font-size="34.68" fill="#000" opacity="0.45" text-anchor="start"  textLength="309.4" lengthAdjust="spacingAndGlyphs">1_Base_Region.001</text><text x="0" y="0" font-size="34.68" fill="#d0d0d0" text-anchor="start"  textLength="309.4" lengthAdjust="spacingAndGlyphs">1_Base_Region.001</text></g><path d="M3199 182.3 C3191 179.3 3183 186.3 3185 195.3 L3167 211.3 C3163 215.3 3166 221.3 3171 219.3 L3189 202.3 C3197 205.3 3205 198.3 3203 189.3 L3196 195.3 L3191 191.3 Z" fill="none" stroke="#5b86d6" stroke-width="4" stroke-linejoin="round"/><rect x="3223.2" y="188.3" width="12" height="12" rx="1.5" fill="#a0a0a0"/><rect x="3223.2" y="204.0" width="12" height="12" rx="1.5" fill="#a0a0a0"/><rect x="3240.4" y="180.2" width="9" height="9" rx="1" fill="none" stroke="#808080" stroke-width="3"/><rect x="3238.9" y="194.4" width="12" height="12" rx="1.5" fill="#a0a0a0"/><rect x="3238.9" y="210.0" width="12" height="12" rx="1.5" fill="#a0a0a0"/><rect x="3256.0" y="189.8" width="9" height="9" rx="1" fill="none" stroke="#808080" stroke-width="3"/><rect x="3256.0" y="205.5" width="9" height="9" rx="1" fill="none" stroke="#808080" stroke-width="3"/><path d="M3291 185.3 H3323 L3307 216.3 Z" fill="none" stroke="#20b897" stroke-width="3.5"/><rect x="3286" y="180.3" width="10" height="10" fill="#282828" stroke="#20b897" stroke-width="3"/><rect x="3318" y="180.3" width="10" height="10" fill="#282828" stroke="#20b897" stroke-width="3"/><rect x="3302" y="212.3" width="10" height="10" fill="#282828" stroke="#20b897" stroke-width="3"/><path d="M3601 185.3 L3635 197.3 L3619 201.3 L3614 219.3 Z" fill="#e6e6e6"/><path d="M3658 200.3 Q3679 172.3 3700 200.3 Q3679 228.3 3658 200.3 Z" fill="#e6e6e6"/><circle cx="3679" cy="200.3" r="9" fill="none" stroke="#2b2b2b" stroke-width="4"/><circle cx="3679" cy="200.3" r="4" fill="#e6e6e6"/><path d="M3720 190.3 H3730 L3736 183.3 H3746 L3752 190.3 H3762 V217.3 H3720 Z" fill="#e6e6e6"/><circle cx="3741" cy="202.3" r="10" fill="none" stroke="#2b2b2b" stroke-width="3.5"/><circle cx="3741" cy="202.3" r="5" fill="#2b2b2b"/><path d="M2671 249.10000000000002 L2684 262.1 L2671 275.1" fill="none" stroke="#cccccc" stroke-width="3.5"/><path d="M2722.5 245.10000000000002 H2756.5 L2739.5 280.1 Z" fill="none" stroke="#c0824e" stroke-width="9.5" stroke-linejoin="round"/><g transform="translate(2784,278.1) scale(0.9804,1)"><text x="0" y="2" font-size="34.68" fill="#000" opacity="0.45" text-anchor="start"  textLength="337.9" lengthAdjust="spacingAndGlyphs">2_Organic_Fill_Region</text><text x="0" y="0" font-size="34.68" fill="#d0d0d0" text-anchor="start"  textLength="337.9" lengthAdjust="spacingAndGlyphs">2_Organic_Fill_Region</text></g><path d="M3226 244.10000000000002 C3218 241.10000000000002 3210 248.10000000000002 3212 257.1 L3194 273.1 C3190 277.1 3193 283.1 3198 281.1 L3216 264.1 C3224 267.1 3232 260.1 3230 251.10000000000002 L3223 257.1 L3218 253.10000000000002 Z" fill="none" stroke="#5b86d6" stroke-width="4" stroke-linejoin="round"/><path d="M3256 247.10000000000002 H3288 L3272 278.1 Z" fill="none" stroke="#20b897" stroke-width="3.5"/><rect x="3251" y="242.10000000000002" width="10" height="10" fill="#282828" stroke="#20b897" stroke-width="3"/><rect x="3283" y="242.10000000000002" width="10" height="10" fill="#282828" stroke="#20b897" stroke-width="3"/><rect x="3267" y="274.1" width="10" height="10" fill="#282828" stroke="#20b897" stroke-width="3"/><path d="M3601 247.10000000000002 L3635 259.1 L3619 263.1 L3614 281.1 Z" fill="#e6e6e6"/><path d="M3658 262.1 Q3679 234.10000000000002 3700 262.1 Q3679 290.1 3658 262.1 Z" fill="#e6e6e6"/><circle cx="3679" cy="262.1" r="9" fill="none" stroke="#282828" stroke-width="4"/><circle cx="3679" cy="262.1" r="4" fill="#e6e6e6"/><path d="M3720 252.10000000000002 H3730 L3736 245.10000000000002 H3746 L3752 252.10000000000002 H3762 V279.1 H3720 Z" fill="#e6e6e6"/><circle cx="3741" cy="264.1" r="10" fill="none" stroke="#282828" stroke-width="3.5"/><circle cx="3741" cy="264.1" r="5" fill="#282828"/><path d="M2671 310.9 L2684 323.9 L2671 336.9" fill="none" stroke="#cccccc" stroke-width="3.5"/><rect x="2711" y="296.9" width="57" height="54" rx="10" fill="#5c6f94" stroke="#7a8cb0" stroke-width="2"/><path d="M2722.5 306.9 H2756.5 L2739.5 341.9 Z" fill="none" stroke="#c0824e" stroke-width="9.5" stroke-linejoin="round"/><g transform="translate(2784,339.9) scale(0.9804,1)"><text x="0" y="2" font-size="34.68" fill="#000" opacity="0.45" text-anchor="start"  textLength="413.1" lengthAdjust="spacingAndGlyphs">2_Organic_Fill_Region.001</text><text x="0" y="0" font-size="34.68" fill="#ffaf29" text-anchor="start"  textLength="413.1" lengthAdjust="spacingAndGlyphs">2_Organic_Fill_Region.001</text></g><path d="M3300 305.9 C3292 302.9 3284 309.9 3286 318.9 L3268 334.9 C3264 338.9 3267 344.9 3272 342.9 L3290 325.9 C3298 328.9 3306 321.9 3304 312.9 L3297 318.9 L3292 314.9 Z" fill="none" stroke="#5b86d6" stroke-width="4" stroke-linejoin="round"/><path d="M3330 308.9 H3362 L3346 339.9 Z" fill="none" stroke="#20b897" stroke-width="3.5"/><rect x="3325" y="303.9" width="10" height="10" fill="#282828" stroke="#20b897" stroke-width="3"/><rect x="3357" y="303.9" width="10" height="10" fill="#282828" stroke="#20b897" stroke-width="3"/><rect x="3341" y="335.9" width="10" height="10" fill="#282828" stroke="#20b897" stroke-width="3"/><path d="M3601 308.9 L3635 320.9 L3619 324.9 L3614 342.9 Z" fill="#e6e6e6"/><path d="M3658 323.9 Q3679 295.9 3700 323.9 Q3679 351.9 3658 323.9 Z" fill="#e6e6e6"/><circle cx="3679" cy="323.9" r="9" fill="none" stroke="#334a78" stroke-width="4"/><circle cx="3679" cy="323.9" r="4" fill="#e6e6e6"/><path d="M3720 313.9 H3730 L3736 306.9 H3746 L3752 313.9 H3762 V340.9 H3720 Z" fill="#e6e6e6"/><circle cx="3741" cy="325.9" r="10" fill="none" stroke="#334a78" stroke-width="3.5"/><circle cx="3741" cy="325.9" r="5" fill="#334a78"/><path d="M2671 372.7 L2684 385.7 L2671 398.7" fill="none" stroke="#cccccc" stroke-width="3.5"/><path d="M2722.5 368.7 H2756.5 L2739.5 403.7 Z" fill="none" stroke="#c0824e" stroke-width="9.5" stroke-linejoin="round"/><g transform="translate(2784,401.7) scale(0.9804,1)"><text x="0" y="2" font-size="34.68" fill="#000" opacity="0.45" text-anchor="start"  textLength="217.8" lengthAdjust="spacingAndGlyphs">3_End_Region</text><text x="0" y="0" font-size="34.68" fill="#d0d0d0" text-anchor="start"  textLength="217.8" lengthAdjust="spacingAndGlyphs">3_End_Region</text></g><path d="M3076 370.7 H3108 L3092 401.7 Z" fill="none" stroke="#20b897" stroke-width="3.5"/><rect x="3071" y="365.7" width="10" height="10" fill="#282828" stroke="#20b897" stroke-width="3"/><rect x="3103" y="365.7" width="10" height="10" fill="#282828" stroke="#20b897" stroke-width="3"/><rect x="3087" y="397.7" width="10" height="10" fill="#282828" stroke="#20b897" stroke-width="3"/><path d="M3601 370.7 L3635 382.7 L3619 386.7 L3614 404.7 Z" fill="#e6e6e6"/><path d="M3658 385.7 Q3679 357.7 3700 385.7 Q3679 413.7 3658 385.7 Z" fill="#e6e6e6"/><circle cx="3679" cy="385.7" r="9" fill="none" stroke="#282828" stroke-width="4"/><circle cx="3679" cy="385.7" r="4" fill="#e6e6e6"/><path d="M3720 375.7 H3730 L3736 368.7 H3746 L3752 375.7 H3762 V402.7 H3720 Z" fill="#e6e6e6"/><circle cx="3741" cy="387.7" r="10" fill="none" stroke="#282828" stroke-width="3.5"/><circle cx="3741" cy="387.7" r="5" fill="#282828"/><path d="M2671 434.5 L2684 447.5 L2671 460.5" fill="none" stroke="#cccccc" stroke-width="3.5"/><path d="M2722.5 430.5 H2756.5 L2739.5 465.5 Z" fill="none" stroke="#c0824e" stroke-width="9.5" stroke-linejoin="round"/><g transform="translate(2784,463.5) scale(0.9804,1)"><text x="0" y="2" font-size="34.68" fill="#000" opacity="0.45" text-anchor="start"  textLength="292.9" lengthAdjust="spacingAndGlyphs">3_End_Region.001</text><text x="0" y="0" font-size="34.68" fill="#d0d0d0" text-anchor="start"  textLength="292.9" lengthAdjust="spacingAndGlyphs">3_End_Region.001</text></g><path d="M3151 432.5 H3183 L3167 463.5 Z" fill="none" stroke="#20b897" stroke-width="3.5"/><rect x="3146" y="427.5" width="10" height="10" fill="#282828" stroke="#20b897" stroke-width="3"/><rect x="3178" y="427.5" width="10" height="10" fill="#282828" stroke="#20b897" stroke-width="3"/><rect x="3162" y="459.5" width="10" height="10" fill="#282828" stroke="#20b897" stroke-width="3"/><path d="M3601 432.5 L3635 444.5 L3619 448.5 L3614 466.5 Z" fill="#e6e6e6"/><path d="M3658 447.5 Q3679 419.5 3700 447.5 Q3679 475.5 3658 447.5 Z" fill="#e6e6e6"/><circle cx="3679" cy="447.5" r="9" fill="none" stroke="#2b2b2b" stroke-width="4"/><circle cx="3679" cy="447.5" r="4" fill="#e6e6e6"/><path d="M3720 437.5 H3730 L3736 430.5 H3746 L3752 437.5 H3762 V464.5 H3720 Z" fill="#e6e6e6"/><circle cx="3741" cy="449.5" r="10" fill="none" stroke="#2b2b2b" stroke-width="3.5"/><circle cx="3741" cy="449.5" r="5" fill="#2b2b2b"/><path d="M2731.5 488.29999999999995 V513.3 L2720.5 526.3 M2731.5 513.3 H2759.5" fill="none" stroke="#d98a48" stroke-width="6" stroke-linecap="round"/><g transform="translate(2784,525.3) scale(0.9804,1)"><text x="0" y="2" font-size="34.68" fill="#000" opacity="0.45" text-anchor="start"  textLength="309.4" lengthAdjust="spacingAndGlyphs">Control_Position_01</text><text x="0" y="0" font-size="34.68" fill="#d0d0d0" text-anchor="start"  textLength="309.4" lengthAdjust="spacingAndGlyphs">Control_Position_01</text></g><path d="M3601 494.29999999999995 L3635 506.29999999999995 L3619 510.29999999999995 L3614 528.3 Z" fill="#e6e6e6"/><path d="M3658 509.29999999999995 Q3679 481.29999999999995 3700 509.29999999999995 Q3679 537.3 3658 509.29999999999995 Z" fill="#e6e6e6"/><circle cx="3679" cy="509.29999999999995" r="9" fill="none" stroke="#282828" stroke-width="4"/><circle cx="3679" cy="509.29999999999995" r="4" fill="#e6e6e6"/><path d="M3721 499.29999999999995 H3731 L3737 492.29999999999995 H3746 L3752 499.29999999999995 H3761 V526.3 H3721 Z" fill="none" stroke="#a8a8a8" stroke-width="3"/><path d="M3734 506.29999999999995 L3748 520.3 M3748 506.29999999999995 L3734 520.3" stroke="#a8a8a8" stroke-width="3"/><rect x="3786" y="0" width="10" height="175" rx="5" fill="#3a3a3a"/></svg>
<div id="pr" class="a"></div>
<svg class="a" style="left:2525px;top:567px" width="1277" height="1261" viewBox="2525 567 1277 1261" font-family="Liberation Sans"><rect x="2525" y="643" width="86" height="1188" fill="#1b1b1b"/><defs><clipPath id="tabclip"><rect x="2525" y="643" width="86" height="1188"/></clipPath></defs><g clip-path="url(#tabclip)"><rect x="2530" y="669" width="100" height="85" rx="12" fill="#222222"/><rect x="2530" y="780" width="100" height="85" rx="12" fill="#222222"/><rect x="2530" y="865" width="100" height="85" rx="12" fill="#222222"/><rect x="2530" y="950" width="100" height="85" rx="12" fill="#222222"/><rect x="2530" y="1038" width="100" height="86" rx="12" fill="#222222"/><rect x="2530" y="1124" width="100" height="85" rx="12" fill="#222222"/><rect x="2530" y="1236" width="100" height="85" rx="12" fill="#222222"/><rect x="2530" y="1347" width="100" height="85" rx="12" fill="#222222"/><rect x="2530" y="1432" width="100" height="85" rx="12" fill="#222222"/><rect x="2530" y="1517" width="100" height="85" rx="12" fill="#222222"/><rect x="2530" y="1602" width="100" height="86" rx="12" fill="#222222"/><rect x="2530" y="1688" width="100" height="85" rx="12" fill="#222222"/><rect x="2530" y="1773" width="100" height="87" rx="12" fill="#222222"/><rect x="2530" y="794" width="100" height="227" fill="#222222"/><rect x="2530" y="1052" width="100" height="143" fill="#222222"/><rect x="2530" y="1361" width="100" height="485" fill="#222222"/><rect x="2530" y="1435" width="100" height="80" rx="12" fill="#2e2e2e"/></g><g fill="#b8b8b8"><rect x="2555" y="690" width="4" height="20"/><path d="M2549 712 H2565 V725 A8 8 0 0 1 2549 725Z"/><path d="M2577 690 V702 A7 7 0 0 0 2591 702 V690 L2587 690 V698 H2581 V690Z M2581 705 H2587 V728 A3 3 0 0 1 2581 728Z"/></g><g><path d="M2549 812 H2560 L2565 803 H2581 L2586 812 H2592 V842 H2549Z" fill="#b8b8b8"/><rect x="2554" y="818" width="24" height="19" fill="#262626"/><rect x="2557" y="822" width="18" height="2.5" fill="#b8b8b8"/><rect x="2557" y="827" width="18" height="2.5" fill="#b8b8b8"/><rect x="2557" y="832" width="18" height="2.5" fill="#b8b8b8"/><circle cx="2586" cy="822" r="2.5" fill="#262626"/><circle cx="2586" cy="834" r="2.5" fill="#262626"/></g><g fill="#b8b8b8"><path d="M2549 890 Q2549 886 2553 886 H2589 Q2593 886 2593 890 V902 H2549Z"/><rect x="2558" y="902" width="26" height="28"/><path d="M2563 924 L2571 913 L2579 924Z" fill="#262626"/></g><g><path d="M2554 978 V1014 H2586" fill="none" stroke="#b8b8b8" stroke-width="2.5"/><path d="M2549 983 V1018 H2581" fill="none" stroke="#b8b8b8" stroke-width="2.5"/><rect x="2558" y="972" width="34" height="36" fill="#b8b8b8"/><path d="M2562 1004 L2575 986 L2588 1004Z" fill="#262626"/><circle cx="2584" cy="979" r="3" fill="#262626"/></g><g><path d="M2560 1060 L2549 1085 Q2549 1098 2560 1100 L2566 1100 Z" fill="#b8b8b8"/><circle cx="2586" cy="1066" r="6" fill="#b8b8b8"/><circle cx="2578" cy="1089" r="10" fill="none" stroke="#b8b8b8" stroke-width="3"/></g><g><circle cx="2570" cy="1166" r="19" fill="none" stroke="#c0505a" stroke-width="3.5"/><path d="M2556 1155 Q2566 1150 2572 1158 Q2566 1166 2574 1170 L2570 1182 Q2560 1178 2558 1168Z M2578 1160 Q2586 1158 2586 1168 L2580 1174Z" fill="#c0505a"/><path d="M2550 1186 L2590 1146" stroke="#c0505a" stroke-width="3.5"/></g><g><rect x="2549" y="1258" width="42" height="9" fill="none" stroke="#b8b8b8" stroke-width="3"/><path d="M2552 1270 V1296 H2589 V1270" fill="none" stroke="#b8b8b8" stroke-width="3"/><rect x="2564" y="1275" width="12" height="4" fill="#b8b8b8"/></g><g><path d="M2549 1380 V1368 H2561 M2580 1368 H2592 V1380 M2592 1399 V1411 H2580 M2561 1411 H2549 V1399" fill="none" stroke="#bf7a3c" stroke-width="3"/><rect x="2557" y="1376" width="27" height="27" rx="2" fill="#d98a48"/></g><g><path d="M2585 1456 C2575 1452 2566 1460 2569 1470 L2553 1486 C2549 1490 2552 1497 2558 1494 L2574 1478 C2583 1481 2592 1473 2590 1464 L2583 1470 L2577 1466Z" fill="#5b86d6" stroke="#5b86d6" stroke-width="4" stroke-linejoin="round"/></g><g fill="#5b86d6"><circle cx="2556" cy="1546" r="6"/><circle cx="2589" cy="1546" r="5"/><circle cx="2556" cy="1577" r="5"/><circle cx="2589" cy="1578" r="6"/><path d="M2562 1546 H2584 M2556 1552 V1572 M2560 1550 L2585 1574" stroke="#5b86d6" stroke-width="3"/></g><g><path d="M2586 1664 A17 17 0 1 1 2570 1637" fill="none" stroke="#5b86d6" stroke-width="4"/><circle cx="2570" cy="1647" r="8" fill="#5b86d6"/><circle cx="2587" cy="1632" r="5" fill="#5b86d6"/></g><g><path d="M2558 1744 Q2548 1730 2560 1720 L2585 1712 Q2592 1714 2590 1720 L2580 1746 Q2570 1756 2558 1744Z" fill="none" stroke="#5b86d6" stroke-width="4"/><circle cx="2566" cy="1736" r="7" fill="none" stroke="#5b86d6" stroke-width="4"/></g><g><path d="M2553 1800 H2587 L2570 1832Z" fill="none" stroke="#1a8a6c" stroke-width="3.5"/><rect x="2548" y="1795" width="10" height="10" fill="#222" stroke="#1a8a6c" stroke-width="3"/><rect x="2582" y="1795" width="10" height="10" fill="#222" stroke="#1a8a6c" stroke-width="3"/></g><rect x="2549.5" y="573.5" width="97" height="60" rx="11" fill="#262626" stroke="#3b3b3b" stroke-width="3"/><g><rect x="2563" y="581" width="44" height="19" rx="9.5" fill="#e6e6e6"/><rect x="2582" y="584" width="21" height="13" rx="5" fill="#262626"/><rect x="2563" y="606" width="44" height="19" rx="9.5" fill="#e6e6e6"/><rect x="2591" y="609" width="12" height="13" rx="5" fill="#262626"/></g><path d="M2617 600 L2626 609 L2635 600" fill="none" stroke="#e0e0e0" stroke-width="3"/><rect x="2994.5" y="574.5" width="345" height="58" rx="10" fill="#1d1d1d" stroke="#3b3b3b" stroke-width="3"/><circle cx="3024" cy="597" r="12" fill="none" stroke="#e6e6e6" stroke-width="3.5"/><path d="M3033 606 L3045 619" stroke="#e6e6e6" stroke-width="4"/><g transform="translate(3074,615) scale(0.9804,1)"><text x="0" y="2" font-size="34.68" fill="#000" opacity="0.45" text-anchor="start" >Search</text><text x="0" y="0" font-size="34.68" fill="#8c8c8c" text-anchor="start" >Search</text></g><rect x="3720.5" y="574.5" width="57" height="58" rx="10" fill="#262626" stroke="#3b3b3b" stroke-width="3"/><path d="M3740 600 L3749 609 L3758 600" fill="none" stroke="#e0e0e0" stroke-width="3"/><g transform="translate(2645,679)"><path d="M0 12 V0 H12 M32 0 H44 V12 M44 32 V44 H32 M12 44 H0 V32" fill="none" stroke="#999" stroke-width="4"/><rect x="9.5" y="9.5" width="25" height="25" rx="2" fill="#e6e6e6"/></g><g transform="translate(2719,711) scale(0.9804,1)"><text x="0" y="2" font-size="34.68" fill="#000" opacity="0.45" text-anchor="start" >2_Organic_Fill_Region.001</text><text x="0" y="0" font-size="34.68" fill="#e6e6e6" text-anchor="start" >2_Organic_Fill_Region.001</text></g><path d="M3178 687 L3191 700 L3178 713" fill="none" stroke="#e6e6e6" stroke-width="3.5"/><g transform="translate(3230,684) scale(1)"><circle cx="0" cy="0" r="5.2" fill="#9a9a9a"/><circle cx="14" cy="3.5" r="6.2" fill="#9a9a9a"/><circle cx="6.5" cy="18.5" r="7.5" fill="#c8c8c8"/><circle cx="27.5" cy="27.2" r="11.6" fill="#e6e6e6"/></g><g transform="translate(3297,711) scale(0.9804,1)"><text x="0" y="2" font-size="34.68" fill="#000" opacity="0.45" text-anchor="start" >GeometryNodes</text><text x="0" y="0" font-size="34.68" fill="#e6e6e6" text-anchor="start" >GeometryNodes</text></g><g transform="translate(3728.8,679)" fill="none" stroke="#a8a8a8" stroke-width="2.6" stroke-linejoin="round" stroke-linecap="round"><path d="M5.7 16.1 L9.2 12.6 H18 L28.2 2.5 V0.5 H31 L40.8 10 V13.3 H37 L28.2 22.1 V31.6 L25 34.8 Z"/><path d="M0.5 40.6 L11.7 29.4"/></g><rect x="2638" y="785" width="1140" height="58" rx="10" fill="#232323"/><rect x="2638" y="783" width="1140" height="57" rx="10" fill="#575757"/><path d="M2673 796 V828 M2657 812 H2689" stroke="#e6e6e6" stroke-width="3.5"/><g transform="translate(3236,824) scale(0.9804,1)"><text x="0" y="2" font-size="34.68" fill="#000" opacity="0.45" text-anchor="middle" >Add Modifier</text><text x="0" y="0" font-size="34.68" fill="#e6e6e6" text-anchor="middle" >Add Modifier</text></g><rect x="2637.5" y="876" width="1140" height="788" rx="12" fill="#3d3d3d" stroke="#4772b3" stroke-width="3"/><path d="M2665 908 L2674 917 L2683 908" fill="none" stroke="#e0e0e0" stroke-width="3"/><g transform="translate(2707,896) scale(1)"><circle cx="0" cy="0" r="5.2" fill="#9a9a9a"/><circle cx="14" cy="3.5" r="6.2" fill="#9a9a9a"/><circle cx="6.5" cy="18.5" r="7.5" fill="#c8c8c8"/><circle cx="27.5" cy="27.2" r="11.6" fill="#e6e6e6"/></g><rect x="2788" y="886" width="523" height="56" rx="9" fill="#1d1d1d"/><rect x="3290" y="886" width="21" height="56" fill="#1d1d1d"/><g transform="translate(2809,925) scale(0.9804,1)"><text x="0" y="2" font-size="34.68" fill="#000" opacity="0.45" text-anchor="start" >GeometryNodes</text><text x="0" y="0" font-size="34.68" fill="#e6e6e6" text-anchor="start" >GeometryNodes</text></g><rect x="3314" y="886" width="59" height="56" fill="#545454"/><rect x="3376" y="886" width="59" height="56" fill="#4772b3"/><rect x="3438" y="886" width="59" height="56" fill="#4772b3"/><rect x="3500" y="886" width="59" height="56" fill="#4772b3"/><path d="M3562 886 H3611 Q3621 886 3621 896 V932 Q3621 942 3611 942 H3562Z" fill="#262626"/><g fill="none" stroke="#e6e6e6" stroke-width="3"><path d="M3327 897 H3357 L3342 931Z"/><rect x="3322" y="893" width="9" height="9" fill="#545454"/><rect x="3353" y="893" width="9" height="9" fill="#545454"/><rect x="3338" y="927" width="9" height="9" fill="#545454"/></g><g fill="none" stroke="#b8c8e8" stroke-width="2.5"><path d="M3391 900 V930 M3391 930 H3418 M3418 930 V910 M3395 900 H3409"/><rect x="3386" y="895" width="9" height="9"/><rect x="3386" y="926" width="9" height="9"/><rect x="3414" y="926" width="9" height="9"/></g><rect x="3411" y="892" width="15" height="15" rx="2" fill="#fff"/><g><rect x="3448" y="898" width="40" height="26" rx="2" fill="none" stroke="#fff" stroke-width="3.5"/><path d="M3468 924 V932 M3457 933 H3479" stroke="#fff" stroke-width="3.5"/></g><g><path d="M3509 900 H3518 L3522 893 H3538 L3542 900 H3550 V929 H3509Z" fill="#fff"/><circle cx="3530" cy="913" r="9" fill="none" stroke="#4772b3" stroke-width="3.5"/></g><path d="M3582 908 L3591 917 L3600 908" fill="none" stroke="#e0e0e0" stroke-width="3"/><path d="M3643 903 L3666 926 M3666 903 L3643 926" stroke="#e6e6e6" stroke-width="3.2"/><g fill="#8a8a8a"><rect x="3716.0" y="909" width="4" height="4"/><rect x="3716.0" y="917" width="4" height="4"/><rect x="3726.5" y="909" width="4" height="4"/><rect x="3726.5" y="917" width="4" height="4"/><rect x="3737.0" y="909" width="4" height="4"/><rect x="3737.0" y="917" width="4" height="4"/><rect x="3747.5" y="909" width="4" height="4"/><rect x="3747.5" y="917" width="4" height="4"/></g><rect x="2663" y="979" width="1088" height="56" rx="9" fill="#545454"/><rect x="2663" y="979" width="93" height="56" rx="9" fill="#262626"/><rect x="2740" y="979" width="16" height="56" fill="#262626"/><g transform="translate(2678,986)" fill="none"><rect x="2" y="0" width="25" height="16" rx="7" fill="#e6e6e6"/><rect x="7" y="6" width="16" height="4" rx="1" fill="#262626"/><rect x="-2" y="23" width="25" height="17" rx="7" fill="#e6e6e6"/><rect x="3" y="31" width="16" height="4" rx="1" fill="#262626"/><path d="M30 4 Q35 4 35 9 V28 Q35 33 30 33 H25" stroke="#bdbdbd" stroke-width="3"/></g><path d="M2726 1004 L2735 1013 L2744 1004" fill="none" stroke="#e0e0e0" stroke-width="3"/><rect x="2758" y="979" width="807" height="56" fill="#1d1d1d"/><g transform="translate(2782,1018) scale(0.9804,1)"><text x="0" y="2" font-size="34.68" fill="#000" opacity="0.45" text-anchor="start" >Tiles_Spawner of Sprites.001</text><text x="0" y="0" font-size="34.68" fill="#e6e6e6" text-anchor="start" >Tiles_Spawner of Sprites.001</text></g><rect x="3566" y="979" width="3" height="56" fill="#3d3d3d"/><rect x="3627" y="979" width="3" height="56" fill="#3d3d3d"/><rect x="3689" y="979" width="3" height="56" fill="#3d3d3d"/><path d="M3597.2 987.2 C3592 991 3587 993 3578.5 993.3 V1005 C3578.5 1016 3585 1022 3597.2 1028.5 C3609 1022 3615.6 1016 3615.6 1005 V993.3 C3607 993 3602 991 3597.2 987.2Z" fill="none" stroke="#bdbdbd" stroke-width="3"/><g transform="translate(3638,988)" fill="none" stroke-width="3"><path d="M9.8 9.9 H1.5 V39.3 H29.5 V32.5" stroke="#bdbdbd"/><path d="M14.3 12 V26.8 H39.7 V14.5 M14.3 12 V1.5 H29.5" stroke="#e6e6e6"/><path d="M28 0 H30 L41.2 11.2 V13.3 H28Z" fill="#e6e6e6" stroke="none"/></g><path d="M3710 996 L3733.3 1019.3 M3733.3 996 L3710 1019.3" stroke="#e6e6e6" stroke-width="3.2" stroke-linecap="round"/><g transform="translate(3058,1096.5) scale(0.9804,1)"><text x="0" y="2" font-size="34.68" fill="#000" opacity="0.45" text-anchor="end" >Min</text><text x="0" y="0" font-size="34.68" fill="#e6e6e6" text-anchor="end" >Min</text></g><rect x="3090" y="1056.5" width="537" height="56" rx="9" fill="#545454"/><rect x="3600" y="1056.5" width="27" height="56" fill="#545454"/><g transform="translate(3358,1096.5) scale(0.9804,1)"><text x="0" y="2" font-size="34.68" fill="#000" opacity="0.45" text-anchor="middle" >0.460</text><text x="0" y="0" font-size="34.68" fill="#e6e6e6" text-anchor="middle" >0.460</text></g><rect x="3630" y="1056.5" width="58" height="56" rx="9" fill="#545454"/><rect x="3630" y="1056.5" width="15" height="56" fill="#545454"/><g fill="none" stroke="#bdbdbd" stroke-width="3.1"><path d="M3635.6 1081.0 V1064.5 H3645.3 M3655.8 1064.5 H3683.5 V1081.0 M3683.5 1095.5 V1105.9 H3655.8 M3645.3 1105.9 H3635.6 V1095.5"/></g><rect x="3647" y="1063.0" width="9.3" height="44.3" fill="#e6e6e6"/><rect x="3634.1" y="1085.2" width="50.9" height="9.7" fill="#e6e6e6"/><circle cx="3723.4" cy="1083.5" r="6.4" fill="#e6e6e6"/><g transform="translate(3058,1173.3) scale(0.9804,1)"><text x="0" y="2" font-size="34.68" fill="#000" opacity="0.45" text-anchor="end" >Max</text><text x="0" y="0" font-size="34.68" fill="#e6e6e6" text-anchor="end" >Max</text></g><rect x="3090" y="1133.3" width="537" height="56" rx="9" fill="#545454"/><rect x="3600" y="1133.3" width="27" height="56" fill="#545454"/><g transform="translate(3358,1173.3) scale(0.9804,1)"><text x="0" y="2" font-size="34.68" fill="#000" opacity="0.45" text-anchor="middle" >2.060</text><text x="0" y="0" font-size="34.68" fill="#e6e6e6" text-anchor="middle" >2.060</text></g><rect x="3630" y="1133.3" width="58" height="56" rx="9" fill="#545454"/><rect x="3630" y="1133.3" width="15" height="56" fill="#545454"/><g fill="none" stroke="#bdbdbd" stroke-width="3.1"><path d="M3635.6 1157.8 V1141.3 H3645.3 M3655.8 1141.3 H3683.5 V1157.8 M3683.5 1172.3 V1182.7 H3655.8 M3645.3 1182.7 H3635.6 V1172.3"/></g><rect x="3647" y="1139.8" width="9.3" height="44.3" fill="#e6e6e6"/><rect x="3634.1" y="1162.0" width="50.9" height="9.7" fill="#e6e6e6"/><circle cx="3723.4" cy="1160.3" r="6.4" fill="#e6e6e6"/><g transform="translate(3058,1250) scale(0.9804,1)"><text x="0" y="2" font-size="34.68" fill="#000" opacity="0.45" text-anchor="end" >Density</text><text x="0" y="0" font-size="34.68" fill="#e6e6e6" text-anchor="end" >Density</text></g><rect x="3090" y="1210" width="537" height="56" rx="9" fill="#545454"/><rect x="3600" y="1210" width="27" height="56" fill="#545454"/><g transform="translate(3358,1250) scale(0.9804,1)"><text x="0" y="2" font-size="34.68" fill="#000" opacity="0.45" text-anchor="middle" >1.240</text><text x="0" y="0" font-size="34.68" fill="#e6e6e6" text-anchor="middle" >1.240</text></g><rect x="3630" y="1210" width="58" height="56" rx="9" fill="#545454"/><rect x="3630" y="1210" width="15" height="56" fill="#545454"/><g fill="none" stroke="#bdbdbd" stroke-width="3.1"><path d="M3635.6 1234.5 V1218 H3645.3 M3655.8 1218 H3683.5 V1234.5 M3683.5 1249 V1259.4 H3655.8 M3645.3 1259.4 H3635.6 V1249"/></g><rect x="3647" y="1216.5" width="9.3" height="44.3" fill="#e6e6e6"/><rect x="3634.1" y="1238.7" width="50.9" height="9.7" fill="#e6e6e6"/><circle cx="3723.4" cy="1237" r="6.4" fill="#e6e6e6"/><g transform="translate(3058,1327.3) scale(0.9804,1)"><text x="0" y="2" font-size="34.68" fill="#000" opacity="0.45" text-anchor="end" >Material</text><text x="0" y="0" font-size="34.68" fill="#e6e6e6" text-anchor="end" >Material</text></g><rect x="3090" y="1287.3" width="537" height="56" rx="9" fill="#1d1d1d"/><circle cx="3124" cy="1315.3" r="20" fill="#e6e6e6"/><path d="M3124 1295.3 V1315.3 H3104 A20 20 0 0 1 3124 1295.3Z" fill="#1d1d1d"/><path d="M3124 1315.3 H3144 A20 20 0 0 1 3124 1335.3Z" fill="#1d1d1d"/><circle cx="3124" cy="1315.3" r="20" fill="none" stroke="#e6e6e6" stroke-width="2"/><g transform="translate(3169,1327.3) scale(0.9804,1)"><text x="0" y="2" font-size="34.68" fill="#000" opacity="0.45" text-anchor="start" >Sprite_Material_Exampl...</text><text x="0" y="0" font-size="34.68" fill="#e6e6e6" text-anchor="start" >Sprite_Material_Exampl...</text></g><path d="M3583 1304.3 L3606 1327.3 M3606 1304.3 L3583 1327.3" stroke="#e6e6e6" stroke-width="3.2"/><g transform="translate(3058,1404.5) scale(0.9804,1)"><text x="0" y="2" font-size="34.68" fill="#000" opacity="0.45" text-anchor="end" >Seed</text><text x="0" y="0" font-size="34.68" fill="#e6e6e6" text-anchor="end" >Seed</text></g><rect x="3090" y="1364.5" width="537" height="56" rx="9" fill="#545454"/><g transform="translate(3358,1404.5) scale(0.9804,1)"><text x="0" y="2" font-size="34.68" fill="#000" opacity="0.45" text-anchor="middle" >10</text><text x="0" y="0" font-size="34.68" fill="#e6e6e6" text-anchor="middle" >10</text></g><circle cx="3723.4" cy="1391.5" r="6.4" fill="#e6e6e6"/><g transform="translate(3058,1481.7) scale(0.9804,1)"><text x="0" y="2" font-size="34.68" fill="#000" opacity="0.45" text-anchor="end" >Controller</text><text x="0" y="0" font-size="34.68" fill="#e6e6e6" text-anchor="end" >Controller</text></g><rect x="3090" y="1441.7" width="537" height="56" rx="9" fill="#1d1d1d"/><g transform="translate(3102,1447.7)"><path d="M0 12 V0 H12 M32 0 H44 V12 M44 32 V44 H32 M12 44 H0 V32" fill="none" stroke="#999" stroke-width="4"/><rect x="9.5" y="9.5" width="25" height="25" rx="2" fill="#e6e6e6"/></g><g transform="translate(3169,1481.7) scale(0.9804,1)"><text x="0" y="2" font-size="34.68" fill="#000" opacity="0.45" text-anchor="start" >Control_Position_02.001</text><text x="0" y="0" font-size="34.68" fill="#e6e6e6" text-anchor="start" >Control_Position_02.001</text></g><path d="M3583 1458.7 L3606 1481.7 M3606 1458.7 L3583 1481.7" stroke="#e6e6e6" stroke-width="3.2"/><g transform="translate(3058,1558.7) scale(0.9804,1)"><text x="0" y="2" font-size="34.68" fill="#000" opacity="0.45" text-anchor="end" >Instanced_Object</text><text x="0" y="0" font-size="34.68" fill="#e6e6e6" text-anchor="end" >Instanced_Object</text></g><rect x="3090" y="1518.7" width="537" height="56" rx="9" fill="#1d1d1d"/><g transform="translate(3102,1524.7)"><path d="M0 12 V0 H12 M32 0 H44 V12 M44 32 V44 H32 M12 44 H0 V32" fill="none" stroke="#999" stroke-width="4"/><rect x="9.5" y="9.5" width="25" height="25" rx="2" fill="#e6e6e6"/></g><g transform="translate(3169,1558.7) scale(0.9804,1)"><text x="0" y="2" font-size="34.68" fill="#000" opacity="0.45" text-anchor="start" >Ground_Tile_Quad_01_...</text><text x="0" y="0" font-size="34.68" fill="#e6e6e6" text-anchor="start" >Ground_Tile_Quad_01_...</text></g><path d="M3583 1535.7 L3606 1558.7 M3606 1535.7 L3583 1558.7" stroke="#e6e6e6" stroke-width="3.2"/><path d="M2686 1610 L2698 1622 L2686 1634" fill="none" stroke="#e6e6e6" stroke-width="3.5"/><g transform="translate(2725,1634) scale(0.9804,1)"><text x="0" y="2" font-size="34.68" fill="#000" opacity="0.45" text-anchor="start" >Manage</text><text x="0" y="0" font-size="34.68" fill="#e6e6e6" text-anchor="start" >Manage</text></g></svg>
<svg class="a" style="left:0;top:940px" width="2511" height="890" viewBox="0 940 2511 890">
 <rect x="2491" y="949" width="11" height="842" rx="5.5" fill="#2e2e2e"/>
 <rect x="8" y="1814" width="2474" height="9.5" rx="4.75" fill="#2e2e2e"/>
 <rect x="2483" y="1010" width="30" height="56" rx="8" fill="#222"/>
 <path d="M2501 1028 L2492 1037 L2501 1046" fill="none" stroke="#8a8a8a" stroke-width="3.5"/>
</svg>
<svg class="a" style="left:0;top:1831px" width="3811" height="40" viewBox="0 1831 3811 40" font-family="Liberation Sans">
 <g fill="none" stroke="#a0a0a0" stroke-width="3">
  <path d="M-10 1850 H14 Q25 1850 25 1861 V1880"/>
  <rect x="159" y="1849" width="34" height="40" rx="10"/>
  <path d="M412 1880 V1859 Q412 1849 422 1849 H432"/>
 </g>
 <rect x="170" y="1856" width="12" height="20" rx="3" fill="#a0a0a0"/>
 <path d="M434 1848 H437 Q447 1848 447 1858 V1868 H434Z" fill="#a0a0a0"/>
 <g font-size="34" fill="#a0a0a0">
  <text x="32" y="1881">Select</text>
  <text x="200" y="1881">Rotate View</text>
  <text x="453" y="1881">Right Mouse Navigation</text>
  <text x="2062" y="1881">Splatter_Tile_Setup</text>
  <text x="2382" y="1881">2_Organic_Fill_Region.001</text>
  <text x="2818" y="1881">Verts:2,804</text>
  <text x="3030" y="1881">Faces:2,770</text>
  <text x="3253" y="1881">Tris:2,786</text>
  <text x="3442" y="1881">Objects:57/75</text>
  <text x="3689" y="1881">5.0.1</text>
 </g>
 <g fill="#a0a0a0">
  <rect x="2366.5" y="1849" width="2.5" height="30"/><rect x="2801.5" y="1849" width="2.5" height="30"/>
  <rect x="3014.5" y="1849" width="2.5" height="30"/><rect x="3237.5" y="1849" width="2.5" height="30"/>
  <rect x="3426.5" y="1849" width="2.5" height="30"/><rect x="3674.5" y="1849" width="2.5" height="30"/>
 </g>
</svg>

</body></html>
